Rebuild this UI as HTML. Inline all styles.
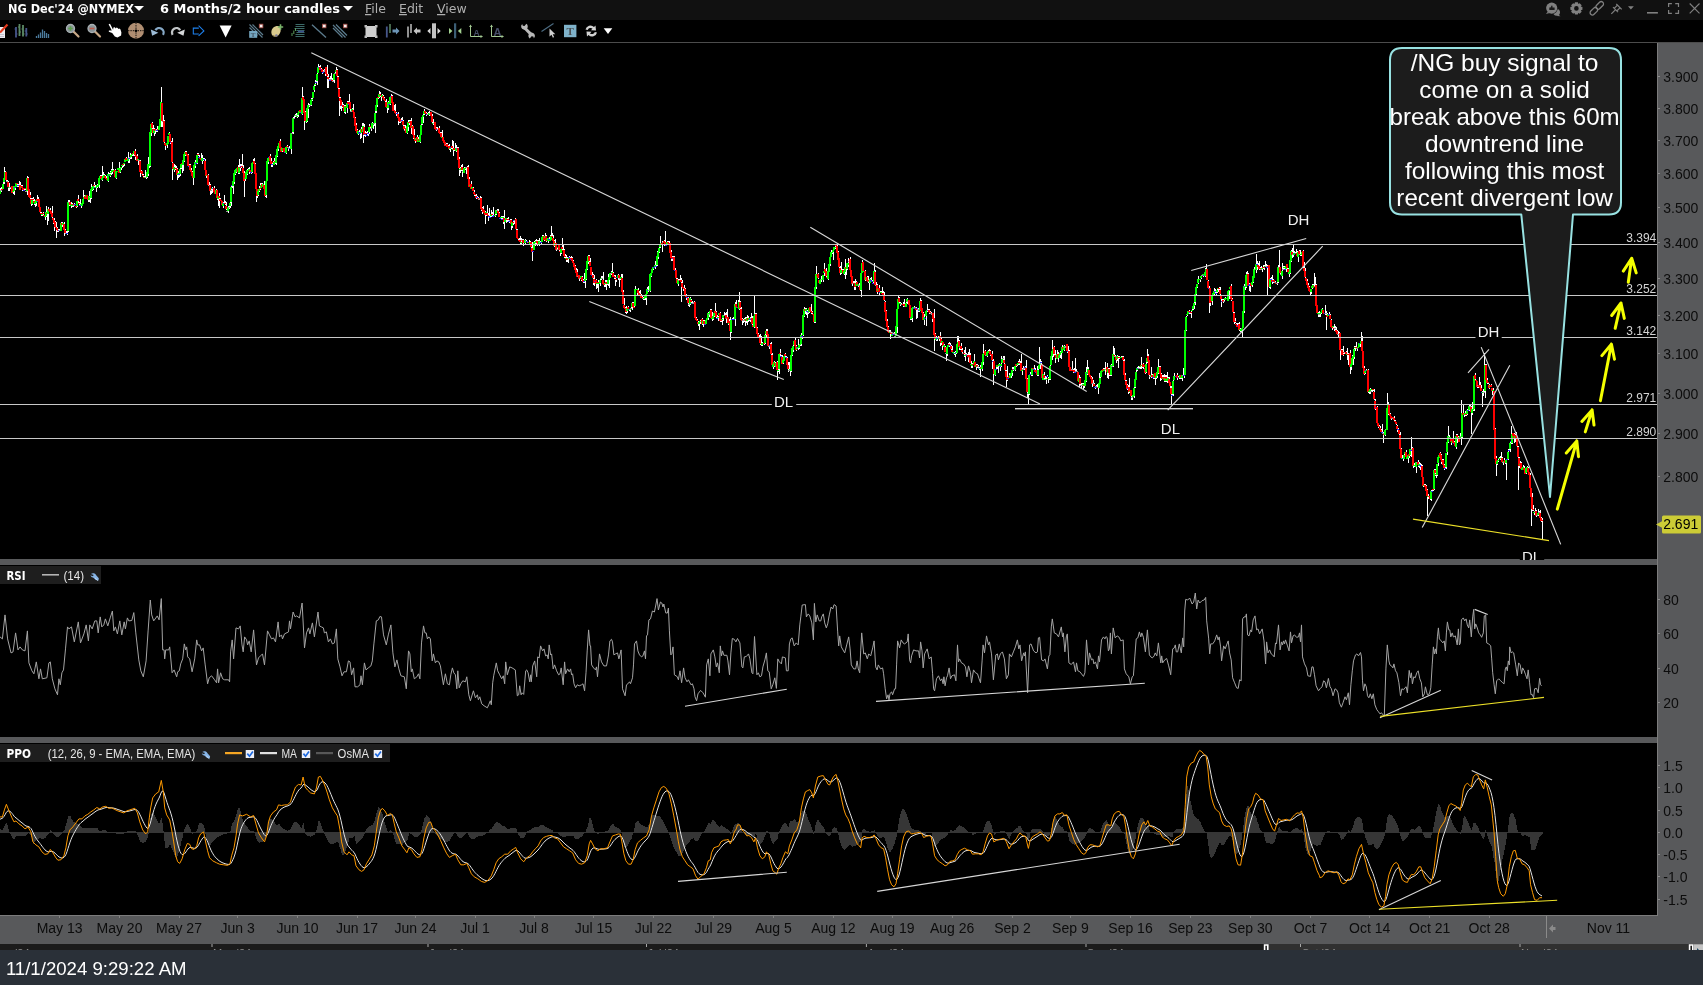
<!DOCTYPE html>
<html lang="en"><head><meta charset="utf-8"><title>NG Dec'24 @NYMEX - 6 Months/2 hour candles</title>
<style>
html,body{margin:0;padding:0;background:#000;overflow:hidden}
body{width:1703px;height:985px;position:relative;font-family:"Liberation Sans",sans-serif}
svg{position:absolute;left:0;top:0;display:block;will-change:transform}
text{font-family:"Liberation Sans",sans-serif}
.t{font-family:"DejaVu Sans","Liberation Sans",sans-serif;font-weight:bold;font-size:12px;fill:#fff}
.m{font-family:"DejaVu Sans","Liberation Sans",sans-serif;font-size:12.5px;fill:#b0b0b0}
.ax{font-size:14px;fill:#0c0c0c}
.lv{font-size:12px;fill:#d4d4d4}
.lb{font-size:15px;fill:#f0f0f0}
.co{font-size:24px;fill:#ffffff;text-anchor:middle}
.hd{font-size:12px;fill:#e6e6e6}
.hb{font-family:"DejaVu Sans","Liberation Sans",sans-serif;font-weight:bold;font-size:12px;fill:#fff}
</style></head><body>
<svg width="1703" height="985" viewBox="0 0 1703 985">
<rect width="1703" height="985" fill="#000"/>
<rect x="0" y="0" width="1703" height="20" fill="#111111"/>
<rect x="0" y="42" width="1703" height="1" fill="#4c4c4c"/>
<rect x="1657" y="43" width="46" height="901" fill="#58595b"/>
<rect x="1657" y="43" width="1" height="873" fill="#7c7c7c"/>
<rect x="0" y="559" width="1657" height="6" fill="#58595b"/>
<rect x="0" y="737" width="1657" height="6" fill="#58595b"/>
<rect x="0" y="915" width="1703" height="29" fill="#58595b"/>
<rect x="0" y="915" width="1658" height="1" fill="#7c7c7c"/>
<rect x="0" y="944" width="1703" height="6" fill="#1b1b1b"/>
<rect x="1266" y="944" width="424" height="6" fill="#303030"/>
<clipPath id="cs"><rect x="0" y="944" width="1703" height="6"/></clipPath><g clip-path="url(#cs)">
<rect x="-6.5" y="944" width="1" height="3" fill="#a8a8a8"/>
<text x="-5" y="956.6" style="font-size:11px;fill:#8c8c8c">Apr '24</text>
<rect x="211.5" y="944" width="1" height="3" fill="#a8a8a8"/>
<text x="213" y="956.6" style="font-size:11px;fill:#8c8c8c">May '24</text>
<rect x="427.5" y="944" width="1" height="3" fill="#a8a8a8"/>
<text x="429" y="956.6" style="font-size:11px;fill:#8c8c8c">Jun '24</text>
<rect x="646" y="944" width="1" height="3" fill="#a8a8a8"/>
<text x="647.5" y="956.6" style="font-size:11px;fill:#8c8c8c">Jul '24</text>
<rect x="865.9" y="944" width="1" height="3" fill="#a8a8a8"/>
<text x="867.4" y="956.6" style="font-size:11px;fill:#8c8c8c">Aug '24</text>
<rect x="1085.5" y="944" width="1" height="3" fill="#a8a8a8"/>
<text x="1087" y="956.6" style="font-size:11px;fill:#8c8c8c">Sep '24</text>
<rect x="1300" y="944" width="1" height="3" fill="#a8a8a8"/>
<text x="1301.5" y="956.6" style="font-size:11px;fill:#8c8c8c">Oct '24</text>
<rect x="1519.5" y="944" width="1" height="3" fill="#a8a8a8"/>
<text x="1521" y="956.6" style="font-size:11px;fill:#8c8c8c">Nov '24</text>
</g>
<path d="M1263.8 950v-5.800h4.800v5.800h-1.600v-4.200h-1.600v4.200z" fill="#fff"/>
<path d="M1688.8 950v-5.800h4.800v5.800h-1.600v-4.200h-1.600v4.200z" fill="#fff"/>
<rect x="1693.6" y="944.2" width="9.400" height="5.800" fill="#c4c4c4"/><path d="M1697 948l2 2h-2z" fill="#1e4a66"/>
<rect x="0" y="950" width="1703" height="35" fill="#2a3038"/>
<text x="5.9" y="975" style="font-size:18px;fill:#fff" textLength="180.7" lengthAdjust="spacingAndGlyphs">11/1/2024 9:29:22 AM</text>
<rect x="1658" y="76" width="2" height="1" fill="#8c8c8c"/>
<text class="ax" x="1663.3" y="82">3.900</text>
<rect x="1658" y="108" width="2" height="1" fill="#8c8c8c"/>
<text class="ax" x="1663.3" y="114">3.800</text>
<rect x="1658" y="140" width="2" height="1" fill="#8c8c8c"/>
<text class="ax" x="1663.3" y="146">3.700</text>
<rect x="1658" y="173" width="2" height="1" fill="#8c8c8c"/>
<text class="ax" x="1663.3" y="179">3.600</text>
<rect x="1658" y="207" width="2" height="1" fill="#8c8c8c"/>
<text class="ax" x="1663.3" y="213">3.500</text>
<rect x="1658" y="242" width="2" height="1" fill="#8c8c8c"/>
<text class="ax" x="1663.3" y="248">3.400</text>
<rect x="1658" y="278" width="2" height="1" fill="#8c8c8c"/>
<text class="ax" x="1663.3" y="284">3.300</text>
<rect x="1658" y="315" width="2" height="1" fill="#8c8c8c"/>
<text class="ax" x="1663.3" y="321">3.200</text>
<rect x="1658" y="353" width="2" height="1" fill="#8c8c8c"/>
<text class="ax" x="1663.3" y="359">3.100</text>
<rect x="1658" y="393" width="2" height="1" fill="#8c8c8c"/>
<text class="ax" x="1663.3" y="399">3.000</text>
<rect x="1658" y="433" width="2" height="1" fill="#8c8c8c"/>
<text class="ax" x="1663.3" y="439">2.900</text>
<rect x="1658" y="476" width="2" height="1" fill="#8c8c8c"/>
<text class="ax" x="1663.3" y="482">2.800</text>
<rect x="1658" y="599" width="2" height="1" fill="#8c8c8c"/>
<text class="ax" x="1663.3" y="605">80</text>
<rect x="1658" y="633" width="2" height="1" fill="#8c8c8c"/>
<text class="ax" x="1663.3" y="639">60</text>
<rect x="1658" y="668" width="2" height="1" fill="#8c8c8c"/>
<text class="ax" x="1663.3" y="674">40</text>
<rect x="1658" y="702" width="2" height="1" fill="#8c8c8c"/>
<text class="ax" x="1663.3" y="708">20</text>
<rect x="1658" y="765" width="2" height="1" fill="#8c8c8c"/>
<text class="ax" x="1663.3" y="771">1.5</text>
<rect x="1658" y="787" width="2" height="1" fill="#8c8c8c"/>
<text class="ax" x="1663.3" y="793">1.0</text>
<rect x="1658" y="810" width="2" height="1" fill="#8c8c8c"/>
<text class="ax" x="1663.3" y="816">0.5</text>
<rect x="1658" y="832" width="2" height="1" fill="#8c8c8c"/>
<text class="ax" x="1663.3" y="838">0.0</text>
<rect x="1658" y="854" width="2" height="1" fill="#8c8c8c"/>
<text class="ax" x="1663.3" y="860">-0.5</text>
<rect x="1658" y="876" width="2" height="1" fill="#8c8c8c"/>
<text class="ax" x="1663.3" y="882">-1.0</text>
<rect x="1658" y="899" width="2" height="1" fill="#8c8c8c"/>
<text class="ax" x="1663.3" y="905">-1.5</text>
<rect x="59" y="916" width="1" height="2" fill="#828282"/>
<text class="ax" x="59.6" y="933" text-anchor="middle">May 13</text>
<rect x="119" y="916" width="1" height="2" fill="#828282"/>
<text class="ax" x="119.5" y="933" text-anchor="middle">May 20</text>
<rect x="179" y="916" width="1" height="2" fill="#828282"/>
<text class="ax" x="179" y="933" text-anchor="middle">May 27</text>
<rect x="237" y="916" width="1" height="2" fill="#828282"/>
<text class="ax" x="237.6" y="933" text-anchor="middle">Jun 3</text>
<rect x="297" y="916" width="1" height="2" fill="#828282"/>
<text class="ax" x="297.5" y="933" text-anchor="middle">Jun 10</text>
<rect x="357" y="916" width="1" height="2" fill="#828282"/>
<text class="ax" x="357" y="933" text-anchor="middle">Jun 17</text>
<rect x="415" y="916" width="1" height="2" fill="#828282"/>
<text class="ax" x="415.6" y="933" text-anchor="middle">Jun 24</text>
<rect x="475" y="916" width="1" height="2" fill="#828282"/>
<text class="ax" x="475" y="933" text-anchor="middle">Jul 1</text>
<rect x="534" y="916" width="1" height="2" fill="#828282"/>
<text class="ax" x="534" y="933" text-anchor="middle">Jul 8</text>
<rect x="593" y="916" width="1" height="2" fill="#828282"/>
<text class="ax" x="593.5" y="933" text-anchor="middle">Jul 15</text>
<rect x="653" y="916" width="1" height="2" fill="#828282"/>
<text class="ax" x="653.4" y="933" text-anchor="middle">Jul 22</text>
<rect x="713" y="916" width="1" height="2" fill="#828282"/>
<text class="ax" x="713.3" y="933" text-anchor="middle">Jul 29</text>
<rect x="773" y="916" width="1" height="2" fill="#828282"/>
<text class="ax" x="773.5" y="933" text-anchor="middle">Aug 5</text>
<rect x="833" y="916" width="1" height="2" fill="#828282"/>
<text class="ax" x="833.4" y="933" text-anchor="middle">Aug 12</text>
<rect x="892" y="916" width="1" height="2" fill="#828282"/>
<text class="ax" x="892.3" y="933" text-anchor="middle">Aug 19</text>
<rect x="952" y="916" width="1" height="2" fill="#828282"/>
<text class="ax" x="952.2" y="933" text-anchor="middle">Aug 26</text>
<rect x="1012" y="916" width="1" height="2" fill="#828282"/>
<text class="ax" x="1012.5" y="933" text-anchor="middle">Sep 2</text>
<rect x="1070" y="916" width="1" height="2" fill="#828282"/>
<text class="ax" x="1070.4" y="933" text-anchor="middle">Sep 9</text>
<rect x="1130" y="916" width="1" height="2" fill="#828282"/>
<text class="ax" x="1130.5" y="933" text-anchor="middle">Sep 16</text>
<rect x="1190" y="916" width="1" height="2" fill="#828282"/>
<text class="ax" x="1190.4" y="933" text-anchor="middle">Sep 23</text>
<rect x="1250" y="916" width="1" height="2" fill="#828282"/>
<text class="ax" x="1250.3" y="933" text-anchor="middle">Sep 30</text>
<rect x="1310" y="916" width="1" height="2" fill="#828282"/>
<text class="ax" x="1310.5" y="933" text-anchor="middle">Oct 7</text>
<rect x="1369" y="916" width="1" height="2" fill="#828282"/>
<text class="ax" x="1369.7" y="933" text-anchor="middle">Oct 14</text>
<rect x="1429" y="916" width="1" height="2" fill="#828282"/>
<text class="ax" x="1429.7" y="933" text-anchor="middle">Oct 21</text>
<rect x="1489" y="916" width="1" height="2" fill="#828282"/>
<text class="ax" x="1489.2" y="933" text-anchor="middle">Oct 28</text>
<text class="ax" x="1608.5" y="933" text-anchor="middle">Nov 11</text>
<rect x="1546" y="916" width="1" height="22" fill="#8a8a8a"/>
<path d="M1549 928.500l4-4v2.400h2.500v3.200h-2.500v2.400z" fill="#8a8a8a"/>
<path d="M1656 524.500l6-3.200v-4.300q0-1.500 1.500-1.500h36q1.500 0 1.500 1.500v15q0 1.500-1.500 1.500h-36q-1.500 0-1.500-1.500v-4.300z" fill="#cccc36"/>
<text x="1663.2" y="528.700" style="font-size:14px;fill:#000">2.691</text>
<g shape-rendering="crispEdges" fill="none" stroke-width="1"><path stroke="#ffffff" d="M0.5 188V190M1.5 187V189M1.5 191V192M3.5 182V184M4.5 167V172M4.5 182V184M5.5 171V172M6.5 180V181M7.5 180V181M8.5 181V182M8.5 188V191M9.5 183V187M9.5 188V191M10.5 188V189M13.5 192V194M14.5 191V195M15.5 188V190M17.5 184V185M17.5 186V187M18.5 184V185M18.5 186V187M19.5 181V185M20.5 182V185M21.5 185V186M22.5 185V186M22.5 190V191M24.5 189V190M25.5 189V190M27.5 176V178M27.5 191V195M28.5 177V178M30.5 192V195M30.5 198V199M31.5 198V199M31.5 204V206M32.5 198V199M32.5 204V205M33.5 197V199M33.5 200V201M34.5 199V201M34.5 204V205M35.5 204V207M36.5 203V206M37.5 195V199M38.5 197V199M40.5 212V213M41.5 212V213M41.5 215V216M42.5 215V216M43.5 212V213M43.5 214V215M45.5 217V220M46.5 206V212M46.5 216V217M47.5 214V225M48.5 207V209M48.5 214V221M50.5 208V210M52.5 206V213M52.5 217V218M53.5 223V224M54.5 218V220M54.5 227V231M55.5 221V222M56.5 222V227M56.5 230V238M57.5 227V228M57.5 231V232M58.5 229V230M58.5 231V232M59.5 229V230M61.5 222V223M62.5 222V223M62.5 225V227M64.5 222V224M64.5 233V236M65.5 229V230M66.5 231V233M67.5 231V233M67.5 234V235M68.5 200V202M68.5 231V232M69.5 200V202M69.5 205V206M71.5 202V204M71.5 206V208M72.5 203V204M72.5 206V207M73.5 206V207M74.5 203V204M76.5 207V208M77.5 206V207M78.5 195V199M78.5 201V203M79.5 202V203M79.5 204V205M80.5 199V204M81.5 206V208M83.5 190V197M84.5 195V196M88.5 200V202M89.5 191V196M89.5 200V202M90.5 198V203M91.5 184V187M91.5 198V199M92.5 190V191M93.5 189V190M94.5 182V185M94.5 186V187M95.5 185V187M96.5 188V192M97.5 184V185M97.5 187V188M99.5 185V188M100.5 175V176M101.5 175V176M102.5 166V176M102.5 180V181M103.5 172V175M104.5 174V175M105.5 175V176M106.5 176V178M108.5 172V174M108.5 181V182M109.5 173V174M110.5 171V172M110.5 173V174M110.5 176V177M111.5 169V170M111.5 173V175M112.5 162V170M112.5 172V174M113.5 169V170M115.5 169V170M116.5 178V179M119.5 162V168M120.5 172V173M121.5 168V170M122.5 166V168M123.5 165V167M124.5 164V166M126.5 157V158M128.5 152V158M128.5 161V163M129.5 159V163M130.5 153V155M130.5 158V159M131.5 157V159M132.5 155V156M133.5 154V156M134.5 155V156M135.5 149V151M135.5 157V160M137.5 154V156M138.5 161V165M140.5 160V161M140.5 173V177M141.5 170V171M142.5 174V175M143.5 174V175M143.5 176V177M144.5 176V177M145.5 170V177M146.5 178V179M147.5 177V178M148.5 157V164M148.5 174V176M149.5 166V168M150.5 166V167M151.5 133V136M152.5 122V123M152.5 128V129M153.5 125V129M154.5 128V129M154.5 133V136M155.5 131V134M156.5 129V130M156.5 131V132M157.5 126V129M157.5 131V132M161.5 87V102M161.5 121V127M162.5 122V127M163.5 115V121M164.5 120V121M164.5 142V143M165.5 146V150M167.5 145V148M169.5 132V133M170.5 143V144M171.5 141V142M172.5 138V142M172.5 162V163M172.5 169V180M174.5 164V167M174.5 170V172M175.5 165V168M175.5 169V170M176.5 166V168M177.5 168V169M177.5 175V180M178.5 171V173M178.5 175V178M179.5 175V177M180.5 168V169M180.5 174V176M181.5 168V169M182.5 165V173M183.5 165V171M184.5 161V162M185.5 151V152M185.5 155V156M186.5 151V152M188.5 154V155M189.5 164V165M190.5 164V165M191.5 168V170M192.5 171V172M193.5 178V185M195.5 160V162M195.5 166V168M197.5 153V154M197.5 163V164M198.5 153V154M198.5 155V156M199.5 155V157M201.5 153V158M202.5 155V158M202.5 161V164M203.5 158V159M203.5 160V161M204.5 158V159M205.5 159V161M206.5 176V178M208.5 174V175M209.5 182V185M210.5 184V185M210.5 191V195M211.5 189V190M211.5 191V194M212.5 187V188M212.5 189V193M214.5 186V188M216.5 189V190M217.5 199V200M218.5 199V206M219.5 193V196M219.5 198V199M219.5 201V208M220.5 198V199M223.5 202V203M223.5 206V208M224.5 195V203M225.5 201V203M225.5 204V205M226.5 202V206M226.5 209V210M228.5 206V207M228.5 211V213M229.5 206V207M229.5 208V209M230.5 202V203M230.5 206V208M231.5 186V187M231.5 202V206M232.5 186V188M233.5 186V194M234.5 182V184M235.5 174V175M236.5 172V173M238.5 165V167M238.5 173V174M239.5 159V167M239.5 173V174M240.5 164V166M240.5 168V171M241.5 164V166M241.5 167V168M242.5 154V166M243.5 165V168M244.5 171V173M244.5 181V197M245.5 179V181M247.5 169V170M247.5 174V175M248.5 168V169M249.5 167V169M249.5 172V174M251.5 173V174M252.5 172V173M253.5 159V161M254.5 158V161M255.5 163V164M256.5 196V202M257.5 196V198M258.5 195V196M259.5 186V188M259.5 191V192M260.5 183V185M260.5 189V190M261.5 183V184M262.5 183V184M264.5 181V185M265.5 196V197M266.5 195V198M268.5 162V164M270.5 154V156M271.5 158V161M271.5 165V167M272.5 163V164M272.5 165V167M273.5 161V162M274.5 158V161M275.5 163V164M276.5 163V165M277.5 156V157M278.5 149V151M280.5 139V141M282.5 151V152M286.5 153V154M287.5 145V146M288.5 149V151M289.5 146V148M291.5 149V154M292.5 132V133M293.5 117V118M293.5 132V134M294.5 116V118M295.5 114V115M295.5 116V117M296.5 113V115M297.5 115V116M297.5 117V118M298.5 115V117M302.5 87V97M302.5 114V115M303.5 96V97M304.5 121V130M305.5 111V112M306.5 122V123M307.5 121V122M308.5 103V105M308.5 109V118M309.5 104V105M309.5 106V107M311.5 98V99M311.5 105V106M312.5 98V99M312.5 100V101M314.5 85V86M314.5 90V92M315.5 80V82M315.5 83V84M315.5 85V86M316.5 81V82M317.5 73V74M317.5 81V85M318.5 64V67M319.5 66V67M320.5 65V67M321.5 68V69M322.5 73V74M323.5 70V71M324.5 69V70M325.5 74V76M327.5 65V74M327.5 76V77M327.5 79V88M328.5 74V77M328.5 80V88M329.5 78V79M330.5 76V79M331.5 73V79M332.5 78V80M333.5 80V81M334.5 80V83M335.5 72V73M336.5 67V70M337.5 69V70M337.5 76V77M338.5 76V77M338.5 88V89M339.5 88V89M339.5 97V98M339.5 101V116M340.5 97V98M340.5 106V109M341.5 106V111M342.5 102V105M342.5 107V108M343.5 104V105M344.5 105V106M344.5 112V113M345.5 105V106M345.5 112V114M347.5 101V102M347.5 108V113M348.5 101V102M349.5 94V102M350.5 109V111M352.5 108V109M353.5 104V110M355.5 117V118M356.5 123V125M357.5 129V130M358.5 134V135M359.5 130V132M360.5 134V139M361.5 127V129M361.5 133V138M362.5 123V126M363.5 123V126M363.5 135V143M364.5 124V127M364.5 135V136M365.5 131V133M365.5 135V137M366.5 132V133M367.5 131V133M367.5 134V135M368.5 134V136M369.5 124V126M369.5 132V134M370.5 127V128M371.5 129V131M372.5 122V123M373.5 125V129M374.5 124V126M375.5 111V113M375.5 123V133M376.5 111V113M377.5 105V107M378.5 98V99M379.5 91V94M379.5 97V98M380.5 92V94M380.5 96V97M381.5 97V101M382.5 94V95M383.5 95V96M384.5 97V98M385.5 101V102M386.5 99V102M387.5 108V113M388.5 101V102M388.5 108V110M390.5 104V105M391.5 94V96M392.5 95V96M394.5 105V110M395.5 104V111M396.5 112V113M396.5 114V116M398.5 112V114M398.5 121V125M399.5 122V123M400.5 122V123M401.5 118V120M402.5 117V120M403.5 120V121M403.5 125V126M404.5 125V126M404.5 129V130M405.5 125V128M407.5 133V134M408.5 120V122M408.5 127V131M409.5 120V121M409.5 123V125M410.5 120V121M411.5 118V121M411.5 128V134M412.5 125V126M413.5 138V139M414.5 129V135M415.5 141V143M417.5 135V137M418.5 137V139M420.5 142V143M421.5 124V125M422.5 124V125M423.5 114V115M423.5 117V123M424.5 109V111M424.5 114V115M426.5 112V113M426.5 115V116M427.5 113V114M428.5 112V113M429.5 111V113M429.5 115V116M432.5 114V116M432.5 122V123M433.5 119V123M433.5 124V125M436.5 127V128M436.5 130V131M437.5 127V129M439.5 126V128M440.5 132V133M441.5 132V133M442.5 130V137M446.5 143V144M447.5 143V144M448.5 145V146M449.5 144V146M449.5 149V150M450.5 149V152M451.5 148V149M452.5 140V146M452.5 148V149M453.5 141V148M453.5 150V156M454.5 150V151M455.5 143V148M456.5 145V148M456.5 151V152M457.5 147V148M458.5 147V148M459.5 157V159M459.5 168V169M459.5 170V176M460.5 167V168M460.5 170V173M461.5 165V167M461.5 170V171M462.5 164V167M462.5 170V171M462.5 172V177M464.5 167V168M465.5 169V170M466.5 168V174M467.5 166V167M468.5 165V167M469.5 177V179M471.5 181V184M473.5 187V188M474.5 190V192M474.5 195V196M475.5 195V196M476.5 194V196M476.5 198V199M477.5 196V197M478.5 197V198M480.5 196V198M481.5 197V198M481.5 210V211M482.5 207V208M482.5 212V214M483.5 206V209M485.5 211V212M485.5 215V224M486.5 215V216M487.5 205V213M488.5 213V215M488.5 217V221M489.5 208V216M490.5 216V217M491.5 210V214M491.5 216V217M492.5 212V214M492.5 215V216M493.5 207V215M495.5 214V215M495.5 216V217M496.5 214V215M497.5 209V210M498.5 209V211M499.5 212V213M501.5 216V217M501.5 218V219M502.5 216V217M502.5 218V219M503.5 216V217M503.5 222V224M504.5 210V218M504.5 222V229M506.5 220V223M507.5 218V219M507.5 220V222M508.5 217V219M508.5 220V221M509.5 222V223M510.5 219V220M511.5 219V220M511.5 226V230M512.5 226V228M513.5 221V222M513.5 223V225M514.5 221V224M515.5 218V219M516.5 229V230M517.5 229V230M518.5 239V240M519.5 238V240M520.5 236V240M520.5 243V244M521.5 238V240M521.5 241V242M521.5 243V244M522.5 239V240M523.5 239V240M523.5 243V246M525.5 239V240M525.5 243V244M526.5 240V241M529.5 240V242M530.5 241V242M531.5 247V248M532.5 242V248M532.5 252V261M534.5 241V242M535.5 240V241M535.5 243V246M536.5 239V241M536.5 243V244M537.5 240V241M537.5 244V246M538.5 240V241M538.5 244V245M539.5 238V241M539.5 244V246M540.5 241V242M541.5 243V244M542.5 235V236M543.5 235V236M544.5 240V241M545.5 233V236M546.5 235V236M546.5 241V242M548.5 241V243M549.5 237V239M550.5 235V236M551.5 226V236M552.5 233V236M553.5 235V238M554.5 240V241M554.5 246V247M555.5 239V243M556.5 250V251M557.5 248V249M558.5 244V245M559.5 244V245M559.5 250V251M560.5 253V256M561.5 253V254M562.5 238V247M562.5 249V250M563.5 245V250M564.5 249V250M564.5 257V258M565.5 254V256M565.5 257V258M566.5 255V258M566.5 260V262M567.5 257V258M567.5 260V262M568.5 259V263M569.5 256V257M570.5 257V258M571.5 256V258M572.5 257V258M573.5 260V261M575.5 265V266M576.5 268V270M577.5 269V272M579.5 279V281M581.5 280V281M582.5 276V277M583.5 279V280M583.5 282V283M584.5 273V279M584.5 282V283M585.5 281V288M586.5 279V280M587.5 269V270M588.5 255V256M588.5 262V264M589.5 255V256M589.5 261V262M590.5 258V262M592.5 272V275M593.5 274V275M593.5 278V279M593.5 283V285M594.5 275V279M594.5 283V286M596.5 279V280M596.5 284V289M597.5 284V288M598.5 280V282M598.5 284V292M600.5 279V280M600.5 283V286M601.5 276V278M601.5 279V280M602.5 276V278M603.5 272V280M604.5 285V287M605.5 280V282M605.5 284V287M606.5 280V282M606.5 284V290M607.5 284V285M608.5 274V277M608.5 284V286M609.5 280V288M611.5 271V272M611.5 274V275M612.5 263V272M613.5 272V273M614.5 275V276M614.5 278V279M615.5 275V277M615.5 278V279M615.5 280V286M616.5 280V282M618.5 274V275M618.5 278V280M619.5 279V287M620.5 279V280M621.5 274V277M622.5 274V278M623.5 290V292M624.5 298V305M625.5 307V308M625.5 312V313M626.5 306V308M626.5 312V314M627.5 311V313M628.5 306V307M629.5 310V311M630.5 310V312M631.5 307V308M632.5 302V303M632.5 307V310M633.5 302V303M634.5 306V307M635.5 286V289M637.5 293V296M638.5 288V290M638.5 295V296M639.5 291V293M639.5 295V296M640.5 290V294M641.5 294V296M642.5 296V297M643.5 297V298M643.5 299V300M644.5 299V300M645.5 298V300M646.5 298V305M647.5 287V289M648.5 286V290M648.5 291V292M650.5 291V292M651.5 276V277M653.5 269V270M655.5 261V265M655.5 267V269M656.5 265V266M657.5 251V252M657.5 265V266M658.5 257V259M659.5 247V248M659.5 252V253M660.5 236V243M660.5 247V248M662.5 241V242M662.5 244V252M664.5 240V241M664.5 245V246M665.5 231V242M667.5 241V242M668.5 241V242M669.5 241V243M671.5 250V252M671.5 259V261M672.5 256V257M672.5 259V261M673.5 256V257M674.5 256V257M675.5 268V270M676.5 278V279M677.5 278V279M678.5 279V280M678.5 284V286M679.5 279V280M680.5 275V280M681.5 278V280M681.5 282V283M681.5 287V302M682.5 280V283M683.5 289V291M684.5 285V288M685.5 288V289M686.5 294V295M686.5 298V300M688.5 297V298M688.5 303V304M688.5 305V306M689.5 305V307M690.5 297V298M690.5 304V305M691.5 299V300M691.5 302V303M692.5 301V303M694.5 301V302M696.5 317V318M697.5 319V320M698.5 321V322M698.5 324V326M699.5 324V330M700.5 320V321M700.5 322V324M702.5 318V319M702.5 324V325M703.5 320V321M703.5 324V327M704.5 320V321M708.5 312V313M708.5 318V320M709.5 315V317M710.5 309V310M711.5 309V310M712.5 312V316M712.5 319V321M713.5 319V320M714.5 316V317M715.5 303V311M716.5 311V312M716.5 317V318M717.5 315V317M718.5 316V317M718.5 318V321M720.5 312V313M720.5 321V322M721.5 321V322M722.5 318V319M722.5 320V325M723.5 318V321M724.5 312V315M725.5 313V315M726.5 312V315M726.5 319V323M727.5 309V317M728.5 324V325M729.5 319V321M730.5 317V320M730.5 332V340M731.5 332V333M732.5 318V319M733.5 317V319M735.5 302V304M735.5 319V326M736.5 300V304M738.5 300V302M739.5 292V302M739.5 309V310M740.5 301V302M740.5 308V309M741.5 307V309M742.5 318V319M742.5 321V325M743.5 319V320M743.5 321V323M744.5 318V319M744.5 321V322M745.5 317V319M745.5 321V326M746.5 317V318M746.5 321V323M747.5 315V318M747.5 321V325M748.5 316V318M748.5 320V322M749.5 320V321M750.5 317V318M750.5 320V322M751.5 313V318M752.5 316V318M752.5 324V325M754.5 296V314M754.5 327V328M755.5 313V314M756.5 313V314M757.5 327V328M758.5 333V334M759.5 335V337M760.5 334V337M760.5 344V345M761.5 336V343M761.5 345V346M762.5 342V343M762.5 345V346M764.5 344V345M765.5 334V335M765.5 343V344M766.5 329V331M766.5 335V337M767.5 329V331M769.5 347V349M770.5 343V344M771.5 342V344M771.5 354V355M772.5 353V355M773.5 367V369M774.5 361V362M774.5 366V367M775.5 362V363M777.5 361V362M777.5 371V380M778.5 369V370M778.5 371V372M779.5 369V374M780.5 349V353M780.5 354V356M781.5 355V356M782.5 355V357M783.5 363V364M785.5 353V354M785.5 356V357M786.5 356V357M787.5 357V358M788.5 362V365M788.5 369V370M788.5 371V372M789.5 362V369M790.5 371V376M791.5 371V372M792.5 355V356M793.5 345V346M793.5 350V352M795.5 338V340M796.5 345V346M796.5 350V351M798.5 339V345M798.5 348V350M799.5 348V349M800.5 345V346M801.5 333V335M801.5 344V346M802.5 337V339M803.5 335V336M804.5 307V309M804.5 316V317M805.5 308V309M805.5 311V314M806.5 308V309M806.5 312V315M807.5 310V311M807.5 313V318M808.5 313V314M809.5 312V313M811.5 304V311M811.5 313V314M812.5 311V312M812.5 313V314M814.5 322V323M815.5 322V323M816.5 266V274M816.5 287V289M818.5 273V274M818.5 278V279M821.5 276V279M821.5 280V282M823.5 280V282M824.5 263V269M824.5 273V276M826.5 268V271M826.5 276V277M828.5 279V280M830.5 264V266M831.5 250V252M832.5 253V254M833.5 252V260M835.5 246V247M835.5 248V249M837.5 244V246M838.5 251V252M839.5 267V268M840.5 266V268M840.5 273V275M841.5 262V270M841.5 273V274M842.5 269V270M843.5 269V270M844.5 274V275M845.5 259V267M845.5 272V279M846.5 269V275M847.5 269V270M848.5 258V261M848.5 262V263M848.5 265V267M850.5 257V259M852.5 284V286M853.5 281V283M854.5 281V283M854.5 287V290M855.5 279V283M855.5 287V290M856.5 281V282M858.5 286V287M859.5 283V285M860.5 290V291M861.5 290V297M862.5 260V262M865.5 270V271M865.5 280V281M867.5 276V277M868.5 276V280M868.5 282V283M869.5 283V290M870.5 278V279M871.5 277V280M872.5 280V281M873.5 282V283M874.5 263V271M875.5 270V272M876.5 282V285M877.5 284V285M877.5 292V294M879.5 285V288M879.5 293V295M880.5 291V292M881.5 291V292M882.5 287V293M883.5 291V293M884.5 292V296M884.5 300V301M885.5 301V302M886.5 310V311M887.5 319V321M888.5 326V327M889.5 330V331M890.5 330V332M890.5 334V339M894.5 332V333M897.5 327V333M898.5 296V298M899.5 297V298M899.5 302V303M900.5 302V303M900.5 305V306M901.5 303V304M903.5 302V304M903.5 306V307M904.5 299V304M906.5 302V303M907.5 298V299M907.5 302V304M910.5 319V320M911.5 319V320M912.5 318V322M914.5 306V307M916.5 307V308M916.5 310V319M917.5 310V318M918.5 308V309M918.5 311V312M919.5 311V312M920.5 298V301M921.5 300V301M923.5 312V313M924.5 314V317M924.5 320V325M926.5 316V326M927.5 304V310M927.5 311V312M928.5 309V310M929.5 309V310M929.5 313V314M930.5 311V312M931.5 312V313M932.5 319V322M934.5 309V318M934.5 339V351M935.5 333V334M936.5 336V338M936.5 340V341M937.5 339V341M938.5 336V337M939.5 339V341M940.5 332V336M940.5 343V346M941.5 338V339M941.5 343V345M942.5 346V350M944.5 344V345M945.5 346V347M946.5 354V361M947.5 354V356M948.5 343V344M949.5 342V344M949.5 346V347M950.5 343V345M951.5 345V346M951.5 349V350M952.5 346V350M954.5 352V353M954.5 354V355M955.5 351V352M955.5 354V357M956.5 353V354M957.5 336V342M958.5 336V341M959.5 340V341M959.5 348V350M960.5 349V350M961.5 343V346M961.5 349V350M962.5 348V350M962.5 352V353M964.5 350V353M964.5 354V355M964.5 356V357M965.5 347V354M965.5 356V361M966.5 353V354M967.5 354V355M968.5 352V355M968.5 358V362M969.5 349V355M970.5 353V355M971.5 361V364M971.5 366V368M972.5 363V364M972.5 366V368M974.5 354V361M976.5 364V365M976.5 367V370M977.5 364V365M977.5 367V368M978.5 365V366M978.5 367V368M979.5 367V368M979.5 369V370M980.5 365V367M980.5 369V377M982.5 369V371M983.5 344V353M983.5 362V365M985.5 350V351M987.5 356V357M988.5 350V351M989.5 349V351M990.5 350V351M990.5 355V356M992.5 351V354M992.5 360V361M992.5 362V369M993.5 359V361M993.5 374V385M995.5 375V376M996.5 367V369M997.5 367V369M998.5 366V373M999.5 363V364M1000.5 367V371M1001.5 356V359M1001.5 363V364M1001.5 366V367M1003.5 356V358M1003.5 359V360M1004.5 356V360M1004.5 363V364M1005.5 370V371M1006.5 370V371M1006.5 380V387M1007.5 366V377M1007.5 380V381M1009.5 373V375M1011.5 376V378M1012.5 367V369M1012.5 373V376M1013.5 367V369M1013.5 370V371M1015.5 370V371M1016.5 366V367M1017.5 365V366M1018.5 361V362M1018.5 364V365M1019.5 359V362M1019.5 364V365M1020.5 361V363M1021.5 354V363M1022.5 368V369M1022.5 371V375M1023.5 366V368M1024.5 369V370M1025.5 366V367M1026.5 360V368M1027.5 378V379M1027.5 392V393M1027.5 394V398M1028.5 394V404M1029.5 394V395M1030.5 372V374M1031.5 375V376M1032.5 375V376M1034.5 365V369M1035.5 368V370M1037.5 366V370M1037.5 375V376M1038.5 369V370M1038.5 375V376M1039.5 347V363M1040.5 359V362M1040.5 365V369M1041.5 361V362M1041.5 363V364M1044.5 372V375M1044.5 378V379M1045.5 376V379M1046.5 377V379M1046.5 380V384M1047.5 375V376M1048.5 377V378M1048.5 379V383M1049.5 379V380M1050.5 365V366M1050.5 379V380M1052.5 340V349M1052.5 356V360M1053.5 354V357M1054.5 346V347M1054.5 354V355M1055.5 350V355M1055.5 358V363M1057.5 350V354M1058.5 352V354M1058.5 358V362M1060.5 351V352M1060.5 355V358M1061.5 353V359M1062.5 345V347M1064.5 345V346M1064.5 350V351M1067.5 352V353M1068.5 346V351M1069.5 350V351M1072.5 361V369M1073.5 369V370M1073.5 372V373M1074.5 368V370M1075.5 358V371M1076.5 369V371M1079.5 375V378M1079.5 384V387M1080.5 377V378M1080.5 384V385M1081.5 383V385M1081.5 386V388M1082.5 383V384M1083.5 383V384M1083.5 386V389M1084.5 386V388M1086.5 367V372M1086.5 381V382M1087.5 360V369M1087.5 374V375M1088.5 367V369M1091.5 376V377M1092.5 377V379M1092.5 384V387M1093.5 380V383M1094.5 383V384M1095.5 388V389M1096.5 385V386M1097.5 384V387M1098.5 388V394M1099.5 373V378M1100.5 377V378M1103.5 368V369M1104.5 368V369M1105.5 362V369M1105.5 370V375M1107.5 363V367M1107.5 373V378M1108.5 368V369M1108.5 373V379M1109.5 368V369M1109.5 375V376M1110.5 375V376M1111.5 364V365M1111.5 375V376M1113.5 346V354M1113.5 366V367M1114.5 348V355M1115.5 355V356M1116.5 360V363M1117.5 355V356M1117.5 359V361M1118.5 356V357M1118.5 358V368M1119.5 356V357M1119.5 358V359M1121.5 356V357M1122.5 356V357M1123.5 356V357M1123.5 360V361M1124.5 359V361M1125.5 373V375M1125.5 380V381M1126.5 380V381M1127.5 384V385M1127.5 389V390M1128.5 385V387M1128.5 392V394M1129.5 378V387M1129.5 392V393M1131.5 396V397M1131.5 398V400M1132.5 398V400M1134.5 387V388M1134.5 396V398M1135.5 387V388M1136.5 370V372M1137.5 367V368M1137.5 370V371M1138.5 366V368M1139.5 367V368M1140.5 367V369M1141.5 357V365M1141.5 366V369M1142.5 367V368M1143.5 363V364M1143.5 367V369M1145.5 373V374M1146.5 362V364M1146.5 372V373M1147.5 349V356M1147.5 362V363M1148.5 354V356M1149.5 375V376M1149.5 377V379M1151.5 367V375M1151.5 377V378M1152.5 374V375M1153.5 378V379M1154.5 378V379M1155.5 378V385M1156.5 378V379M1157.5 376V378M1158.5 359V367M1158.5 373V374M1159.5 366V367M1160.5 366V367M1160.5 378V381M1161.5 373V374M1161.5 379V380M1162.5 375V377M1163.5 375V377M1164.5 374V377M1164.5 381V382M1165.5 375V377M1165.5 381V382M1166.5 375V377M1166.5 381V382M1167.5 372V378M1167.5 381V383M1168.5 377V378M1169.5 377V379M1170.5 386V388M1171.5 386V388M1171.5 394V395M1171.5 396V404M1172.5 394V395M1173.5 380V381M1173.5 394V396M1174.5 373V376M1177.5 373V375M1177.5 378V380M1178.5 376V377M1179.5 378V379M1180.5 378V379M1181.5 378V379M1182.5 378V381M1183.5 368V375M1184.5 376V378M1186.5 316V317M1186.5 330V331M1187.5 315V316M1189.5 310V311M1189.5 313V314M1190.5 313V314M1191.5 311V312M1191.5 313V318M1192.5 309V310M1193.5 309V310M1194.5 302V303M1194.5 306V309M1195.5 302V305M1196.5 294V296M1197.5 287V288M1198.5 276V279M1198.5 283V284M1200.5 280V282M1201.5 278V279M1203.5 276V277M1205.5 268V269M1205.5 276V277M1206.5 264V269M1208.5 280V281M1209.5 286V288M1209.5 303V313M1210.5 303V306M1212.5 295V296M1212.5 301V305M1213.5 295V296M1214.5 288V291M1214.5 294V296M1215.5 289V291M1215.5 292V293M1216.5 292V293M1216.5 294V295M1217.5 289V290M1217.5 292V293M1218.5 289V292M1219.5 287V288M1219.5 289V290M1220.5 287V290M1220.5 294V295M1221.5 299V301M1221.5 302V307M1222.5 299V300M1223.5 299V300M1223.5 302V303M1224.5 300V301M1225.5 297V298M1229.5 291V299M1231.5 284V286M1231.5 300V301M1232.5 298V299M1233.5 312V313M1234.5 312V313M1234.5 322V324M1235.5 318V321M1235.5 322V323M1236.5 323V324M1237.5 323V325M1238.5 323V324M1239.5 322V324M1239.5 330V331M1240.5 328V329M1240.5 331V332M1241.5 331V332M1242.5 330V338M1244.5 284V286M1244.5 311V313M1245.5 287V290M1246.5 272V274M1246.5 287V288M1247.5 271V274M1248.5 273V274M1249.5 283V284M1249.5 286V291M1250.5 286V292M1252.5 285V287M1253.5 282V283M1254.5 267V269M1256.5 254V264M1256.5 270V273M1257.5 261V264M1257.5 267V270M1258.5 263V265M1259.5 261V266M1259.5 269V270M1260.5 267V268M1261.5 266V268M1262.5 269V272M1263.5 265V267M1263.5 268V269M1264.5 265V266M1264.5 268V270M1265.5 261V266M1266.5 264V266M1267.5 265V266M1267.5 268V296M1269.5 287V288M1270.5 278V279M1270.5 287V289M1271.5 277V279M1272.5 275V280M1272.5 282V284M1273.5 279V280M1273.5 282V283M1275.5 281V282M1277.5 282V283M1277.5 284V285M1278.5 265V267M1278.5 282V283M1279.5 250V267M1280.5 273V274M1282.5 263V269M1282.5 270V271M1282.5 276V279M1283.5 266V267M1283.5 268V269M1284.5 266V267M1284.5 268V269M1286.5 269V272M1287.5 268V269M1288.5 268V269M1289.5 274V277M1290.5 273V274M1291.5 250V251M1291.5 261V262M1292.5 248V252M1292.5 255V258M1293.5 245V253M1293.5 255V257M1294.5 251V253M1295.5 252V253M1296.5 249V253M1297.5 251V252M1298.5 257V262M1299.5 250V251M1300.5 250V254M1300.5 255V256M1301.5 255V256M1303.5 250V251M1303.5 267V268M1304.5 262V268M1305.5 268V271M1305.5 277V278M1307.5 279V281M1308.5 283V285M1309.5 286V287M1310.5 292V295M1311.5 292V294M1312.5 284V285M1312.5 288V289M1313.5 284V285M1314.5 273V286M1315.5 277V285M1316.5 284V285M1318.5 312V313M1318.5 315V317M1319.5 311V313M1319.5 315V317M1320.5 314V317M1321.5 313V314M1322.5 308V309M1325.5 305V313M1325.5 314V315M1326.5 311V313M1326.5 314V315M1326.5 317V330M1327.5 313V314M1329.5 312V314M1330.5 314V315M1331.5 319V320M1332.5 328V330M1333.5 327V328M1334.5 324V328M1334.5 329V331M1335.5 326V328M1335.5 329V330M1336.5 327V330M1337.5 330V331M1338.5 331V334M1338.5 335V337M1339.5 332V333M1340.5 351V360M1341.5 349V350M1342.5 349V350M1343.5 346V352M1343.5 353V354M1343.5 355V356M1344.5 353V354M1346.5 351V352M1347.5 348V354M1347.5 355V360M1348.5 353V354M1348.5 355V365M1350.5 350V353M1350.5 367V374M1351.5 367V370M1352.5 355V356M1353.5 359V365M1354.5 346V347M1354.5 348V349M1354.5 357V359M1355.5 346V347M1355.5 348V351M1356.5 342V347M1357.5 349V351M1360.5 344V347M1361.5 332V341M1362.5 336V341M1364.5 366V368M1364.5 374V375M1365.5 373V374M1366.5 369V370M1368.5 369V370M1368.5 392V393M1369.5 392V394M1370.5 388V389M1370.5 392V394M1371.5 390V391M1372.5 390V392M1373.5 390V391M1374.5 389V392M1374.5 399V400M1375.5 399V401M1375.5 409V410M1377.5 406V407M1378.5 427V428M1379.5 425V426M1380.5 426V428M1381.5 429V430M1382.5 424V432M1383.5 432V433M1383.5 435V443M1385.5 435V436M1387.5 393V405M1388.5 402V404M1388.5 414V415M1390.5 413V414M1391.5 419V420M1394.5 416V418M1394.5 420V421M1395.5 420V421M1396.5 424V425M1397.5 425V426M1397.5 430V432M1398.5 428V429M1399.5 434V435M1400.5 432V435M1401.5 448V449M1402.5 455V458M1403.5 459V461M1404.5 454V455M1406.5 450V452M1408.5 458V463M1409.5 456V458M1410.5 455V456M1411.5 437V449M1411.5 451V457M1412.5 447V448M1413.5 466V468M1414.5 463V465M1414.5 466V467M1416.5 467V473M1418.5 460V462M1418.5 466V467M1419.5 462V464M1419.5 466V468M1420.5 463V465M1420.5 467V470M1421.5 464V466M1422.5 465V466M1423.5 486V487M1424.5 484V485M1425.5 484V485M1426.5 485V486M1427.5 489V490M1427.5 497V516M1428.5 494V496M1428.5 497V499M1430.5 499V500M1431.5 490V491M1431.5 499V501M1432.5 490V491M1433.5 490V491M1434.5 469V470M1434.5 489V490M1435.5 469V470M1435.5 473V474M1435.5 475V476M1436.5 475V478M1437.5 475V476M1438.5 463V466M1440.5 452V453M1441.5 454V455M1441.5 462V464M1442.5 459V460M1443.5 459V460M1444.5 464V465M1444.5 469V470M1445.5 467V468M1446.5 467V469M1447.5 452V455M1448.5 426V436M1448.5 442V443M1449.5 435V437M1451.5 443V445M1452.5 438V439M1453.5 431V439M1454.5 441V442M1456.5 434V435M1456.5 447V449M1457.5 434V435M1457.5 438V443M1458.5 436V437M1460.5 433V436M1461.5 400V413M1461.5 437V445M1462.5 437V438M1463.5 405V413M1464.5 415V417M1465.5 411V413M1465.5 415V416M1466.5 415V416M1467.5 409V410M1467.5 414V415M1469.5 405V406M1469.5 410V411M1470.5 405V406M1471.5 406V407M1471.5 413V434M1472.5 402V409M1472.5 413V415M1473.5 410V411M1474.5 409V411M1475.5 373V375M1475.5 379V380M1477.5 387V388M1478.5 387V388M1479.5 377V385M1480.5 382V385M1481.5 385V388M1482.5 391V392M1482.5 393V407M1483.5 389V392M1483.5 393V396M1484.5 353V365M1484.5 391V392M1485.5 364V365M1485.5 391V398M1486.5 364V365M1487.5 378V380M1487.5 383V384M1488.5 383V384M1489.5 384V385M1489.5 388V389M1491.5 384V385M1492.5 391V395M1493.5 388V390M1495.5 428V429M1496.5 456V458M1496.5 464V476M1497.5 464V465M1498.5 459V460M1498.5 461V462M1499.5 457V458M1500.5 456V458M1500.5 459V460M1501.5 452V458M1502.5 457V458M1503.5 463V465M1504.5 458V460M1505.5 463V464M1506.5 463V480M1508.5 449V450M1508.5 451V452M1508.5 459V460M1509.5 449V450M1510.5 442V443M1510.5 449V452M1511.5 426V434M1511.5 443V444M1512.5 443V444M1514.5 433V434M1514.5 439V443M1515.5 434V435M1515.5 438V442M1516.5 432V435M1517.5 446V447M1518.5 446V447M1518.5 457V458M1518.5 466V490M1519.5 457V458M1519.5 466V468M1520.5 461V463M1521.5 462V463M1523.5 465V467M1524.5 466V468M1526.5 473V474M1527.5 466V467M1528.5 467V468M1530.5 473V475M1531.5 509V526M1532.5 493V497M1532.5 510V511M1533.5 505V509M1533.5 510V511M1534.5 513V515M1535.5 508V511M1536.5 510V511M1536.5 516V517M1538.5 509V512M1538.5 515V516M1539.5 511V512M1540.5 510V513M1541.5 517V518M1541.5 521V522M1542.5 518V520M1542.5 521V539"/><path stroke="#00ff00" d="M0.5 191V194M2.5 184V189M3.5 178V182M3.5 184V189M4.5 172V182M8.5 187V188M12.5 191V192M13.5 186V192M14.5 186V187M14.5 188V191M15.5 183V187M16.5 184V187M20.5 187V188M26.5 178V191M27.5 190V191M31.5 200V204M32.5 200V204M34.5 202V204M35.5 200V204M36.5 201V203M41.5 214V215M42.5 214V215M44.5 216V217M45.5 212V217M46.5 212V213M46.5 214V216M47.5 209V214M48.5 211V214M60.5 223V231M61.5 225V231M62.5 223V225M63.5 223V224M67.5 202V231M68.5 203V231M70.5 205V206M71.5 204V206M72.5 205V206M76.5 201V206M77.5 201V206M80.5 204V205M81.5 203V206M82.5 199V206M83.5 197V204M85.5 195V197M88.5 196V200M89.5 196V197M89.5 198V200M90.5 189V198M91.5 187V198M92.5 186V190M93.5 186V189M95.5 187V188M96.5 185V188M97.5 185V187M98.5 178V187M99.5 176V185M101.5 178V180M102.5 176V180M103.5 175V178M104.5 175V176M107.5 174V181M108.5 174V175M108.5 176V181M109.5 174V176M110.5 172V173M110.5 174V176M111.5 170V173M112.5 170V172M113.5 170V171M115.5 171V178M116.5 171V178M117.5 168V170M117.5 171V172M118.5 168V170M119.5 168V172M120.5 167V172M121.5 165V166M121.5 167V168M122.5 165V166M123.5 163V164M124.5 159V162M124.5 163V164M125.5 160V162M126.5 160V161M127.5 158V161M128.5 159V161M130.5 155V157M131.5 154V157M132.5 154V155M133.5 151V154M137.5 159V160M138.5 159V160M144.5 177V178M146.5 172V177M147.5 164V177M148.5 164V174M149.5 132V166M150.5 124V166M151.5 128V133M153.5 130V133M154.5 131V133M158.5 126V130M159.5 119V130M160.5 102V127M161.5 102V103M166.5 143V145M167.5 136V145M168.5 133V135M168.5 136V144M169.5 133V134M173.5 167V170M174.5 167V168M174.5 169V170M177.5 173V175M178.5 173V174M179.5 169V174M180.5 164V168M180.5 169V174M181.5 164V168M182.5 160V165M183.5 154V165M184.5 152V161M185.5 154V155M193.5 165V178M194.5 162V178M195.5 162V163M195.5 164V166M196.5 155V163M197.5 155V163M201.5 158V161M202.5 158V161M206.5 175V176M211.5 188V189M215.5 190V194M217.5 196V199M218.5 198V199M222.5 203V206M223.5 204V206M227.5 207V211M228.5 208V211M229.5 203V206M230.5 187V202M230.5 203V206M231.5 187V202M232.5 181V186M233.5 173V186M234.5 170V182M235.5 169V174M236.5 168V172M238.5 167V173M239.5 168V173M244.5 178V179M245.5 172V179M246.5 170V179M247.5 170V174M248.5 169V171M249.5 169V170M251.5 163V172M252.5 162V172M257.5 191V195M258.5 189V195M259.5 189V191M260.5 185V188M261.5 187V188M262.5 184V187M263.5 184V185M265.5 181V195M266.5 161V195M267.5 158V181M268.5 158V162M273.5 162V165M274.5 162V165M275.5 155V163M276.5 149V163M277.5 146V156M278.5 143V149M281.5 148V151M282.5 148V149M282.5 150V151M285.5 147V153M286.5 147V153M290.5 133V149M291.5 134V149M292.5 118V132M293.5 119V132M294.5 115V116M296.5 116V117M297.5 113V115M297.5 116V117M298.5 111V115M299.5 112V113M301.5 98V114M302.5 100V114M305.5 121V122M306.5 108V122M307.5 105V121M308.5 105V109M310.5 100V105M311.5 99V105M312.5 92V98M312.5 99V100M313.5 86V90M313.5 92V98M314.5 84V85M314.5 86V90M315.5 84V85M316.5 74V81M317.5 67V73M317.5 74V81M318.5 68V73M333.5 74V80M334.5 74V80M335.5 70V72M344.5 106V112M345.5 107V112M346.5 103V108M347.5 104V108M351.5 109V111M352.5 109V110M357.5 131V134M358.5 131V132M358.5 133V134M360.5 129V133M361.5 132V133M362.5 126V132M363.5 126V127M368.5 127V132M369.5 127V132M371.5 123V128M372.5 123V128M373.5 124V125M374.5 113V123M375.5 105V111M375.5 113V123M376.5 98V111M377.5 98V105M378.5 94V97M379.5 95V97M381.5 95V97M382.5 95V96M386.5 107V108M387.5 102V108M388.5 102V104M388.5 105V108M389.5 97V104M390.5 97V104M406.5 126V133M407.5 122V133M408.5 123V127M409.5 121V122M411.5 126V127M415.5 138V140M417.5 139V142M418.5 141V142M419.5 135V142M420.5 125V142M421.5 117V124M421.5 125V135M422.5 115V124M423.5 111V114M423.5 115V117M424.5 113V114M428.5 113V115M429.5 114V115M432.5 123V124M441.5 137V138M449.5 148V149M450.5 148V149M452.5 149V150M455.5 148V151M456.5 149V151M459.5 169V170M460.5 168V170M463.5 168V173M464.5 168V173M465.5 168V169M469.5 185V186M471.5 187V189M472.5 187V188M485.5 212V213M486.5 212V213M490.5 214V216M491.5 215V216M494.5 215V216M495.5 210V214M495.5 215V216M496.5 211V214M500.5 217V218M501.5 217V218M502.5 217V218M503.5 217V218M504.5 220V222M505.5 218V222M506.5 218V219M511.5 222V226M512.5 223V226M520.5 242V243M521.5 242V243M524.5 240V243M525.5 240V241M525.5 242V243M529.5 242V245M533.5 242V250M534.5 242V250M535.5 241V243M538.5 241V244M539.5 241V242M539.5 243V244M541.5 237V242M542.5 236V242M544.5 236V238M546.5 239V240M547.5 238V241M548.5 238V239M548.5 240V241M549.5 240V241M550.5 236V241M551.5 237V240M554.5 243V246M557.5 247V248M560.5 249V253M561.5 249V253M565.5 258V259M567.5 258V259M568.5 258V259M580.5 276V278M581.5 276V277M584.5 279V281M585.5 269V281M586.5 261V279M587.5 256V269M588.5 261V262M596.5 283V284M597.5 283V284M598.5 283V284M599.5 280V284M600.5 278V279M600.5 280V283M604.5 283V284M605.5 283V284M607.5 280V284M608.5 277V284M609.5 273V280M610.5 274V278M611.5 272V273M612.5 272V273M617.5 275V278M620.5 277V279M621.5 277V278M626.5 308V311M627.5 309V311M629.5 309V310M630.5 309V310M631.5 303V307M634.5 289V306M635.5 289V306M636.5 289V290M637.5 289V290M643.5 298V299M644.5 296V299M645.5 294V298M646.5 289V298M647.5 289V290M647.5 291V294M649.5 274V291M650.5 273V291M651.5 269V276M652.5 267V273M653.5 268V269M654.5 265V267M655.5 265V266M656.5 256V265M657.5 252V265M658.5 248V257M659.5 245V247M659.5 248V252M660.5 243V247M661.5 244V245M666.5 242V245M667.5 243V245M677.5 280V284M678.5 281V284M689.5 298V304M690.5 298V300M690.5 302V304M698.5 322V324M699.5 321V324M700.5 321V322M702.5 321V324M705.5 320V324M706.5 318V324M707.5 313V320M708.5 313V314M708.5 315V318M709.5 311V314M711.5 318V319M712.5 316V319M713.5 313V319M714.5 313V316M717.5 317V318M718.5 313V315M718.5 317V318M721.5 319V320M722.5 315V318M722.5 319V320M723.5 316V318M728.5 323V324M730.5 320V332M731.5 320V332M734.5 304V319M735.5 307V319M738.5 302V309M739.5 308V309M744.5 319V320M746.5 318V321M747.5 320V321M748.5 318V320M749.5 318V319M753.5 316V327M754.5 314V327M761.5 343V345M762.5 343V345M764.5 335V343M765.5 331V334M765.5 335V343M772.5 364V367M773.5 362V367M774.5 362V363M775.5 363V367M777.5 370V371M778.5 354V369M778.5 370V371M779.5 354V369M782.5 360V363M783.5 356V363M784.5 356V361M789.5 369V370M790.5 355V371M791.5 348V371M792.5 346V355M793.5 341V345M793.5 346V350M796.5 347V349M797.5 348V349M798.5 345V348M799.5 344V348M800.5 335V345M801.5 335V336M801.5 337V344M802.5 315V335M803.5 309V335M804.5 311V316M805.5 309V311M806.5 309V311M808.5 308V312M809.5 311V312M814.5 287V322M815.5 274V322M816.5 274V275M816.5 276V287M819.5 280V284M820.5 279V284M822.5 275V280M823.5 271V273M823.5 275V280M824.5 272V273M827.5 271V279M828.5 264V279M829.5 257V272M830.5 252V264M831.5 252V257M832.5 250V253M833.5 247V252M834.5 247V250M835.5 247V248M840.5 270V273M841.5 270V273M843.5 271V274M844.5 267V274M845.5 269V272M846.5 263V269M847.5 263V269M848.5 263V265M855.5 283V286M856.5 285V286M857.5 284V286M858.5 284V285M860.5 273V290M861.5 263V290M862.5 271V273M863.5 271V272M865.5 277V280M869.5 279V283M870.5 279V280M870.5 281V283M873.5 271V282M874.5 271V272M877.5 289V291M880.5 292V293M881.5 292V293M889.5 332V333M891.5 334V336M892.5 335V336M895.5 326V336M896.5 309V336M897.5 299V327M898.5 302V309M899.5 303V304M900.5 303V304M905.5 303V307M906.5 299V302M906.5 303V307M907.5 299V301M910.5 317V319M911.5 308V319M912.5 307V318M913.5 307V308M919.5 301V311M920.5 310V311M923.5 317V320M924.5 317V318M924.5 319V320M925.5 311V316M926.5 310V316M935.5 338V340M936.5 339V340M938.5 337V339M941.5 341V343M942.5 341V342M943.5 345V347M944.5 345V347M946.5 347V354M947.5 345V354M948.5 345V347M952.5 352V353M953.5 352V353M954.5 353V354M955.5 353V354M956.5 344V353M957.5 342V353M959.5 346V348M964.5 355V356M965.5 355V356M970.5 364V365M971.5 364V366M972.5 365V366M973.5 361V364M974.5 361V362M975.5 365V367M979.5 368V369M980.5 368V369M981.5 362V369M982.5 354V369M983.5 353V362M986.5 352V356M987.5 351V356M988.5 351V353M994.5 369V375M995.5 370V375M996.5 365V367M997.5 366V367M998.5 364V366M999.5 364V366M1000.5 364V366M1001.5 359V363M1001.5 364V366M1002.5 359V363M1009.5 375V378M1010.5 373V378M1011.5 370V376M1012.5 370V373M1014.5 366V370M1015.5 366V370M1016.5 364V365M1017.5 363V365M1018.5 363V364M1021.5 370V371M1022.5 370V371M1028.5 375V394M1029.5 375V394M1031.5 368V375M1032.5 369V375M1037.5 370V375M1038.5 365V369M1038.5 370V375M1039.5 363V369M1040.5 363V365M1042.5 374V380M1043.5 374V375M1043.5 378V380M1045.5 379V380M1046.5 379V380M1048.5 378V379M1049.5 366V379M1050.5 356V365M1050.5 366V379M1051.5 351V365M1052.5 349V356M1056.5 354V359M1057.5 358V359M1058.5 355V358M1059.5 353V358M1060.5 352V355M1061.5 347V353M1062.5 349V353M1063.5 346V350M1064.5 346V347M1064.5 348V350M1078.5 378V382M1082.5 384V385M1083.5 384V385M1084.5 380V386M1085.5 372V386M1086.5 372V373M1086.5 374V381M1087.5 369V374M1088.5 369V370M1098.5 383V388M1099.5 378V388M1100.5 371V377M1100.5 378V384M1101.5 370V377M1102.5 371V372M1103.5 370V371M1104.5 369V371M1107.5 369V373M1110.5 365V375M1111.5 365V366M1111.5 367V375M1112.5 354V366M1113.5 354V355M1113.5 356V366M1116.5 356V359M1117.5 356V357M1117.5 358V359M1120.5 357V358M1121.5 357V358M1129.5 391V392M1132.5 395V397M1133.5 388V397M1134.5 379V387M1134.5 388V396M1135.5 372V387M1136.5 368V370M1136.5 372V380M1137.5 369V370M1139.5 366V367M1140.5 366V367M1141.5 365V366M1145.5 364V372M1146.5 358V362M1146.5 364V372M1147.5 361V362M1150.5 375V376M1153.5 374V377M1155.5 376V378M1156.5 372V378M1157.5 367V376M1158.5 367V373M1162.5 378V379M1164.5 378V381M1165.5 379V381M1166.5 379V381M1167.5 378V381M1168.5 378V379M1172.5 381V394M1173.5 376V380M1173.5 381V394M1174.5 376V380M1179.5 375V378M1180.5 377V378M1181.5 375V378M1182.5 376V378M1184.5 330V375M1185.5 317V375M1186.5 314V315M1186.5 317V330M1187.5 311V315M1188.5 312V314M1191.5 310V311M1192.5 306V309M1192.5 310V311M1193.5 303V309M1194.5 294V302M1194.5 303V306M1195.5 287V302M1196.5 284V294M1197.5 279V283M1197.5 284V287M1198.5 279V283M1199.5 279V280M1200.5 276V278M1200.5 279V280M1201.5 276V278M1202.5 274V275M1203.5 274V275M1204.5 272V276M1205.5 269V276M1211.5 296V301M1212.5 293V295M1212.5 296V301M1213.5 291V295M1214.5 292V294M1216.5 290V292M1217.5 288V289M1217.5 290V292M1224.5 298V300M1225.5 298V300M1226.5 298V299M1227.5 291V301M1228.5 290V301M1229.5 287V289M1229.5 290V291M1239.5 329V330M1240.5 329V331M1241.5 328V331M1242.5 311V330M1243.5 286V328M1244.5 287V311M1245.5 275V287M1246.5 274V287M1251.5 282V285M1252.5 276V285M1253.5 269V282M1254.5 270V278M1255.5 264V270M1256.5 265V270M1261.5 268V269M1262.5 268V269M1264.5 266V267M1269.5 279V287M1270.5 280V287M1277.5 267V282M1278.5 268V282M1281.5 271V276M1282.5 271V276M1283.5 267V268M1284.5 267V268M1285.5 266V269M1286.5 268V269M1288.5 272V274M1289.5 260V274M1290.5 251V273M1291.5 251V252M1291.5 255V261M1293.5 253V255M1294.5 254V255M1295.5 253V254M1297.5 252V257M1298.5 254V257M1300.5 254V255M1301.5 252V255M1310.5 289V292M1311.5 286V288M1311.5 289V292M1312.5 285V288M1313.5 285V286M1313.5 287V288M1317.5 313V314M1318.5 313V314M1319.5 313V314M1320.5 312V314M1321.5 309V313M1322.5 309V310M1327.5 314V316M1328.5 315V316M1332.5 326V327M1333.5 326V327M1346.5 354V355M1350.5 364V367M1351.5 358V367M1352.5 356V365M1353.5 349V359M1354.5 347V348M1354.5 349V357M1357.5 347V348M1358.5 343V348M1359.5 344V347M1360.5 341V344M1364.5 371V373M1365.5 371V373M1366.5 370V371M1368.5 391V392M1369.5 389V392M1370.5 389V391M1371.5 389V390M1384.5 430V435M1385.5 430V435M1386.5 408V430M1387.5 405V430M1401.5 458V459M1403.5 455V459M1404.5 452V454M1404.5 455V459M1406.5 457V459M1407.5 455V459M1408.5 456V458M1409.5 449V455M1410.5 449V450M1410.5 451V455M1413.5 465V466M1414.5 465V466M1415.5 462V467M1416.5 463V467M1418.5 464V466M1419.5 464V465M1423.5 485V486M1427.5 496V497M1430.5 491V499M1431.5 492V499M1433.5 470V489M1434.5 473V489M1436.5 464V475M1437.5 457V463M1437.5 464V475M1438.5 455V463M1439.5 457V458M1445.5 453V467M1446.5 442V452M1446.5 453V467M1447.5 436V452M1448.5 436V437M1448.5 438V442M1449.5 437V438M1450.5 437V438M1451.5 441V443M1455.5 436V447M1456.5 437V447M1459.5 436V439M1460.5 437V439M1461.5 413V437M1462.5 415V437M1463.5 414V415M1464.5 413V415M1465.5 413V414M1466.5 410V414M1467.5 411V414M1468.5 406V410M1469.5 407V410M1471.5 409V413M1472.5 409V413M1473.5 376V410M1474.5 379V409M1482.5 392V393M1484.5 365V391M1485.5 380V391M1489.5 386V387M1492.5 390V391M1493.5 390V391M1496.5 461V464M1497.5 460V464M1498.5 458V459M1498.5 460V461M1499.5 458V459M1500.5 458V459M1503.5 461V462M1505.5 460V463M1506.5 460V463M1507.5 452V459M1508.5 452V459M1509.5 443V449M1510.5 443V449M1511.5 434V443M1512.5 436V443M1514.5 436V438M1519.5 464V465M1521.5 468V470M1522.5 467V470M1523.5 467V468M1525.5 468V473M1526.5 467V473M1527.5 467V468M1533.5 512V513M1534.5 512V513M1537.5 513V515M1538.5 513V515"/><path stroke="#ff0000" d="M1.5 189V190M2.5 189V190M5.5 172V180M6.5 172V180M7.5 182V187M8.5 182V187M11.5 186V193M12.5 186V191M12.5 192V193M16.5 183V184M17.5 183V184M19.5 185V190M20.5 185V187M20.5 188V190M21.5 186V188M22.5 186V190M23.5 188V190M24.5 188V189M25.5 188V189M27.5 178V190M28.5 178V197M29.5 189V198M30.5 195V198M30.5 199V204M31.5 199V200M32.5 199V200M33.5 199V200M33.5 201V203M34.5 201V202M36.5 199V201M37.5 199V201M38.5 199V207M39.5 199V212M40.5 207V212M40.5 213V214M41.5 213V214M42.5 213V214M43.5 213V214M43.5 215V216M44.5 215V216M46.5 213V214M48.5 209V211M49.5 209V212M50.5 210V214M51.5 211V217M52.5 213V217M52.5 218V220M53.5 218V223M54.5 220V227M55.5 222V228M56.5 227V230M57.5 228V231M61.5 223V225M63.5 224V230M64.5 224V233M65.5 230V233M69.5 202V205M70.5 202V205M72.5 204V205M73.5 204V205M75.5 206V207M76.5 206V207M77.5 199V201M78.5 199V201M78.5 203V204M79.5 203V204M84.5 196V199M85.5 197V199M86.5 195V199M87.5 195V200M93.5 185V186M94.5 185V186M100.5 176V179M101.5 176V178M104.5 176V178M105.5 176V179M106.5 178V180M113.5 171V172M114.5 170V177M115.5 170V171M118.5 170V173M119.5 172V173M122.5 164V165M123.5 164V165M125.5 158V160M126.5 158V160M132.5 153V154M134.5 151V155M135.5 151V157M136.5 155V161M137.5 156V159M137.5 160V161M139.5 161V172M140.5 161V173M141.5 171V174M142.5 171V174M142.5 175V176M143.5 175V176M143.5 177V178M151.5 123V128M152.5 123V128M152.5 129V133M153.5 129V130M154.5 129V131M155.5 129V130M157.5 129V130M161.5 103V121M162.5 103V121M163.5 121V142M164.5 121V142M164.5 143V145M165.5 143V146M166.5 145V146M169.5 134V142M170.5 134V142M171.5 142V162M172.5 142V162M172.5 163V169M173.5 163V167M174.5 168V169M175.5 168V169M176.5 168V175M177.5 169V173M181.5 163V164M185.5 152V154M186.5 152V156M187.5 154V166M188.5 155V166M189.5 165V170M190.5 165V172M191.5 170V176M192.5 172V178M197.5 154V155M198.5 154V155M199.5 158V159M200.5 158V160M204.5 161V170M205.5 161V176M206.5 170V175M207.5 175V185M208.5 175V185M209.5 185V191M210.5 185V190M213.5 188V192M214.5 188V194M216.5 190V198M217.5 190V196M218.5 196V198M219.5 196V198M219.5 199V201M220.5 199V201M221.5 200V205M222.5 201V203M224.5 203V204M225.5 203V204M225.5 206V209M226.5 206V209M237.5 167V172M239.5 167V168M240.5 167V168M241.5 166V167M242.5 166V167M242.5 168V173M243.5 168V181M244.5 173V178M244.5 179V181M249.5 170V172M250.5 170V172M253.5 161V164M254.5 161V174M255.5 164V189M256.5 173V196M257.5 189V191M257.5 195V196M259.5 188V189M260.5 188V189M261.5 184V187M263.5 185V189M264.5 185V196M265.5 195V196M269.5 156V161M270.5 156V164M271.5 161V164M272.5 162V163M274.5 161V162M279.5 141V148M280.5 141V152M281.5 147V148M281.5 151V152M282.5 149V150M283.5 148V152M284.5 148V152M286.5 146V147M287.5 146V147M299.5 110V112M300.5 110V112M302.5 97V100M303.5 97V113M304.5 99V121M305.5 112V121M319.5 67V70M320.5 67V69M321.5 69V72M322.5 69V72M325.5 67V74M326.5 67V76M327.5 74V76M327.5 77V79M328.5 77V79M331.5 80V81M332.5 80V81M336.5 70V76M337.5 70V76M337.5 77V88M338.5 77V88M338.5 89V97M339.5 89V97M339.5 98V101M340.5 98V106M341.5 100V105M342.5 105V107M343.5 105V111M345.5 106V107M347.5 102V104M348.5 102V104M349.5 102V109M350.5 102V109M352.5 110V112M353.5 110V118M354.5 112V126M355.5 118V131M356.5 125V133M357.5 130V131M361.5 129V132M363.5 127V135M364.5 127V134M365.5 133V134M366.5 133V134M369.5 126V127M370.5 126V127M377.5 97V98M378.5 97V98M379.5 94V95M380.5 94V96M382.5 96V98M383.5 96V100M384.5 98V101M385.5 100V101M385.5 102V107M386.5 102V107M391.5 96V103M392.5 96V111M393.5 102V111M394.5 110V113M395.5 111V114M397.5 114V118M398.5 114V121M399.5 117V122M400.5 119V121M402.5 121V125M403.5 121V125M403.5 126V129M404.5 126V129M405.5 128V133M408.5 122V123M409.5 122V123M410.5 121V128M411.5 121V126M411.5 127V128M412.5 126V135M413.5 126V138M414.5 135V141M415.5 140V141M416.5 137V142M417.5 137V139M418.5 139V141M424.5 111V113M425.5 111V114M426.5 113V114M430.5 112V116M431.5 112V122M432.5 116V122M434.5 122V129M435.5 122V130M436.5 128V129M438.5 128V133M439.5 128V134M440.5 133V137M441.5 133V137M442.5 137V141M443.5 137V143M444.5 140V146M445.5 142V144M445.5 145V146M446.5 144V147M447.5 144V147M448.5 146V149M449.5 146V148M451.5 146V148M452.5 146V148M453.5 148V150M454.5 148V150M457.5 148V160M458.5 148V168M459.5 159V168M461.5 167V170M462.5 167V170M467.5 167V179M468.5 167V187M469.5 179V185M469.5 186V187M470.5 184V189M471.5 184V187M472.5 188V191M473.5 188V191M473.5 192V194M474.5 192V195M475.5 194V195M475.5 196V198M476.5 196V197M477.5 198V199M478.5 198V199M480.5 198V209M481.5 198V210M482.5 208V212M483.5 209V213M484.5 210V215M485.5 213V215M486.5 213V215M487.5 213V216M488.5 215V216M491.5 214V215M492.5 214V215M497.5 211V213M498.5 211V217M499.5 213V217M503.5 218V222M504.5 218V220M506.5 219V220M507.5 219V220M508.5 219V220M510.5 220V224M511.5 220V222M512.5 222V223M513.5 222V223M515.5 219V229M516.5 219V229M516.5 230V238M517.5 230V239M518.5 238V239M518.5 240V241M519.5 240V242M520.5 240V242M522.5 240V243M523.5 240V243M528.5 242V243M530.5 242V247M531.5 242V247M531.5 248V252M532.5 248V251M536.5 241V243M537.5 241V244M543.5 236V240M544.5 238V240M545.5 236V241M546.5 236V239M546.5 240V241M551.5 236V237M552.5 236V237M552.5 238V241M553.5 238V246M554.5 241V243M555.5 243V250M556.5 243V249M558.5 245V250M559.5 245V250M559.5 251V252M561.5 247V249M562.5 247V249M562.5 250V251M563.5 250V256M564.5 250V257M565.5 256V257M566.5 258V260M567.5 259V260M569.5 258V259M570.5 258V259M571.5 258V261M572.5 258V263M573.5 261V267M574.5 263V270M575.5 266V273M576.5 270V277M577.5 272V276M578.5 275V279M579.5 275V278M581.5 277V280M582.5 277V282M583.5 280V281M588.5 256V261M589.5 256V261M589.5 262V266M590.5 262V266M590.5 267V275M591.5 267V275M592.5 275V278M593.5 275V278M593.5 279V283M594.5 279V281M594.5 282V283M595.5 280V284M596.5 280V283M597.5 282V283M598.5 282V283M602.5 280V284M603.5 280V285M604.5 284V285M605.5 282V283M606.5 282V284M612.5 273V277M613.5 273V277M614.5 276V278M615.5 277V278M615.5 279V280M616.5 279V280M618.5 275V278M619.5 275V278M621.5 278V292M622.5 278V304M623.5 292V304M623.5 305V308M624.5 305V309M625.5 308V312M626.5 311V312M627.5 307V309M628.5 307V309M632.5 303V307M633.5 303V308M634.5 307V308M637.5 290V293M638.5 290V295M639.5 293V295M640.5 294V295M640.5 296V298M641.5 296V298M642.5 297V298M661.5 243V244M662.5 243V244M663.5 241V243M664.5 241V245M665.5 242V245M667.5 242V243M668.5 242V244M669.5 243V253M670.5 243V258M671.5 252V259M672.5 257V258M673.5 257V270M674.5 257V270M675.5 270V278M676.5 270V278M676.5 279V283M677.5 279V280M679.5 280V281M680.5 280V282M681.5 280V282M681.5 283V287M682.5 283V288M683.5 287V289M684.5 288V295M685.5 289V297M686.5 295V297M687.5 298V303M688.5 298V303M690.5 300V302M691.5 300V302M694.5 302V318M695.5 302V320M696.5 318V321M697.5 320V321M697.5 322V324M701.5 319V324M702.5 319V321M703.5 321V324M704.5 321V324M710.5 310V318M711.5 310V318M714.5 311V313M715.5 311V317M716.5 312V317M719.5 313V321M720.5 313V321M721.5 320V321M725.5 315V319M726.5 315V318M727.5 317V323M728.5 317V323M729.5 321V331M735.5 304V307M736.5 304V307M737.5 307V308M739.5 302V308M740.5 302V308M740.5 309V320M741.5 309V321M742.5 319V320M745.5 319V321M747.5 318V320M751.5 318V324M752.5 318V324M752.5 325V327M755.5 314V328M756.5 314V334M757.5 328V337M758.5 334V338M759.5 337V343M760.5 337V344M763.5 343V344M764.5 343V344M766.5 331V335M767.5 331V346M768.5 334V346M770.5 344V354M771.5 344V354M771.5 355V365M772.5 355V364M774.5 363V366M776.5 362V370M777.5 362V370M779.5 353V354M780.5 353V354M781.5 357V364M782.5 357V360M782.5 363V364M784.5 354V356M785.5 354V356M786.5 358V365M787.5 358V369M788.5 365V369M794.5 340V346M795.5 340V350M796.5 346V347M796.5 349V350M804.5 309V311M809.5 307V311M810.5 307V312M811.5 311V313M812.5 312V313M812.5 314V315M813.5 314V322M816.5 275V276M817.5 274V278M818.5 274V278M818.5 280V283M824.5 269V272M825.5 269V276M826.5 271V276M826.5 277V278M835.5 245V246M836.5 245V253M837.5 246V260M838.5 252V267M839.5 258V267M839.5 268V273M840.5 268V270M842.5 270V273M843.5 270V271M845.5 267V269M849.5 259V270M850.5 259V277M851.5 270V284M852.5 276V283M853.5 283V284M854.5 283V287M855.5 286V287M856.5 282V285M857.5 282V284M859.5 286V290M862.5 262V271M863.5 262V271M864.5 271V280M865.5 271V277M866.5 277V281M867.5 277V282M868.5 280V281M874.5 272V285M875.5 272V285M876.5 285V292M877.5 285V289M877.5 291V292M878.5 288V292M879.5 288V292M881.5 293V294M882.5 293V296M883.5 293V300M884.5 296V300M884.5 302V312M885.5 302V321M886.5 311V327M887.5 321V332M888.5 327V333M889.5 331V332M890.5 332V334M891.5 332V334M893.5 333V334M894.5 333V334M898.5 298V302M899.5 298V302M902.5 304V305M903.5 304V306M904.5 304V306M908.5 300V305M909.5 300V318M910.5 305V317M915.5 308V310M916.5 309V310M920.5 301V310M921.5 301V313M922.5 308V320M923.5 313V317M928.5 310V312M929.5 310V313M930.5 312V313M932.5 313V319M933.5 313V335M934.5 318V339M935.5 334V338M939.5 336V339M940.5 336V343M941.5 339V341M942.5 342V346M943.5 342V345M944.5 347V352M945.5 347V352M948.5 344V345M949.5 344V345M950.5 346V349M951.5 346V349M951.5 350V352M952.5 350V352M958.5 341V347M959.5 341V346M960.5 346V349M961.5 346V349M961.5 350V352M962.5 350V352M963.5 353V354M964.5 353V354M967.5 355V357M968.5 355V357M969.5 355V363M970.5 355V363M972.5 364V365M973.5 364V365M974.5 362V367M975.5 362V365M976.5 365V367M977.5 365V366M980.5 367V368M984.5 351V355M985.5 351V355M989.5 351V354M990.5 351V355M991.5 354V360M992.5 354V360M993.5 361V374M994.5 361V369M997.5 365V366M1003.5 360V363M1004.5 360V363M1004.5 364V370M1005.5 364V370M1005.5 371V377M1006.5 371V380M1007.5 377V378M1007.5 379V380M1008.5 376V378M1012.5 369V370M1015.5 364V366M1016.5 365V366M1018.5 362V363M1019.5 362V363M1020.5 363V371M1021.5 363V370M1025.5 368V379M1026.5 368V392M1027.5 379V392M1032.5 368V369M1033.5 368V369M1034.5 370V372M1035.5 370V372M1036.5 370V375M1041.5 364V378M1042.5 364V374M1043.5 375V378M1044.5 375V378M1047.5 378V379M1053.5 347V354M1054.5 347V354M1054.5 355V356M1055.5 355V358M1057.5 354V358M1058.5 354V355M1062.5 347V349M1066.5 344V351M1067.5 344V351M1068.5 351V367M1069.5 351V371M1070.5 367V371M1071.5 370V371M1072.5 370V371M1073.5 370V372M1074.5 370V372M1077.5 372V381M1078.5 372V378M1079.5 378V384M1080.5 378V384M1083.5 385V386M1088.5 370V375M1089.5 370V377M1090.5 375V379M1091.5 377V384M1092.5 379V383M1093.5 384V386M1094.5 384V386M1097.5 387V388M1102.5 369V371M1103.5 369V370M1106.5 367V372M1107.5 367V369M1108.5 369V373M1109.5 369V375M1113.5 355V356M1114.5 355V356M1115.5 357V360M1116.5 359V360M1117.5 357V358M1118.5 357V358M1119.5 357V358M1122.5 357V360M1123.5 357V360M1123.5 361V375M1124.5 361V380M1125.5 375V380M1125.5 381V385M1126.5 381V389M1127.5 385V388M1128.5 387V392M1129.5 387V391M1130.5 390V396M1131.5 390V396M1140.5 365V366M1142.5 364V367M1143.5 364V367M1144.5 365V367M1144.5 368V373M1145.5 372V373M1147.5 356V361M1148.5 356V375M1149.5 360V375M1151.5 375V377M1152.5 375V377M1154.5 373V378M1155.5 373V376M1159.5 367V374M1160.5 367V378M1161.5 374V379M1162.5 377V378M1163.5 377V380M1164.5 377V378M1165.5 377V379M1166.5 377V379M1168.5 379V383M1169.5 379V386M1170.5 382V386M1170.5 388V394M1171.5 388V394M1176.5 375V378M1177.5 375V377M1178.5 377V378M1180.5 375V377M1188.5 311V312M1189.5 311V312M1190.5 312V313M1191.5 312V313M1206.5 269V280M1207.5 269V280M1207.5 281V288M1208.5 281V288M1209.5 288V303M1210.5 288V303M1211.5 301V302M1218.5 288V289M1219.5 288V289M1219.5 290V294M1220.5 290V294M1220.5 295V299M1221.5 295V299M1222.5 300V302M1223.5 300V301M1230.5 286V299M1231.5 286V300M1232.5 299V300M1232.5 301V312M1233.5 301V312M1233.5 313V322M1234.5 313V322M1235.5 321V322M1235.5 324V325M1236.5 324V327M1237.5 326V327M1238.5 324V330M1239.5 324V329M1247.5 274V286M1248.5 274V285M1250.5 283V286M1251.5 285V286M1257.5 265V267M1258.5 265V269M1259.5 266V269M1260.5 268V269M1262.5 267V268M1263.5 267V268M1264.5 267V268M1267.5 266V267M1268.5 265V287M1269.5 265V279M1271.5 280V282M1272.5 280V281M1273.5 280V282M1274.5 280V282M1275.5 283V284M1279.5 267V273M1280.5 267V273M1286.5 264V268M1287.5 264V268M1287.5 269V272M1288.5 269V272M1291.5 252V255M1292.5 252V254M1296.5 253V256M1298.5 251V254M1299.5 251V254M1302.5 251V267M1303.5 251V267M1303.5 268V271M1304.5 268V277M1305.5 271V277M1305.5 278V281M1306.5 278V285M1307.5 281V288M1308.5 285V291M1309.5 287V292M1313.5 286V287M1315.5 285V306M1316.5 285V313M1317.5 305V313M1322.5 310V313M1323.5 310V314M1326.5 315V317M1327.5 316V317M1329.5 315V319M1330.5 315V319M1330.5 320V327M1331.5 320V328M1332.5 327V328M1333.5 328V329M1335.5 330V332M1336.5 330V334M1337.5 331V334M1339.5 333V350M1340.5 333V350M1341.5 350V355M1342.5 350V355M1343.5 352V353M1343.5 354V355M1345.5 352V354M1346.5 352V354M1347.5 354V355M1348.5 354V355M1349.5 353V367M1350.5 353V364M1355.5 347V348M1356.5 347V348M1361.5 341V351M1362.5 341V368M1363.5 351V374M1364.5 368V371M1364.5 373V374M1367.5 370V392M1368.5 370V391M1372.5 389V390M1373.5 389V390M1373.5 392V399M1374.5 392V399M1374.5 401V409M1375.5 401V407M1375.5 408V409M1376.5 407V423M1377.5 407V426M1378.5 423V427M1379.5 426V427M1379.5 428V430M1380.5 428V432M1381.5 430V432M1383.5 434V435M1388.5 404V414M1389.5 404V416M1390.5 414V419M1391.5 416V418M1392.5 417V418M1393.5 417V420M1394.5 418V420M1394.5 421V422M1395.5 421V424M1396.5 422V424M1396.5 426V429M1397.5 426V429M1398.5 430V434M1399.5 430V434M1399.5 435V449M1400.5 435V458M1401.5 449V458M1405.5 452V457M1406.5 452V457M1408.5 454V456M1409.5 455V456M1412.5 448V466M1413.5 448V465M1417.5 462V465M1418.5 462V464M1421.5 466V477M1422.5 466V486M1423.5 477V485M1424.5 485V487M1425.5 485V491M1426.5 486V496M1427.5 490V496M1428.5 496V497M1429.5 496V499M1432.5 489V490M1433.5 489V490M1434.5 470V473M1435.5 470V473M1435.5 474V475M1439.5 453V457M1440.5 453V460M1441.5 455V462M1442.5 460V465M1443.5 460V468M1444.5 465V468M1450.5 438V442M1451.5 438V441M1452.5 439V443M1453.5 439V443M1454.5 442V446M1456.5 435V437M1457.5 435V437M1458.5 437V442M1459.5 439V442M1462.5 413V415M1463.5 413V414M1465.5 414V415M1466.5 414V415M1470.5 407V412M1471.5 407V409M1474.5 375V379M1475.5 375V379M1475.5 380V381M1476.5 380V387M1477.5 381V385M1477.5 386V387M1478.5 385V387M1479.5 385V388M1480.5 385V391M1481.5 388V391M1485.5 365V380M1486.5 365V383M1487.5 380V383M1488.5 382V383M1488.5 385V388M1489.5 385V386M1489.5 387V388M1490.5 385V387M1491.5 385V387M1491.5 388V391M1492.5 388V390M1493.5 391V430M1494.5 391V459M1495.5 429V464M1496.5 458V461M1501.5 458V462M1502.5 458V462M1504.5 460V463M1512.5 433V436M1513.5 433V439M1514.5 434V436M1514.5 438V439M1515.5 435V438M1516.5 435V446M1517.5 438V446M1517.5 447V457M1518.5 447V457M1518.5 458V466M1519.5 458V464M1519.5 465V466M1520.5 463V469M1521.5 463V468M1523.5 468V470M1524.5 468V474M1525.5 473V474M1527.5 468V472M1528.5 468V475M1529.5 472V488M1530.5 475V497M1531.5 488V509M1532.5 497V510M1533.5 509V510M1535.5 511V516M1536.5 511V515M1539.5 513V518M1540.5 513V521M1541.5 518V521M1542.5 520V521"/><path stroke="#2a2aff" d="M14.5 187V188M15.5 187V188M17.5 185V186M18.5 185V186M23.5 190V191M24.5 190V191M37.5 201V202M58.5 230V231M66.5 233V234M67.5 233V234M74.5 204V205M75.5 204V205M79.5 205V206M80.5 205V206M94.5 187V188M108.5 175V176M128.5 158V159M129.5 158V159M156.5 130V131M157.5 130V131M170.5 142V143M178.5 174V175M179.5 174V175M188.5 166V167M195.5 163V164M196.5 163V164M198.5 157V158M199.5 157V158M203.5 159V160M204.5 159V160M212.5 188V189M223.5 203V204M231.5 185V186M240.5 166V167M250.5 172V173M251.5 172V173M268.5 157V158M271.5 164V165M272.5 164V165M284.5 152V153M289.5 148V149M300.5 112V113M315.5 82V83M316.5 82V83M318.5 67V68M320.5 69V70M322.5 72V73M323.5 72V73M329.5 80V81M330.5 80V81M341.5 105V106M348.5 104V105M358.5 132V133M359.5 132V134M360.5 133V134M364.5 134V135M365.5 134V135M366.5 135V136M367.5 133V134M367.5 135V136M368.5 133V134M388.5 104V105M389.5 104V105M390.5 96V97M396.5 113V114M397.5 113V114M401.5 120V121M402.5 120V121M426.5 114V115M436.5 129V130M450.5 147V148M456.5 148V149M476.5 197V198M477.5 197V198M488.5 216V217M489.5 216V218M490.5 217V218M492.5 216V217M493.5 215V217M499.5 218V219M500.5 218V219M501.5 219V220M502.5 219V220M508.5 221V222M509.5 221V222M513.5 220V221M526.5 241V242M527.5 241V242M532.5 251V252M533.5 251V252M540.5 242V243M541.5 242V243M548.5 239V240M549.5 239V240M568.5 257V258M569.5 257V258M570.5 259V260M583.5 281V282M584.5 281V282M591.5 275V276M594.5 281V282M616.5 277V278M628.5 309V310M647.5 290V291M653.5 267V268M654.5 267V268M655.5 266V267M656.5 266V267M665.5 245V246M666.5 245V246M672.5 258V259M674.5 270V271M686.5 297V298M687.5 297V298M691.5 303V304M704.5 324V325M705.5 324V325M716.5 318V319M717.5 318V319M731.5 319V320M732.5 319V320M733.5 319V320M734.5 319V320M736.5 307V308M749.5 319V320M750.5 319V320M769.5 345V346M780.5 356V357M781.5 356V357M785.5 357V358M786.5 357V358M797.5 347V348M801.5 336V337M802.5 336V337M806.5 311V312M807.5 311V312M870.5 280V281M871.5 280V282M872.5 281V282M872.5 283V284M873.5 283V284M879.5 292V293M892.5 334V335M893.5 334V335M913.5 308V309M914.5 308V309M916.5 308V309M917.5 308V309M918.5 310V311M924.5 318V319M925.5 318V319M927.5 310V311M936.5 338V339M937.5 338V339M949.5 345V346M950.5 345V346M953.5 353V354M955.5 352V353M966.5 355V356M978.5 368V369M992.5 361V362M995.5 369V370M996.5 369V370M999.5 366V367M1000.5 366V367M1007.5 378V379M1008.5 378V379M1013.5 369V370M1024.5 367V368M1025.5 367V368M1029.5 374V375M1030.5 374V375M1033.5 369V370M1034.5 369V370M1035.5 372V373M1040.5 362V363M1041.5 362V363M1046.5 376V377M1047.5 376V377M1067.5 351V352M1074.5 372V373M1075.5 372V373M1086.5 373V374M1094.5 387V388M1095.5 387V388M1096.5 387V388M1127.5 388V389M1137.5 368V369M1152.5 377V378M1153.5 377V378M1171.5 395V396M1172.5 395V396M1175.5 376V377M1177.5 377V378M1183.5 375V376M1184.5 375V376M1189.5 312V313M1203.5 275V276M1208.5 288V289M1214.5 291V292M1215.5 291V292M1215.5 293V294M1216.5 293V294M1221.5 301V302M1237.5 325V326M1244.5 286V287M1248.5 285V286M1249.5 284V286M1256.5 264V265M1257.5 264V265M1266.5 267V268M1267.5 267V268M1270.5 279V280M1271.5 279V280M1272.5 281V282M1284.5 269V270M1285.5 269V270M1294.5 253V254M1324.5 313V314M1328.5 314V315M1329.5 314V315M1359.5 343V344M1365.5 370V371M1375.5 407V408M1381.5 432V433M1382.5 432V433M1397.5 429V430M1398.5 429V430M1402.5 458V459M1410.5 450V451M1411.5 450V451M1419.5 465V466M1420.5 465V467M1431.5 491V492M1432.5 491V492M1444.5 468V469M1445.5 468V469M1453.5 443V444M1467.5 410V411M1468.5 410V411M1481.5 392V393M1506.5 459V460M1507.5 459V460M1508.5 450V451M1509.5 450V451M1510.5 441V442"/><path stroke="#9a9a9a" d="M0.5 190V191M1.5 190V191M6.5 181V182M7.5 181V182M9.5 187V188M10.5 187V188M25.5 191V192M26.5 191V192M59.5 230V231M65.5 233V234M68.5 202V203M73.5 205V206M74.5 205V206M89.5 197V198M129.5 157V158M130.5 157V158M138.5 160V161M139.5 160V161M145.5 177V178M146.5 177V178M155.5 130V131M162.5 121V122M208.5 185V186M210.5 190V191M211.5 190V191M226.5 211V212M227.5 211V212M228.5 207V208M229.5 207V208M287.5 147V148M288.5 147V149M291.5 133V134M292.5 133V134M293.5 118V119M294.5 118V119M295.5 115V116M296.5 115V116M309.5 105V106M310.5 105V106M323.5 71V72M324.5 70V72M328.5 79V80M329.5 79V80M330.5 79V80M331.5 79V80M332.5 81V82M333.5 81V82M334.5 73V74M335.5 73V74M350.5 111V112M351.5 111V112M370.5 128V129M371.5 128V129M373.5 123V124M374.5 123V124M400.5 121V122M401.5 121V122M404.5 130V131M427.5 114V115M429.5 113V114M433.5 123V124M437.5 129V130M445.5 144V145M462.5 171V172M465.5 167V168M466.5 167V168M478.5 199V200M479.5 198V200M496.5 210V211M497.5 210V211M509.5 220V221M514.5 220V221M521.5 240V241M525.5 241V242M527.5 242V243M539.5 242V243M556.5 249V250M557.5 249V250M577.5 276V277M579.5 278V279M580.5 278V279M601.5 278V279M602.5 278V279M610.5 273V274M611.5 273V274M619.5 278V279M630.5 308V309M631.5 308V309M642.5 298V299M648.5 290V291M662.5 242V243M678.5 280V281M688.5 304V305M689.5 304V305M692.5 303V304M693.5 302V304M708.5 314V315M709.5 314V315M723.5 315V316M724.5 315V316M726.5 318V319M742.5 320V321M743.5 320V321M744.5 320V321M750.5 318V319M768.5 346V347M769.5 346V347M788.5 370V371M789.5 370V371M807.5 312V313M808.5 312V313M821.5 279V280M848.5 261V262M852.5 283V284M858.5 285V286M859.5 285V286M868.5 281V282M875.5 285V286M894.5 336V337M895.5 336V337M900.5 304V305M901.5 304V305M904.5 306V307M907.5 301V302M914.5 307V308M915.5 307V308M917.5 309V310M918.5 309V310M930.5 313V314M931.5 313V315M937.5 337V338M945.5 353V354M962.5 353V354M965.5 354V355M966.5 354V355M968.5 357V358M977.5 366V367M978.5 366V367M985.5 355V356M1002.5 358V359M1003.5 358V359M1019.5 363V364M1022.5 369V370M1023.5 368V370M1024.5 368V369M1027.5 393V394M1044.5 379V380M1064.5 347V348M1065.5 346V348M1071.5 369V370M1072.5 369V370M1075.5 371V372M1076.5 371V372M1077.5 371V372M1080.5 385V386M1081.5 385V386M1082.5 385V386M1092.5 383V384M1093.5 383V384M1095.5 386V387M1096.5 386V387M1105.5 369V370M1111.5 366V367M1112.5 366V367M1114.5 356V357M1115.5 356V357M1131.5 397V398M1132.5 397V398M1138.5 368V369M1139.5 368V369M1149.5 376V377M1150.5 376V377M1182.5 375V376M1201.5 275V276M1202.5 275V276M1223.5 301V302M1224.5 301V302M1254.5 269V270M1260.5 269V270M1261.5 269V270M1265.5 266V267M1266.5 266V267M1274.5 282V283M1275.5 282V283M1276.5 283V284M1277.5 283V284M1278.5 267V268M1280.5 274V275M1282.5 269V270M1283.5 269V270M1292.5 254V255M1299.5 254V255M1314.5 286V287M1318.5 314V315M1319.5 314V315M1325.5 313V314M1326.5 313V314M1334.5 328V329M1335.5 328V329M1337.5 334V335M1338.5 334V335M1340.5 350V351M1344.5 352V353M1356.5 348V349M1357.5 348V349M1370.5 391V392M1371.5 391V392M1382.5 433V434M1383.5 433V434M1385.5 429V430M1391.5 418V419M1392.5 418V419M1411.5 449V450M1416.5 462V463M1448.5 437V438M1457.5 437V438M1460.5 436V437M1469.5 406V407M1470.5 406V407M1477.5 385V386M1483.5 392V393M1484.5 392V393M1502.5 462V463M1503.5 462V463M1534.5 511V512M1536.5 515V516M1537.5 515V516M1538.5 512V513M1539.5 512V513"/></g>
<rect x="0" y="244" width="1657" height="1" fill="#c8c8c8"/>
<rect x="0" y="295" width="1657" height="1" fill="#c8c8c8"/>
<rect x="0" y="337" width="1657" height="1" fill="#c8c8c8"/>
<rect x="0" y="404" width="1657" height="1" fill="#c8c8c8"/>
<rect x="0" y="438" width="1657" height="1" fill="#c8c8c8"/>
<path d="M311.3 52.8L1040 404M589.3 301.5L783.8 379.5M810.3 227.3L1086.7 391.4M1167.7 410.2L1322.7 246.2M1191.2 270.5L1306.2 238.5M1422.2 527.6L1509.8 365.2M1468 372.8L1489 349.4M1481.2 347.1L1560.7 544.4" stroke="#d6d6d6" stroke-width="1.15" fill="none"/>
<rect x="1015" y="408" width="178" height="1.4" fill="#d6d6d6"/>
<path d="M1413 519.1L1549 540.6" stroke="#ece028" stroke-width="1.15" fill="none"/>
<path d="M0 636.9L2.4 638.9L5 614.9L7.6 638.9L11 652.9L13 651.9L15.6 632.9L18 649.9L20 646.9L22.4 649.9L25 650.9L27.4 630.9L28.9 662.9L31.9 670.8L33.9 673.8L36.3 661.9L38.9 678.8L40.5 668.9L42.3 678.8L46.9 677.8L48.9 662.9L50.3 661.9L52.3 678.8L54.9 688.8L57.5 694.8L58.9 678.8L60.3 684.8L61.9 672.8L63.5 669.9L65.5 648.9L67.5 626.9L68.9 628.9L71.5 626.9L74.3 641.9L78.3 621.9L80.5 642.9L83.9 633.9L86.2 624.9L88.4 640.9L89.8 624.9L92.2 628.9L94.8 620.9L96.8 620.9L98.2 632.9L100.2 616.9L101.8 626.9L103.8 624.9L105.4 618.9L107.8 625.9L110.2 617.9L112.4 611L113.8 630.9L115.4 626.9L117.4 633.9L119.8 620.9L121.8 634.9L124.2 621.9L125.4 628.9L127.4 617.9L128.8 620.9L131.8 620.5L133.8 612.6L135.8 632.9L138.8 659.9L140.8 670.8L143.3 676.8L146.1 660.9L148.1 630.9L150.3 600L151.7 614.9L153.7 620.9L157.3 615.9L159.1 619.9L161.3 598.6L162.7 649.9L164.1 649.9L164.7 658.9L165.7 649.9L168.7 649.9L169.7 646.9L172.1 672.8L174.1 669.9L176.7 676.8L177.7 671.8L179.3 670.8L180.7 663.9L182.7 658.9L184.3 643.9L185.7 649.9L186.7 646.9L187.7 656.9L189.7 658.9L192.1 671.8L194.7 658.9L196.7 639.9L197.7 644.9L199.6 644.9L201.6 650.9L203.2 647.9L205.2 664.9L207.6 683.8L209.2 677.8L211.6 675.8L214.6 679.8L216.6 682.8L217.6 668.9L218.6 682.8L220.6 672.8L222.6 678.8L224.6 679.8L228.6 679.8L229.6 681.8L230.6 651.9L232.2 639.9L233.6 658.9L236 627.9L238.6 628.9L240.2 625.9L242 644.9L243.2 651.9L244.6 636.9L246.6 639.9L247.6 644.9L249.2 640.9L251.2 651.9L253.6 629.9L255.1 648.9L256.5 664.9L258.5 657.9L260.5 655.9L262.5 653.9L264.5 664.9L267.5 630.9L269.5 634.9L271.5 638.9L273.5 637.9L275.5 641.9L278.1 621.9L279.5 636.9L281.5 634.9L282.5 638.9L284.5 633.9L288.5 631.9L289.5 620.9L290.5 628.9L293.1 612L295.1 616.9L296.5 615.9L299.5 617.9L302.1 603L304.5 647.9L306.5 632.9L308.5 627.9L309.9 633.9L312.4 622.9L314.4 636.9L318 612L319.4 625.9L321.4 626.9L323.4 627.9L324.4 632.9L326.4 631.9L328.4 641.9L330.4 638.9L332.4 643.9L334.4 642.9L336.4 628.9L337.8 658.9L340 666.9L342 675.8L344 671.8L346.4 671.8L348.4 660.9L350 661.9L351.6 674.8L353.6 667.9L355 686.8L357.6 686.8L360 684.8L361 675.8L362.4 684.8L364.4 662.9L366 669.9L368.3 667.9L370.9 665.9L372.3 660.9L373.9 643.9L376.3 620.9L378.3 619.9L379.9 616.5L381.5 616.9L383.5 634.9L386.3 644.9L388.3 634.9L390.9 624.9L392.9 652.9L394.9 666.9L396.9 659.9L398.9 668.9L400.9 675.8L404.3 676.8L406.3 688.8L408.5 650.9L409.9 653.9L411.3 671.8L412.3 668.9L414.3 678.8L416.9 676.8L418.5 673.8L419.9 678.8L421.5 642.9L423.5 625.9L424.9 632.9L426.2 632.9L427.4 638.9L428.8 636.9L430.4 638.9L432.2 660.9L433.4 653.9L435.4 662.9L436.8 660.9L438.8 661.9L440.4 665.9L443.4 684.8L445.4 673.8L447.4 683.8L449.4 684.8L450.8 674.8L452.4 667.9L453.8 672.8L455.4 674.8L456.8 688.8L457.8 670.8L459.2 687.8L460.8 683.8L462.8 680.8L465.4 681.8L466.8 676.8L468.8 694.8L470.4 700.8L473.4 690.8L475.4 697.8L477.4 694.8L478.4 699.8L479.8 696.8L481.7 703.8L484.1 705.8L487.3 707.8L488.7 704.8L490.3 700.8L491.3 704.8L492.7 682.8L493.7 675.8L496.3 662.9L497.7 670.8L499.7 674.8L501.7 678.8L503.3 675.8L504.7 683.8L505.7 661.9L507.3 674.8L509.7 666.9L512.1 667.9L515.3 669.9L517.3 695.8L518.7 694.8L519.7 685.8L521.1 694.8L522.1 692.8L523.7 694.4L525.7 670.8L526.7 669.9L528.1 672.8L529.7 681.8L530.7 674.8L531.3 681.8L532.7 665.9L534.7 660.9L536.7 676.8L537.7 656.9L539.2 657.9L540.6 645.9L542.6 650.9L544 648.9L545.6 655.9L547.2 654.9L548.2 658.9L549.2 644.9L550.6 654.9L551.6 653.9L553.2 668.9L554.6 664.9L556.6 670.8L558.6 674.8L560 673.8L561.2 667.9L563.2 684.8L564.6 661.9L565.6 673.8L567.6 668.9L569.2 671.8L570.6 668.9L571.6 674.8L572.6 673.8L574 683.8L575.6 687.8L577.2 684.8L579.2 685.8L581.6 684.8L583 683.8L584.6 690.8L586 672.8L587.2 650.9L588.6 629.9L590 645.9L590.6 645.9L591.6 664.9L593.6 667.9L595.5 669.9L596.5 666.9L597.5 676.8L599.5 653.9L601.5 661.9L603.9 665.9L606.5 665.9L608.5 654.9L609.9 640.9L611.5 639.3L612.5 641.9L613.9 654.9L615.5 653.9L617.5 652.9L618.9 658.9L621.1 649.9L622.5 688.8L625.1 695.8L626.5 684.8L627.9 683.8L629.5 681.8L630.5 683.8L632.5 677.8L633.5 664.9L634.5 643.9L636.5 640.9L637.9 650.9L639.5 654.9L641.5 656.9L642.9 655.9L644.5 650.9L645.5 658.9L646.5 635.9L647.5 634.9L648.9 619.9L650.5 618.9L652.4 611L654.4 612L655.8 605L657 598.6L658.4 610L660.4 602L661.8 603L663 607L663.8 604L665.8 613L667.4 613L668.4 608L669.4 630.9L670.8 654.9L671.8 653.9L673 646.9L674.4 674.8L677.4 676.8L678.4 679.8L680 670.8L681.6 682.8L683.6 667.9L685 677.8L687 681.8L688.4 679.8L691 684.8L692.4 683.8L694 688.8L695 696.8L696.6 700.8L698 693.8L700.6 690.4L703 692.8L705.4 697.2L706.6 664.9L708.3 658.9L709.9 675.8L710.9 653.9L713.3 649.9L714.9 656.9L716.3 666.9L717.5 662.9L719.3 672.8L720.3 645.9L721.5 655.9L722.5 650.9L723.9 655.3L726.9 655.3L727.9 660.9L729.5 674.8L730.9 652.9L732.3 638.5L734.3 639.3L735.9 641.9L737.5 638.5L739.9 642.9L741.9 666.9L742.9 667.9L744.3 656.9L746.3 656.5L748.5 653.9L749.9 658.9L751.9 672.8L752.9 673.8L754.5 636.5L756.9 674.8L758.3 672.8L759.9 676.8L761.5 675.8L762.9 666.9L764.9 659.9L766.4 652.9L767.8 670.8L769.2 671.8L771.2 688.8L772.8 684.8L774.8 677.8L776.4 688.4L777.8 658.9L779.4 661.9L781.4 663.9L782.4 656.9L785.4 657.9L786.4 670.8L788.2 670.8L789.4 643.9L790.8 638.9L792.2 637.9L794.2 645.9L796.2 642.9L798.2 644.9L799.8 624.9L800.8 616.9L802.2 605L805.4 604.6L806.4 616.9L808.2 613.9L809.8 615.9L811.8 622.9L813.4 639.9L814.4 603.4L815.8 621.9L817.2 614.9L819.2 620.9L820.8 620.9L821.7 616.9L823.3 613.9L824.7 622.9L826.3 627.9L827.7 623.9L829.3 614.9L831.1 607L832.7 609L834.1 604.6L836.1 606L837.7 631.9L838.7 645.9L839.7 635.9L841.3 646.9L844.7 652.9L846.7 644.9L848.7 636.9L850.1 648.9L851.3 664.9L853.7 668.9L855.7 668.9L857.1 660.9L858.3 668.9L859.7 672.8L860.7 650.9L861.7 632.9L863.7 653.9L865.3 652.9L867.3 658.9L868.7 653.9L870.7 655.9L872.7 647.9L874.1 640.9L875.7 666.9L877.1 669.9L878.3 664.9L880.6 668.9L882.6 667.9L883.6 673.8L885.2 688.8L886.6 698.8L888 694.8L889 699.8L890 693.8L891.6 691.8L892.6 694.8L894.6 688.8L895.6 688.8L896.6 664.9L897.6 640.9L899.6 647.9L901.2 639.9L903 642.9L904.6 643.9L907.2 641.9L908.2 633.9L909.6 659.9L910.6 662.9L911.6 655.9L913.6 649.9L916 650.9L918.6 650.9L919.6 657.9L920.6 641.9L922 650.9L923.2 667.9L924.6 653.9L927.2 648.9L929.2 658.9L931.2 656.9L932.6 673.8L933.6 688.8L934.6 690.8L936.5 678.8L938.5 675.8L940.5 680.8L941.9 678.8L943.1 683.8L943.9 676.8L945.1 685.8L946.5 677.8L947.5 675.8L949.1 667.9L950.5 678.8L951.9 675.8L954.5 674.8L955.9 680.8L957.5 644.9L958.5 661.9L959.5 658.9L961.5 662.9L963.5 663.9L965.5 666.9L966.9 676.8L968.5 665.9L970.5 672.8L971.5 682.8L973.5 669.9L975.5 672.8L977.5 673.8L979.1 678.8L980.5 682.8L982.1 660.9L983.1 644.9L984.5 652.9L986.5 635.9L988.5 644.9L989.5 641.9L991.5 653.9L993.4 679.8L995.8 654.9L997.4 653.9L998.4 659.9L1000.4 653.9L1002.4 651.9L1004.4 658.9L1006.4 678.8L1008.4 674.8L1009.4 653.9L1011.4 656.9L1013.4 651.9L1015.4 646.9L1017.4 639.9L1018.8 648.9L1020 644.9L1021.6 660.9L1023.6 652.9L1024.4 655.9L1025.4 651.9L1027.6 692.8L1029.6 644.9L1031 643.9L1033.6 650.9L1036 652.9L1037.4 651.9L1038.4 637.9L1039.6 637.3L1041.6 659.9L1043.6 660.9L1045 658.9L1047.4 668.9L1048.9 655.9L1049.9 654.9L1051.3 626.9L1052.3 618.9L1054.3 632.9L1056.5 633.9L1058.5 636.9L1061.3 626.9L1062.5 636.9L1063.3 632.9L1064.9 651.9L1066.3 636.9L1067.3 633.9L1068.9 662.9L1071.3 664.5L1073.5 661.9L1075.5 671.8L1076.5 662.9L1077.9 670.8L1079.9 671.8L1083.5 676.4L1084.9 672.8L1086.5 639.9L1088.5 664.9L1089.5 652.9L1091.5 659.9L1092.9 658.9L1093.9 663.9L1095.5 661.9L1097.5 668.9L1098.5 655.9L1099.5 661.9L1101.5 639.9L1103.5 636.9L1104.9 638.9L1106.2 636.5L1107.2 637.9L1108.4 650.9L1109.4 648.9L1110.4 632.9L1111.4 653.9L1113.2 627.9L1115.2 637.9L1117.2 635.9L1119.2 637.3L1120.8 640.9L1123.2 639.9L1124.4 668.9L1126.2 673.8L1128.8 676.8L1130.4 683.8L1132.2 676.8L1133.4 675.8L1134.8 656.9L1136.2 638.9L1137.8 637.9L1139.4 631.9L1140.8 636.9L1141.8 632.9L1143.4 637.3L1145.4 651.9L1147.4 629.9L1149.4 654.9L1150.8 656.9L1152.4 657.9L1154.2 655.9L1155.2 652.9L1156.8 655.9L1158.4 642.9L1160.8 662.9L1161.7 655.9L1162.7 662.9L1164.7 659.9L1166.7 658.5L1168.7 665.9L1170.7 674.8L1172.7 648.9L1174.3 647.9L1175.3 644.9L1176.3 651.9L1177.7 651.9L1179.3 643.9L1181.3 652.9L1182.7 637.9L1183.7 646.9L1184.7 611L1185.7 599.4L1187.7 600L1189.7 598L1192.1 604L1193.7 602L1195.3 593L1196.7 609L1198.1 600L1199.7 603L1202.1 600.6L1204.1 600L1205.7 597.4L1206.7 620.9L1208.7 638.9L1209.7 653.9L1210.7 643.9L1212.7 643.9L1214.7 640.9L1216.7 634.9L1218.1 639.9L1219.2 636.9L1220.6 646.9L1221.6 660.9L1223.6 645.9L1225.2 648.9L1226.6 644.9L1228.2 640.9L1229.6 652.9L1231.2 659.9L1232.6 677.8L1234.6 682.8L1236.6 687.8L1238.2 688.4L1239.6 679.8L1241.2 680.8L1242.6 618.9L1244 616.9L1245.6 616.9L1246.4 613.9L1247.6 634.9L1249 635.9L1250.6 629.9L1251.6 631.9L1253.2 619.9L1255 615.9L1256.6 629.9L1258 628.9L1259.6 633.9L1262.2 628.9L1264 640.9L1265.6 663.9L1266.6 641.9L1268 652.9L1269.6 649.9L1271.2 653.9L1272.6 654.9L1274.2 656.9L1275.5 642.9L1276.5 643.9L1278.5 624.9L1280.1 649.9L1281.5 641.9L1282.5 644.9L1283.5 640.9L1284.5 643.9L1285.5 639.9L1287.5 645.9L1289.1 650.9L1290.5 631.9L1291.5 642.9L1293.1 635.9L1294.5 634.9L1296.5 637.3L1298.5 636.9L1299.5 632.9L1300.5 641.9L1301.5 624.9L1302.5 656.9L1304.5 663.9L1306.5 667.9L1307.9 675.8L1310.5 676.4L1311.9 666.9L1313.1 666.9L1314.5 674.8L1316.1 685.8L1318.5 690.8L1320 688.8L1322 686.8L1323.6 680.8L1325 681.8L1326.4 687.8L1328.4 678.4L1330 686.8L1331.4 688.8L1333 695.8L1335 688.8L1336.6 689.8L1338 692.8L1339.4 702.8L1341.4 707.2L1343 702.8L1345 696.8L1346.4 699.8L1348.3 692.8L1349.5 704.8L1350.9 684.8L1352.3 670.8L1353.5 660.9L1355.5 654.9L1356.9 653.9L1358.5 655.9L1360.5 652.5L1361.5 656.9L1362.5 680.8L1363.5 690.8L1364.9 683.8L1366.3 686.8L1367.5 695.8L1368.9 697.8L1370.3 693.8L1371.9 698.8L1373.3 693.8L1374.9 704.8L1376.9 709.8L1378.5 711.8L1379.9 713.8L1381.5 712.8L1382.9 714.8L1384.3 715.8L1385.9 668.9L1387.3 644.9L1388.9 660.9L1389.9 664.9L1391.5 665.9L1392.9 667.9L1393.9 663.9L1395.5 670.8L1396.9 672.8L1398.9 682.8L1400.5 695.8L1401.9 688.8L1403.5 689.8L1404.9 687.8L1406.2 686.8L1407.4 692.8L1409.2 670.4L1410.4 677.8L1411.4 672.8L1412.4 683.8L1413.8 676.8L1415.2 677.8L1416.8 672.8L1418.2 670.8L1419.8 678.8L1421.4 682.8L1422.8 696.8L1424.4 693.8L1425.4 686.8L1427.4 694.8L1429.4 693.8L1430.8 687.8L1432.2 664.9L1433.4 646.9L1434.4 653.9L1435.4 648.9L1436.4 653.9L1437.4 636.9L1438.4 627.9L1439.4 638.9L1441.2 640.9L1442.8 642.9L1444.2 640.9L1445.4 650.9L1446.4 632.9L1447.4 621.9L1448.8 629.9L1449.8 629.9L1450.8 636.9L1452.2 632.9L1453.4 636.9L1455.4 635.9L1457.2 644.9L1458.4 628.9L1459.4 644.9L1460.4 642.9L1461.4 619.9L1463.3 617.9L1464.7 620.9L1466.1 618.9L1467.3 624.9L1468.7 627.9L1469.7 619.9L1471.3 636.9L1472.7 616.9L1473.7 609.4L1474.7 628.9L1475.7 623.9L1477.3 627.9L1478.7 632.9L1480.3 634.9L1481.7 637.3L1483.3 632.9L1484.3 615.9L1485.7 614.9L1486.7 642.9L1488.7 643.9L1490.7 645.9L1491.7 658.9L1492.7 672.8L1494.1 684.8L1495.3 693.8L1496.7 680.8L1498.7 678.8L1500.7 680.8L1502.7 682.8L1504.1 683.8L1505.3 668.9L1506.3 666.9L1507.3 670.8L1508.3 660.9L1509.3 664.9L1509.7 646.9L1511.1 652.9L1512.3 651.9L1513.7 652.9L1515.7 664.9L1517.3 675.8L1518.6 662.9L1520.2 664.9L1521.6 673.8L1522.6 667.9L1524.2 670.8L1525.6 674.8L1527 678.8L1528.2 669.9L1529.6 682.8L1531 694.8L1532.2 694.4L1533.6 697.8L1534.6 688.8L1536.6 688.4L1538.2 692.8L1539.6 678.4L1540.6 684.8L1541.6 685.8" stroke="#a4a4a4" stroke-width="1" fill="none" stroke-linejoin="round"/>
<path d="M685 706.2L786.8 689.2M876 701.4L1144.8 683.2M1379.9 717.8L1440.8 690.2M1474.7 609.4L1487.7 614.5" stroke="#d6d6d6" stroke-width="1.15" fill="none"/>
<path d="M1380.3 716.4L1544 697.4" stroke="#ece028" stroke-width="1.15" fill="none"/>
<rect x="0" y="566" width="101" height="18" fill="#1e1e1e"/>
<text class="hb" x="6.5" y="580" textLength="19" lengthAdjust="spacingAndGlyphs">RSI</text>
<rect x="42" y="574" width="17" height="1.6" fill="#b4b4b4"/>
<text class="hd" x="63.4" y="580" textLength="20.6" lengthAdjust="spacingAndGlyphs">(14)</text>
<g transform="translate(90.4 572.3)"><path d="M.6 1.600a3.300 3.300 0 0 1 5.200 1.400l2.600 2.900-.300 2.200-2.700-.400-2.400-2.300a3.300 3.300 0 0 1-3-2.400l2.200 1 1.200-1.300z" fill="#86b4e6"/><path d="M4.500 5.500l3 2.800" stroke="#c4dcf4" stroke-width="1"/></g>
<path d="M0.5 829V833M1.5 830V833M2.5 830V833M3.5 828V833M4.5 826V833M5.5 824V833M6.5 823V833M7.5 825V833M8.5 829V833M9.5 832V833M10.5 832V834M11.5 832V836M12.5 832V838M13.5 832V839M14.5 832V839M15.5 832V837M16.5 832V836M17.5 832V836M18.5 832V836M19.5 832V836M20.5 832V836M21.5 832V836M22.5 832V836M23.5 832V836M24.5 832V836M25.5 832V836M26.5 832V835M27.5 832V834M28.5 832V833M29.5 832V834M30.5 832V835M31.5 832V837M32.5 832V841M33.5 832V844M34.5 832V842M35.5 832V841M36.5 832V840M37.5 832V839M38.5 832V839M39.5 832V838M40.5 832V838M41.5 832V839M42.5 832V839M43.5 832V839M44.5 832V838M45.5 832V838M46.5 832V836M47.5 832V835M48.5 832V834M49.5 832V833M50.5 830V833M51.5 831V833M52.5 832V833M53.5 832V834M54.5 832V835M55.5 832V836M56.5 832V837M57.5 832V837M58.5 832V837M59.5 832V836M60.5 832V835M61.5 832V834M62.5 832V833M63.5 831V833M64.5 830V833M65.5 826V833M66.5 823V833M67.5 819V833M68.5 816V833M69.5 816V833M70.5 816V833M71.5 819V833M72.5 820V833M73.5 822V833M74.5 822V833M75.5 823V833M76.5 823V833M77.5 824V833M78.5 824V833M79.5 825V833M80.5 826V833M81.5 827V833M82.5 828V833M83.5 828V833M84.5 828V833M85.5 828V833M86.5 828V833M87.5 828V833M88.5 828V833M89.5 828V833M90.5 828V833M91.5 828V833M92.5 828V833M93.5 828V833M94.5 828V833M95.5 828V833M96.5 828V833M97.5 828V833M98.5 830V833M99.5 831V833M100.5 831V833M101.5 831V833M102.5 830V833M103.5 830V833M104.5 830V833M105.5 830V833M106.5 831V833M107.5 832V833M108.5 832V833M109.5 832V833M110.5 832V833M111.5 832V833M112.5 832V833M113.5 832V833M114.5 832V833M115.5 832V833M116.5 832V834M117.5 832V834M118.5 832V834M119.5 832V834M120.5 832V834M121.5 832V834M122.5 832V834M123.5 832V834M124.5 832V833M125.5 832V833M126.5 832V833M127.5 831V833M128.5 831V833M129.5 831V833M130.5 831V833M131.5 831V833M132.5 831V833M133.5 831V833M134.5 831V833M135.5 831V833M136.5 832V833M137.5 832V835M138.5 832V837M139.5 832V840M140.5 832V842M141.5 832V842M142.5 832V843M143.5 832V843M144.5 832V842M145.5 832V842M146.5 832V840M147.5 832V838M148.5 832V834M149.5 824V833M150.5 818V833M151.5 814V833M152.5 813V833M153.5 813V833M154.5 815V833M155.5 817V833M156.5 819V833M157.5 821V833M158.5 823V833M159.5 823V833M160.5 820V833M161.5 818V833M162.5 823V833M163.5 831V833M164.5 832V841M165.5 832V848M166.5 832V848M167.5 832V848M168.5 832V847M169.5 832V845M170.5 832V845M171.5 832V848M172.5 832V850M173.5 832V852M174.5 832V855M175.5 832V857M176.5 832V858M177.5 832V856M178.5 832V853M179.5 832V850M180.5 832V846M181.5 832V841M182.5 832V838M183.5 832V833M184.5 829V833M185.5 827V833M186.5 825V833M187.5 824V833M188.5 825V833M189.5 827V833M190.5 829V833M191.5 832V833M192.5 832V834M193.5 832V833M194.5 832V833M195.5 832V833M196.5 831V833M197.5 829V833M198.5 825V833M199.5 823V833M200.5 823V833M201.5 823V833M202.5 824V833M203.5 825V833M204.5 828V833M205.5 832V834M206.5 832V838M207.5 832V841M208.5 832V844M209.5 832V845M210.5 832V845M211.5 832V843M212.5 832V842M213.5 832V841M214.5 832V840M215.5 832V839M216.5 832V838M217.5 832V837M218.5 832V837M219.5 832V836M220.5 832V836M221.5 832V835M222.5 832V835M223.5 832V834M224.5 832V834M225.5 832V834M226.5 832V834M227.5 832V833M228.5 832V833M229.5 832V833M230.5 831V833M231.5 826V833M232.5 823V833M233.5 822V833M234.5 820V833M235.5 817V833M236.5 814V833M237.5 810V833M238.5 808V833M239.5 808V833M240.5 811V833M241.5 815V833M242.5 819V833M243.5 822V833M244.5 823V833M245.5 825V833M246.5 826V833M247.5 827V833M248.5 829V833M249.5 830V833M250.5 831V833M251.5 831V833M252.5 831V833M253.5 831V833M254.5 832V833M255.5 832V836M256.5 832V839M257.5 832V841M258.5 832V842M259.5 832V843M260.5 832V842M261.5 832V842M262.5 832V842M263.5 832V841M264.5 832V840M265.5 832V838M266.5 832V834M267.5 829V833M268.5 822V833M269.5 819V833M270.5 819V833M271.5 819V833M272.5 820V833M273.5 821V833M274.5 822V833M275.5 824V833M276.5 825V833M277.5 825V833M278.5 824V833M279.5 824V833M280.5 826V833M281.5 827V833M282.5 828V833M283.5 829V833M284.5 829V833M285.5 830V833M286.5 830V833M287.5 831V833M288.5 830V833M289.5 830V833M290.5 829V833M291.5 827V833M292.5 825V833M293.5 823V833M294.5 822V833M295.5 822V833M296.5 822V833M297.5 823V833M298.5 824V833M299.5 825V833M300.5 827V833M301.5 828V833M302.5 825V833M303.5 823V833M304.5 829V833M305.5 832V834M306.5 832V835M307.5 832V836M308.5 832V836M309.5 832V836M310.5 832V837M311.5 832V836M312.5 832V836M313.5 832V835M314.5 832V835M315.5 832V833M316.5 830V833M317.5 826V833M318.5 821V833M319.5 821V833M320.5 823V833M321.5 826V833M322.5 829V833M323.5 831V833M324.5 832V834M325.5 832V836M326.5 832V838M327.5 832V840M328.5 832V842M329.5 832V843M330.5 832V844M331.5 832V844M332.5 832V844M333.5 832V844M334.5 832V843M335.5 832V843M336.5 832V842M337.5 832V842M338.5 832V843M339.5 832V847M340.5 832V849M341.5 832V853M342.5 832V855M343.5 832V855M344.5 832V854M345.5 832V851M346.5 832V848M347.5 832V846M348.5 832V842M349.5 832V838M350.5 832V838M351.5 832V838M352.5 832V838M353.5 832V837M354.5 832V836M355.5 832V841M356.5 832V844M357.5 832V843M358.5 832V842M359.5 832V841M360.5 832V840M361.5 832V839M362.5 832V838M363.5 832V836M364.5 832V834M365.5 831V833M366.5 829V833M367.5 828V833M368.5 827V833M369.5 826V833M370.5 826V833M371.5 825V833M372.5 825V833M373.5 823V833M374.5 821V833M375.5 817V833M376.5 813V833M377.5 810V833M378.5 807V833M379.5 808V833M380.5 809V833M381.5 812V833M382.5 814V833M383.5 818V833M384.5 822V833M385.5 825V833M386.5 828V833M387.5 831V833M388.5 832V833M389.5 831V833M390.5 830V833M391.5 831V833M392.5 832V833M393.5 832V835M394.5 832V839M395.5 832V842M396.5 832V844M397.5 832V844M398.5 832V844M399.5 832V844M400.5 832V844M401.5 832V845M402.5 832V845M403.5 832V843M404.5 832V842M405.5 832V842M406.5 832V841M407.5 832V840M408.5 832V836M409.5 832V833M410.5 832V834M411.5 832V834M412.5 832V835M413.5 832V836M414.5 832V837M415.5 832V837M416.5 832V837M417.5 832V837M418.5 832V836M419.5 832V835M420.5 832V834M421.5 830V833M422.5 826V833M423.5 822V833M424.5 818V833M425.5 817V833M426.5 815V833M427.5 816V833M428.5 817V833M429.5 818V833M430.5 821V833M431.5 824V833M432.5 828V833M433.5 831V833M434.5 832V833M435.5 832V834M436.5 832V835M437.5 832V836M438.5 832V837M439.5 832V838M440.5 832V839M441.5 832V839M442.5 832V840M443.5 832V841M444.5 832V841M445.5 832V842M446.5 832V842M447.5 832V842M448.5 832V841M449.5 832V841M450.5 832V839M451.5 832V837M452.5 832V836M453.5 832V834M454.5 832V833M455.5 832V833M456.5 832V834M457.5 832V836M458.5 832V837M459.5 832V838M460.5 832V838M461.5 832V838M462.5 832V837M463.5 832V836M464.5 832V835M465.5 832V834M466.5 832V833M467.5 832V833M468.5 832V835M469.5 832V837M470.5 832V838M471.5 832V839M472.5 832V839M473.5 832V839M474.5 832V839M475.5 832V838M476.5 832V837M477.5 832V837M478.5 832V836M479.5 832V836M480.5 832V836M481.5 832V836M482.5 832V836M483.5 832V835M484.5 832V835M485.5 832V834M486.5 832V833M487.5 832V833M488.5 832V833M489.5 830V833M490.5 829V833M491.5 829V833M492.5 827V833M493.5 826V833M494.5 824V833M495.5 823V833M496.5 822V833M497.5 822V833M498.5 823V833M499.5 823V833M500.5 824V833M501.5 825V833M502.5 826V833M503.5 826V833M504.5 826V833M505.5 827V833M506.5 828V833M507.5 829V833M508.5 829V833M509.5 829V833M510.5 828V833M511.5 828V833M512.5 828V833M513.5 828V833M514.5 828V833M515.5 828V833M516.5 829V833M517.5 832V833M518.5 832V835M519.5 832V836M520.5 832V838M521.5 832V838M522.5 832V838M523.5 832V838M524.5 832V837M525.5 832V835M526.5 832V833M527.5 831V833M528.5 831V833M529.5 830V833M530.5 830V833M531.5 829V833M532.5 828V833M533.5 828V833M534.5 827V833M535.5 827V833M536.5 827V833M537.5 827V833M538.5 827V833M539.5 826V833M540.5 825V833M541.5 825V833M542.5 825V833M543.5 825V833M544.5 826V833M545.5 827V833M546.5 827V833M547.5 828V833M548.5 828V833M549.5 829V833M550.5 829V833M551.5 830V833M552.5 830V833M553.5 832V833M554.5 832V833M555.5 832V833M556.5 832V833M557.5 832V833M558.5 832V834M559.5 832V835M560.5 832V836M561.5 832V836M562.5 832V837M563.5 832V837M564.5 832V837M565.5 832V837M566.5 832V836M567.5 832V836M568.5 832V836M569.5 832V836M570.5 832V836M571.5 832V836M572.5 832V836M573.5 832V836M574.5 832V838M575.5 832V839M576.5 832V839M577.5 832V839M578.5 832V839M579.5 832V838M580.5 832V837M581.5 832V837M582.5 832V836M583.5 832V834M584.5 832V833M585.5 832V833M586.5 829V833M587.5 827V833M588.5 823V833M589.5 818V833M590.5 818V833M591.5 820V833M592.5 824V833M593.5 828V833M594.5 831V833M595.5 832V833M596.5 832V833M597.5 832V834M598.5 832V834M599.5 832V833M600.5 832V833M601.5 832V833M602.5 832V833M603.5 832V833M604.5 832V833M605.5 831V833M606.5 831V833M607.5 831V833M608.5 830V833M609.5 828V833M610.5 826V833M611.5 825V833M612.5 824V833M613.5 824V833M614.5 826V833M615.5 827V833M616.5 827V833M617.5 828V833M618.5 828V833M619.5 829V833M620.5 830V833M621.5 832V833M622.5 832V838M623.5 832V843M624.5 832V847M625.5 832V847M626.5 832V847M627.5 832V846M628.5 832V844M629.5 832V842M630.5 832V840M631.5 832V839M632.5 832V835M633.5 832V833M634.5 828V833M635.5 823V833M636.5 822V833M637.5 821V833M638.5 821V833M639.5 823V833M640.5 824V833M641.5 825V833M642.5 825V833M643.5 826V833M644.5 826V833M645.5 827V833M646.5 827V833M647.5 827V833M648.5 825V833M649.5 824V833M650.5 820V833M651.5 817V833M652.5 815V833M653.5 815V833M654.5 815V833M655.5 816V833M656.5 816V833M657.5 816V833M658.5 816V833M659.5 816V833M660.5 817V833M661.5 819V833M662.5 820V833M663.5 822V833M664.5 824V833M665.5 826V833M666.5 828V833M667.5 830V833M668.5 832V833M669.5 832V835M670.5 832V838M671.5 832V841M672.5 832V844M673.5 832V847M674.5 832V849M675.5 832V851M676.5 832V852M677.5 832V854M678.5 832V856M679.5 832V856M680.5 832V856M681.5 832V855M682.5 832V853M683.5 832V851M684.5 832V849M685.5 832V847M686.5 832V845M687.5 832V844M688.5 832V843M689.5 832V842M690.5 832V840M691.5 832V839M692.5 832V839M693.5 832V838M694.5 832V840M695.5 832V841M696.5 832V841M697.5 832V841M698.5 832V840M699.5 832V838M700.5 832V836M701.5 832V834M702.5 832V833M703.5 832V833M704.5 831V833M705.5 829V833M706.5 827V833M707.5 825V833M708.5 823V833M709.5 823V833M710.5 824V833M711.5 822V833M712.5 820V833M713.5 820V833M714.5 821V833M715.5 822V833M716.5 824V833M717.5 825V833M718.5 826V833M719.5 827V833M720.5 826V833M721.5 825V833M722.5 826V833M723.5 827V833M724.5 827V833M725.5 828V833M726.5 829V833M727.5 829V833M728.5 830V833M729.5 831V833M730.5 832V834M731.5 832V833M732.5 830V833M733.5 827V833M734.5 825V833M735.5 824V833M736.5 824V833M737.5 823V833M738.5 823V833M739.5 825V833M740.5 827V833M741.5 830V833M742.5 832V833M743.5 832V833M744.5 832V834M745.5 832V835M746.5 832V836M747.5 832V836M748.5 832V835M749.5 832V835M750.5 832V835M751.5 832V835M752.5 832V836M753.5 832V837M754.5 832V837M755.5 832V834M756.5 832V835M757.5 832V839M758.5 832V842M759.5 832V843M760.5 832V844M761.5 832V843M762.5 832V842M763.5 832V840M764.5 832V837M765.5 832V835M766.5 831V833M767.5 831V833M768.5 832V833M769.5 832V834M770.5 832V838M771.5 832V841M772.5 832V843M773.5 832V844M774.5 832V842M775.5 832V841M776.5 832V840M777.5 832V839M778.5 832V834M779.5 831V833M780.5 829V833M781.5 827V833M782.5 825V833M783.5 824V833M784.5 823V833M785.5 823V833M786.5 824V833M787.5 826V833M788.5 827V833M789.5 823V833M790.5 821V833M791.5 821V833M792.5 821V833M793.5 820V833M794.5 819V833M795.5 820V833M796.5 822V833M797.5 822V833M798.5 821V833M799.5 820V833M800.5 817V833M801.5 813V833M802.5 811V833M803.5 811V833M804.5 811V833M805.5 812V833M806.5 814V833M807.5 817V833M808.5 820V833M809.5 822V833M810.5 824V833M811.5 827V833M812.5 830V833M813.5 832V834M814.5 831V833M815.5 825V833M816.5 822V833M817.5 820V833M818.5 820V833M819.5 822V833M820.5 823V833M821.5 825V833M822.5 826V833M823.5 827V833M824.5 829V833M825.5 832V833M826.5 832V834M827.5 832V835M828.5 832V836M829.5 832V836M830.5 832V835M831.5 832V833M832.5 829V833M833.5 828V833M834.5 827V833M835.5 828V833M836.5 828V833M837.5 831V833M838.5 832V835M839.5 832V840M840.5 832V843M841.5 832V846M842.5 832V848M843.5 832V849M844.5 832V850M845.5 832V849M846.5 832V848M847.5 832V847M848.5 832V846M849.5 832V845M850.5 832V845M851.5 832V846M852.5 832V847M853.5 832V846M854.5 832V846M855.5 832V846M856.5 832V845M857.5 832V845M858.5 832V844M859.5 832V842M860.5 832V842M861.5 832V838M862.5 830V833M863.5 829V833M864.5 829V833M865.5 830V833M866.5 831V833M867.5 831V833M868.5 831V833M869.5 832V833M870.5 832V833M871.5 831V833M872.5 831V833M873.5 831V833M874.5 830V833M875.5 832V833M876.5 832V834M877.5 832V836M878.5 832V837M879.5 832V838M880.5 832V838M881.5 832V838M882.5 832V837M883.5 832V837M884.5 832V838M885.5 832V841M886.5 832V844M887.5 832V848M888.5 832V850M889.5 832V852M890.5 832V852M891.5 832V850M892.5 832V849M893.5 832V846M894.5 832V844M895.5 832V840M896.5 832V837M897.5 830V833M898.5 824V833M899.5 818V833M900.5 814V833M901.5 811V833M902.5 809V833M903.5 809V833M904.5 810V833M905.5 812V833M906.5 814V833M907.5 817V833M908.5 820V833M909.5 823V833M910.5 826V833M911.5 828V833M912.5 829V833M913.5 829V833M914.5 830V833M915.5 830V833M916.5 830V833M917.5 830V833M918.5 830V833M919.5 831V833M920.5 831V833M921.5 832V833M922.5 832V833M923.5 832V835M924.5 832V835M925.5 832V834M926.5 832V833M927.5 832V833M928.5 832V833M929.5 832V833M930.5 832V833M931.5 832V833M932.5 832V837M933.5 832V842M934.5 832V846M935.5 832V847M936.5 832V845M937.5 832V844M938.5 832V843M939.5 832V841M940.5 832V840M941.5 832V839M942.5 832V839M943.5 832V838M944.5 832V838M945.5 832V837M946.5 832V836M947.5 832V835M948.5 832V833M949.5 832V833M950.5 830V833M951.5 830V833M952.5 831V833M953.5 831V833M954.5 830V833M955.5 830V833M956.5 828V833M957.5 827V833M958.5 826V833M959.5 825V833M960.5 826V833M961.5 826V833M962.5 827V833M963.5 827V833M964.5 828V833M965.5 829V833M966.5 830V833M967.5 831V833M968.5 832V833M969.5 832V833M970.5 832V833M971.5 832V833M972.5 832V835M973.5 832V835M974.5 832V834M975.5 832V834M976.5 832V833M977.5 832V833M978.5 832V833M979.5 832V833M980.5 832V833M981.5 832V833M982.5 832V833M983.5 830V833M984.5 827V833M985.5 824V833M986.5 822V833M987.5 821V833M988.5 821V833M989.5 821V833M990.5 823V833M991.5 825V833M992.5 829V833M993.5 832V833M994.5 832V835M995.5 832V834M996.5 832V833M997.5 832V833M998.5 832V833M999.5 832V833M1000.5 831V833M1001.5 831V833M1002.5 831V833M1003.5 831V833M1004.5 831V833M1005.5 832V833M1006.5 832V834M1007.5 832V836M1008.5 832V838M1009.5 832V839M1010.5 832V836M1011.5 832V834M1012.5 832V833M1013.5 831V833M1014.5 830V833M1015.5 829V833M1016.5 828V833M1017.5 828V833M1018.5 826V833M1019.5 826V833M1020.5 826V833M1021.5 828V833M1022.5 830V833M1023.5 831V833M1024.5 832V833M1025.5 832V833M1026.5 832V834M1027.5 832V838M1028.5 832V841M1029.5 832V838M1030.5 832V833M1031.5 830V833M1032.5 829V833M1033.5 829V833M1034.5 829V833M1035.5 829V833M1036.5 829V833M1037.5 829V833M1038.5 829V833M1039.5 829V833M1040.5 829V833M1041.5 830V833M1042.5 831V833M1043.5 832V833M1044.5 832V834M1045.5 832V835M1046.5 832V836M1047.5 832V836M1048.5 832V836M1049.5 832V835M1050.5 832V833M1051.5 828V833M1052.5 824V833M1053.5 819V833M1054.5 818V833M1055.5 817V833M1056.5 819V833M1057.5 821V833M1058.5 823V833M1059.5 825V833M1060.5 826V833M1061.5 827V833M1062.5 827V833M1063.5 829V833M1064.5 831V833M1065.5 831V833M1066.5 831V833M1067.5 832V833M1068.5 832V837M1069.5 832V841M1070.5 832V842M1071.5 832V843M1072.5 832V844M1073.5 832V844M1074.5 832V845M1075.5 832V844M1076.5 832V844M1077.5 832V843M1078.5 832V843M1079.5 832V842M1080.5 832V842M1081.5 832V841M1082.5 832V840M1083.5 832V839M1084.5 832V838M1085.5 832V836M1086.5 832V834M1087.5 831V833M1088.5 829V833M1089.5 828V833M1090.5 828V833M1091.5 829V833M1092.5 829V833M1093.5 830V833M1094.5 831V833M1095.5 832V833M1096.5 832V833M1097.5 832V833M1098.5 832V833M1099.5 832V833M1100.5 831V833M1101.5 828V833M1102.5 825V833M1103.5 823V833M1104.5 822V833M1105.5 821V833M1106.5 820V833M1107.5 822V833M1108.5 824V833M1109.5 825V833M1110.5 827V833M1111.5 828V833M1112.5 824V833M1113.5 822V833M1114.5 822V833M1115.5 823V833M1116.5 824V833M1117.5 825V833M1118.5 826V833M1119.5 827V833M1120.5 829V833M1121.5 831V833M1122.5 832V833M1123.5 832V833M1124.5 832V834M1125.5 832V839M1126.5 832V844M1127.5 832V849M1128.5 832V852M1129.5 832V854M1130.5 832V854M1131.5 832V852M1132.5 832V850M1133.5 832V847M1134.5 832V843M1135.5 832V839M1136.5 832V833M1137.5 827V833M1138.5 823V833M1139.5 820V833M1140.5 818V833M1141.5 818V833M1142.5 818V833M1143.5 819V833M1144.5 821V833M1145.5 824V833M1146.5 827V833M1147.5 826V833M1148.5 826V833M1149.5 830V833M1150.5 832V833M1151.5 832V833M1152.5 832V833M1153.5 832V833M1154.5 832V834M1155.5 832V834M1156.5 832V835M1157.5 832V835M1158.5 832V835M1159.5 832V835M1160.5 832V835M1161.5 832V836M1162.5 832V838M1163.5 832V837M1164.5 832V837M1165.5 832V837M1166.5 832V836M1167.5 832V836M1168.5 832V836M1169.5 832V836M1170.5 832V837M1171.5 832V837M1172.5 832V837M1173.5 832V833M1174.5 831V833M1175.5 830V833M1176.5 829V833M1177.5 829V833M1178.5 829V833M1179.5 829V833M1180.5 829V833M1181.5 829V833M1182.5 828V833M1183.5 827V833M1184.5 822V833M1185.5 808V833M1186.5 794V833M1187.5 786V833M1188.5 790V833M1189.5 795V833M1190.5 801V833M1191.5 805V833M1192.5 810V833M1193.5 814V833M1194.5 816V833M1195.5 817V833M1196.5 818V833M1197.5 819V833M1198.5 819V833M1199.5 821V833M1200.5 822V833M1201.5 825V833M1202.5 827V833M1203.5 829V833M1204.5 831V833M1205.5 832V833M1206.5 832V833M1207.5 832V839M1208.5 832V846M1209.5 832V854M1210.5 832V857M1211.5 832V858M1212.5 832V857M1213.5 832V856M1214.5 832V854M1215.5 832V852M1216.5 832V849M1217.5 832V847M1218.5 832V845M1219.5 832V843M1220.5 832V843M1221.5 832V845M1222.5 832V845M1223.5 832V845M1224.5 832V844M1225.5 832V842M1226.5 832V840M1227.5 832V839M1228.5 832V837M1229.5 832V836M1230.5 832V836M1231.5 832V837M1232.5 832V840M1233.5 832V844M1234.5 832V850M1235.5 832V853M1236.5 832V854M1237.5 832V853M1238.5 832V852M1239.5 832V848M1240.5 832V845M1241.5 832V840M1242.5 832V833M1243.5 825V833M1244.5 817V833M1245.5 812V833M1246.5 808V833M1247.5 806V833M1248.5 806V833M1249.5 808V833M1250.5 812V833M1251.5 814V833M1252.5 816V833M1253.5 816V833M1254.5 815V833M1255.5 816V833M1256.5 818V833M1257.5 822V833M1258.5 824V833M1259.5 828V833M1260.5 830V833M1261.5 831V833M1262.5 832V833M1263.5 832V833M1264.5 832V837M1265.5 832V841M1266.5 832V843M1267.5 832V843M1268.5 832V843M1269.5 832V843M1270.5 832V844M1271.5 832V844M1272.5 832V844M1273.5 832V843M1274.5 832V842M1275.5 832V839M1276.5 832V835M1277.5 831V833M1278.5 828V833M1279.5 827V833M1280.5 829V833M1281.5 830V833M1282.5 831V833M1283.5 831V833M1284.5 831V833M1285.5 831V833M1286.5 831V833M1287.5 831V833M1288.5 832V833M1289.5 832V833M1290.5 832V833M1291.5 831V833M1292.5 830V833M1293.5 829V833M1294.5 829V833M1295.5 828V833M1296.5 828V833M1297.5 828V833M1298.5 829V833M1299.5 830V833M1300.5 830V833M1301.5 829V833M1302.5 831V833M1303.5 832V835M1304.5 832V842M1305.5 832V848M1306.5 832V851M1307.5 832V854M1308.5 832V855M1309.5 832V853M1310.5 832V851M1311.5 832V848M1312.5 832V845M1313.5 832V844M1314.5 832V845M1315.5 832V845M1316.5 832V846M1317.5 832V846M1318.5 832V845M1319.5 832V845M1320.5 832V845M1321.5 832V842M1322.5 832V840M1323.5 832V837M1324.5 832V835M1325.5 832V833M1326.5 832V833M1327.5 831V833M1328.5 831V833M1329.5 831V833M1330.5 832V833M1331.5 832V833M1332.5 832V833M1333.5 832V833M1334.5 832V833M1335.5 832V833M1336.5 832V833M1337.5 832V833M1338.5 832V834M1339.5 832V835M1340.5 832V838M1341.5 832V840M1342.5 832V839M1343.5 832V839M1344.5 832V837M1345.5 832V836M1346.5 832V834M1347.5 832V833M1348.5 830V833M1349.5 831V833M1350.5 832V833M1351.5 830V833M1352.5 828V833M1353.5 825V833M1354.5 821V833M1355.5 819V833M1356.5 818V833M1357.5 817V833M1358.5 817V833M1359.5 817V833M1360.5 818V833M1361.5 819V833M1362.5 823V833M1363.5 830V833M1364.5 832V834M1365.5 832V838M1366.5 832V840M1367.5 832V843M1368.5 832V845M1369.5 832V845M1370.5 832V845M1371.5 832V845M1372.5 832V844M1373.5 832V844M1374.5 832V847M1375.5 832V848M1376.5 832V849M1377.5 832V849M1378.5 832V848M1379.5 832V847M1380.5 832V845M1381.5 832V843M1382.5 832V841M1383.5 832V839M1384.5 832V836M1385.5 830V833M1386.5 823V833M1387.5 817V833M1388.5 815V833M1389.5 814V833M1390.5 815V833M1391.5 815V833M1392.5 816V833M1393.5 818V833M1394.5 819V833M1395.5 821V833M1396.5 823V833M1397.5 825V833M1398.5 828V833M1399.5 832V833M1400.5 832V836M1401.5 832V839M1402.5 832V841M1403.5 832V841M1404.5 832V840M1405.5 832V839M1406.5 832V838M1407.5 832V837M1408.5 832V835M1409.5 832V833M1410.5 830V833M1411.5 829V833M1412.5 829V833M1413.5 829V833M1414.5 830V833M1415.5 829V833M1416.5 828V833M1417.5 827V833M1418.5 826V833M1419.5 826V833M1420.5 827V833M1421.5 829V833M1422.5 832V833M1423.5 832V835M1424.5 832V837M1425.5 832V838M1426.5 832V838M1427.5 832V838M1428.5 832V838M1429.5 832V838M1430.5 832V838M1431.5 832V835M1432.5 832V833M1433.5 827V833M1434.5 822V833M1435.5 816V833M1436.5 811V833M1437.5 807V833M1438.5 804V833M1439.5 805V833M1440.5 807V833M1441.5 811V833M1442.5 813V833M1443.5 815V833M1444.5 817V833M1445.5 818V833M1446.5 817V833M1447.5 816V833M1448.5 816V833M1449.5 816V833M1450.5 818V833M1451.5 820V833M1452.5 823V833M1453.5 825V833M1454.5 827V833M1455.5 828V833M1456.5 830V833M1457.5 831V833M1458.5 832V833M1459.5 832V833M1460.5 832V834M1461.5 830V833M1462.5 825V833M1463.5 818V833M1464.5 816V833M1465.5 817V833M1466.5 819V833M1467.5 821V833M1468.5 823V833M1469.5 826V833M1470.5 828V833M1471.5 830V833M1472.5 827V833M1473.5 823V833M1474.5 823V833M1475.5 823V833M1476.5 825V833M1477.5 826V833M1478.5 828V833M1479.5 831V833M1480.5 832V834M1481.5 832V836M1482.5 832V838M1483.5 832V839M1484.5 832V837M1485.5 830V833M1486.5 832V833M1487.5 832V836M1488.5 832V839M1489.5 832V842M1490.5 832V844M1491.5 832V846M1492.5 832V851M1493.5 832V858M1494.5 832V862M1495.5 832V871M1496.5 832V878M1497.5 832V884M1498.5 832V881M1499.5 832V876M1500.5 832V870M1501.5 832V865M1502.5 832V859M1503.5 832V855M1504.5 832V850M1505.5 832V845M1506.5 832V839M1507.5 832V833M1508.5 825V833M1509.5 817V833M1510.5 814V833M1511.5 813V833M1512.5 813V833M1513.5 814V833M1514.5 817V833M1515.5 819V833M1516.5 825V833M1517.5 830V833M1518.5 832V833M1519.5 832V833M1520.5 832V833M1521.5 832V835M1522.5 832V836M1523.5 832V836M1524.5 832V835M1525.5 832V835M1526.5 832V836M1527.5 832V836M1528.5 832V837M1529.5 832V837M1530.5 832V844M1531.5 832V850M1532.5 832V850M1533.5 832V850M1534.5 832V850M1535.5 832V849M1536.5 832V846M1537.5 832V843M1538.5 832V840M1539.5 832V837M1540.5 832V836M1541.5 832V835M1542.5 832V834" stroke="#363636" stroke-width="1" fill="none" shape-rendering="crispEdges"/>
<path d="M0 819.3L1 818.8L2 818.4L3 817.7L4 816.4L5 814.8L6 812.9L7 811.5L8 810.9L9 810.9L10 811.4L11 812.2L12 813.4L13 814.7L14 816.1L15 817.2L16 817.9L17 818.7L18 819.6L19 820.4L20 821.3L21 822.1L22 822.8L23 823.7L24 824.5L25 825.4L26 825.9L27 826.3L28 826.4L29 826.8L30 827.5L31 828.5L32 830.2L33 832.5L34 834.6L35 836.5L36 838.2L37 839.6L38 841L39 842.2L40 843.5L41 844.8L42 846.2L43 847.5L44 848.8L45 849.9L46 850.8L47 851.4L48 851.9L49 851.9L50 851.5L51 851.3L52 851.3L53 851.7L54 852.3L55 853.1L56 854.1L57 855.1L58 856.1L59 856.9L60 857.5L61 857.9L62 858L63 857.8L64 857.3L65 856.1L66 854.3L67 851.7L68 848.5L69 845.3L70 842.2L71 839.5L72 837.1L73 835.1L74 833.1L75 831.3L76 829.6L77 827.9L78 826.4L79 824.9L80 823.7L81 822.7L82 821.9L83 821.1L84 820.2L85 819.3L86 818.5L87 817.8L88 817.1L89 816.3L90 815.6L91 814.8L92 814.1L93 813.4L94 812.6L95 811.9L96 811.2L97 810.5L98 810L99 809.7L100 809.5L101 809.2L102 808.9L103 808.5L104 808.1L105 807.8L106 807.5L107 807.4L108 807.5L109 807.7L110 807.8L111 807.8L112 807.9L113 808L114 808.2L115 808.5L116 808.8L117 809.2L118 809.5L119 809.9L120 810.2L121 810.6L122 810.9L123 811.3L124 811.6L125 811.7L126 811.6L127 811.5L128 811.3L129 811.1L130 810.8L131 810.6L132 810.3L133 810L134 809.7L135 809.5L136 809.7L137 810.2L138 811.2L139 812.8L140 814.8L141 816.8L142 819.1L143 821.3L144 823.3L145 825.2L146 826.9L147 828.1L148 828.4L149 826.9L150 824.1L151 820.6L152 816.8L153 813L154 809.6L155 806.7L156 804.1L157 801.9L158 800L159 798.1L160 795.8L161 793L162 791.2L163 791L164 792.8L165 796L166 799.3L167 802.5L168 805.4L169 808.1L170 810.7L171 813.9L172 817.4L173 821.5L174 826L175 831L176 836.2L177 840.9L178 845.1L179 848.7L180 851.5L181 853.4L182 854.5L183 854.7L184 854.2L185 853.2L186 851.9L187 850.3L188 849L189 848L190 847.4L191 847.4L192 847.7L193 848L194 848.3L195 848.3L196 848L197 847.3L198 845.9L199 844.2L200 842.4L201 840.6L202 839.1L203 837.7L204 836.9L205 837.3L206 838.5L207 840.4L208 842.8L209 845.3L210 847.9L211 850.2L212 852.2L213 853.9L214 855.5L215 856.8L216 857.9L217 858.9L218 859.8L219 860.7L220 861.4L221 862L222 862.5L223 863L224 863.3L225 863.7L226 864L227 864.2L228 864.4L229 864.4L230 864.3L231 863.2L232 861.5L233 859.4L234 857.1L235 854L236 850.4L237 845.9L238 841.1L239 836.4L240 832.1L241 828.8L242 826.2L243 824.1L244 822.3L245 820.9L246 819.6L247 818.6L248 817.9L249 817.5L250 817.3L251 817.2L252 817L253 816.8L254 816.8L255 817.6L256 818.9L257 820.6L258 822.7L259 824.9L260 827L261 829L262 830.9L263 832.7L264 834.4L265 835.6L266 836L267 835.3L268 833.3L269 830.8L270 828.1L271 825.5L272 823.2L273 821.1L274 819.2L275 817.5L276 816.1L277 814.6L278 812.9L279 811.3L280 810.1L281 809.2L282 808.4L283 807.8L284 807.2L285 806.8L286 806.4L287 806.1L288 805.8L289 805.3L290 804.7L291 803.8L292 802.4L293 800.6L294 798.7L295 796.6L296 794.6L297 792.8L298 791.2L299 789.8L300 788.8L301 788L302 786.7L303 784.8L304 784.2L305 784.7L306 785.4L307 786.2L308 787L309 787.9L310 788.8L311 789.7L312 790.4L313 791L314 791.6L315 791.7L316 791.2L317 790L318 787.9L319 785.6L320 783.8L321 782.5L322 781.9L323 781.7L324 782.1L325 782.9L326 784.1L327 785.6L328 787.6L329 789.8L330 792.1L331 794.5L332 797L333 799.4L334 801.6L335 803.7L336 805.7L337 807.7L338 809.9L339 812.9L340 816.3L341 820.5L342 825.1L343 829.6L344 834.1L345 837.8L346 841L347 843.8L348 845.7L349 846.9L350 848.1L351 849.3L352 850.5L353 851.5L354 852.4L355 854.1L356 856.4L357 858.6L358 860.6L359 862.4L360 864L361 865.4L362 866.6L363 867.3L364 867.8L365 867.7L366 867.1L367 866.2L368 865.3L369 864.1L370 862.9L371 861.6L372 860.2L373 858.4L374 856.1L375 853.1L376 849.4L377 844.9L378 840L379 835.1L380 830.5L381 826.4L382 822.9L383 820.1L384 818.1L385 816.7L386 815.9L387 815.6L388 815.5L389 815.3L390 815L391 814.8L392 814.8L393 815.4L394 816.8L395 818.8L396 821.2L397 823.6L398 826.1L399 828.5L400 831L401 833.5L402 836L403 838.2L404 840.3L405 842.3L406 844.1L407 845.8L408 846.6L409 846.9L410 847.3L411 847.7L412 848.3L413 849.1L414 850.1L415 851.1L416 852.2L417 853.2L418 854L419 854.6L420 855L421 854.5L422 853.4L423 851.3L424 848.5L425 845.4L426 842.1L427 839L428 836L429 833.2L430 831.1L431 829.4L432 828.6L433 828.5L434 828.7L435 829L436 829.6L437 830.4L438 831.3L439 832.5L440 833.8L441 835.3L442 837L443 838.8L444 840.7L445 842.6L446 844.5L447 846.4L448 848.2L449 850L450 851.4L451 852.4L452 853.1L453 853.6L454 853.9L455 854L456 854.3L457 855L458 856.1L459 857.2L460 858.5L461 859.7L462 860.8L463 861.6L464 862.2L465 862.6L466 862.8L467 863.1L468 863.7L469 864.6L470 865.8L471 867.2L472 868.7L473 870.1L474 871.4L475 872.6L476 873.6L477 874.6L478 875.4L479 876.3L480 877.1L481 877.9L482 878.7L483 879.3L484 879.9L485 880.3L486 880.6L487 880.7L488 880.6L489 880.3L490 879.7L491 879L492 878.1L493 876.8L494 875.2L495 873.4L496 871.4L497 869.4L498 867.5L499 865.7L500 864.2L501 862.8L502 861.6L503 860.4L504 859.3L505 858.3L506 857.5L507 856.8L508 856.2L509 855.5L510 854.8L511 853.9L512 853.1L513 852.4L514 851.6L515 850.9L516 850.4L517 850.5L518 851.1L519 852L520 853.1L521 854.3L522 855.5L523 856.6L524 857.6L525 858.1L526 858.2L527 858.1L528 857.8L529 857.5L530 857.1L531 856.5L532 855.7L533 854.9L534 854L535 853L536 852L537 851L538 850L539 848.8L540 847.5L541 846.1L542 844.7L543 843.4L544 842.2L545 841.1L546 840.2L547 839.4L548 838.7L549 838.1L550 837.6L551 837.1L552 836.8L553 836.7L554 836.8L555 837.1L556 837.3L557 837.6L558 837.9L559 838.5L560 839.2L561 840L562 841L563 842L564 843L565 844L566 844.9L567 845.7L568 846.5L569 847.3L570 848.1L571 848.8L572 849.5L573 850.4L574 851.5L575 852.9L576 854.4L577 855.8L578 857.2L579 858.5L580 859.5L581 860.4L582 861.2L583 861.6L584 861.9L585 861.9L586 861.3L587 860.3L588 858.4L589 855.7L590 852.9L591 850.5L592 849L593 848.1L594 847.8L595 848L596 848.3L597 848.7L598 849.1L599 849.3L600 849.3L601 849.2L602 849.1L603 849.1L604 849L605 848.9L606 848.8L607 848.6L608 848.2L609 847.4L610 846.3L611 844.9L612 843.3L613 841.8L614 840.5L615 839.4L616 838.5L617 837.7L618 836.9L619 836.3L620 835.9L621 836.1L622 837.4L623 839.6L624 842.5L625 845.6L626 848.6L627 851.4L628 853.8L629 855.9L630 857.6L631 858.9L632 859.6L633 859.6L634 858.8L635 857.1L636 855.1L637 852.9L638 850.8L639 849L640 847.3L641 845.8L642 844.5L643 843.2L644 842.1L645 841L646 840.1L647 839L648 837.6L649 836.1L650 833.8L651 830.7L652 827.4L653 824.1L654 820.7L655 817.5L656 814.2L657 811L658 807.8L659 804.7L660 801.8L661 799.1L662 796.7L663 794.7L664 793.1L665 791.9L666 791.1L667 790.8L668 791L669 791.6L670 792.9L671 794.7L672 797.2L673 800.1L674 803.5L675 807.2L676 811.3L677 815.7L678 820.5L679 825.4L680 830.3L681 834.8L682 838.9L683 842.7L684 846L685 849L686 851.7L687 854.1L688 856.3L689 858.2L690 859.9L691 861.4L692 862.7L693 863.9L694 865.5L695 867.2L696 869.1L697 870.8L698 872.5L699 873.6L700 874.3L701 874.7L702 874.8L703 874.8L704 874.6L705 873.9L706 872.9L707 871.4L708 869.5L709 867.7L710 866.2L711 864.1L712 861.7L713 859.3L714 857L715 855.1L716 853.5L717 852.1L718 850.9L719 849.9L720 848.6L721 847.3L722 846.1L723 845L724 844L725 843.2L726 842.6L727 842L728 841.5L729 841.4L730 841.7L731 841.8L732 841.4L733 840.4L734 838.9L735 837.3L736 835.7L737 833.9L738 832.1L739 830.6L740 829.5L741 829.2L742 829.3L743 829.6L744 830L745 830.6L746 831.4L747 832.3L748 833L749 833.5L750 834L751 834.7L752 835.4L753 836.4L754 837.4L755 837.7L756 838.3L757 839.7L758 841.7L759 844L760 846.4L761 848.6L762 850.5L763 852.1L764 853.2L765 853.8L766 853.7L767 853.5L768 853.5L769 853.9L770 855.2L771 857L772 859.2L773 861.5L774 863.6L775 865.3L776 866.9L777 868.3L778 868.7L779 868.5L780 867.9L781 867L782 865.6L783 864L784 862.2L785 860.3L786 858.7L787 857.6L788 856.7L789 854.9L790 852.8L791 850.6L792 848.4L793 846L794 843.5L795 841.2L796 839.1L797 837.1L798 834.9L799 832.6L800 829.6L801 825.8L802 821.7L803 817.5L804 813.3L805 809.3L806 805.8L807 802.8L808 800.3L809 798.3L810 796.6L811 795.6L812 795.2L813 795.5L814 795.3L815 793.8L816 791.8L817 789.4L818 786.9L819 784.8L820 783.1L821 781.7L822 780.5L823 779.5L824 779L825 778.9L826 779.2L827 779.8L828 780.7L829 781.5L830 782L831 782L832 781.5L833 780.7L834 779.8L835 778.9L836 778L837 777.9L838 778.6L839 780.2L840 782.4L841 785.2L842 788.4L843 791.9L844 795.4L845 798.9L846 802.2L847 805.2L848 807.9L849 810.5L850 813.2L851 815.9L852 818.9L853 821.7L854 824.6L855 827.4L856 830.1L857 832.7L858 835.1L859 837.2L860 839.1L861 840.4L862 840L863 839.4L864 838.8L865 838.4L866 838.1L867 838L868 837.9L869 837.8L870 837.7L871 837.6L872 837.4L873 837.1L874 836.6L875 836.7L876 837.1L877 837.9L878 839L879 840.2L880 841.5L881 842.7L882 843.8L883 844.7L884 845.9L885 847.7L886 850.2L887 853.3L888 857L889 860.9L890 864.9L891 868.5L892 871.9L893 874.7L894 877.1L895 878.7L896 879.8L897 879.3L898 877.7L899 875L900 871.4L901 867.1L902 862.5L903 857.9L904 853.6L905 849.6L906 846.1L907 843.2L908 840.8L909 838.9L910 837.6L911 836.8L912 836.2L913 835.7L914 835.2L915 834.8L916 834.4L917 834.1L918 833.8L919 833.5L920 833.3L921 833.3L922 833.4L923 834L924 834.6L925 835.1L926 835.4L927 835.5L928 835.6L929 835.6L930 835.7L931 835.9L932 836.9L933 838.8L934 841.6L935 844.6L936 847.3L937 849.7L938 851.9L939 853.8L940 855.5L941 856.9L942 858.2L943 859.4L944 860.5L945 861.6L946 862.3L947 862.9L948 863.1L949 863.1L950 862.7L951 862.4L952 862.1L953 861.8L954 861.5L955 861.2L956 860.5L957 859.4L958 858.2L959 856.9L960 855.6L961 854.5L962 853.5L963 852.6L964 851.7L965 851.1L966 850.7L967 850.5L968 850.4L969 850.4L970 850.4L971 850.7L972 851.2L973 851.8L974 852.3L975 852.6L976 852.8L977 853L978 853.2L979 853.4L980 853.6L981 853.8L982 853.7L983 853.4L984 852.3L985 850.7L986 848.7L987 846.4L988 844.2L989 842L990 840.3L991 838.9L992 838.3L993 838.4L994 839.1L995 839.5L996 839.7L997 839.8L998 839.8L999 839.7L1000 839.6L1001 839.5L1002 839.3L1003 839.2L1004 839L1005 839.2L1006 839.6L1007 840.4L1008 841.5L1009 843L1010 843.8L1011 844.2L1012 844.2L1013 843.9L1014 843.4L1015 842.9L1016 842.2L1017 841.3L1018 840.1L1019 838.9L1020 837.7L1021 837L1022 836.5L1023 836.4L1024 836.3L1025 836.3L1026 836.7L1027 838L1028 839.7L1029 840.9L1030 840.9L1031 840.5L1032 839.9L1033 839.2L1034 838.5L1035 837.9L1036 837.2L1037 836.6L1038 836L1039 835.3L1040 834.6L1041 834.3L1042 834.1L1043 834.3L1044 834.7L1045 835.3L1046 836.1L1047 837L1048 837.8L1049 838.4L1050 838.4L1051 837.7L1052 836.1L1053 833.4L1054 830.6L1055 827.6L1056 825.1L1057 822.9L1058 821.1L1059 819.7L1060 818.5L1061 817.5L1062 816.5L1063 815.9L1064 815.7L1065 815.6L1066 815.5L1067 815.4L1068 816.4L1069 818.1L1070 820.2L1071 822.4L1072 824.8L1073 827.2L1074 829.8L1075 832.3L1076 834.7L1077 836.9L1078 839L1079 841L1080 842.9L1081 844.7L1082 846.4L1083 847.9L1084 849.2L1085 850L1086 850.5L1087 850.3L1088 849.7L1089 848.9L1090 848.1L1091 847.4L1092 846.9L1093 846.6L1094 846.3L1095 846.2L1096 846.2L1097 846.3L1098 846.4L1099 846.3L1100 846.1L1101 845.3L1102 843.9L1103 842.1L1104 840L1105 837.7L1106 835.3L1107 833.2L1108 831.6L1109 830.2L1110 829.3L1111 828.4L1112 826.8L1113 824.8L1114 822.7L1115 820.8L1116 819.2L1117 817.7L1118 816.5L1119 815.5L1120 814.8L1121 814.6L1122 814.7L1123 814.8L1124 815.3L1125 816.7L1126 819.2L1127 822.5L1128 826.5L1129 830.9L1130 835.2L1131 839.3L1132 842.9L1133 846L1134 848.3L1135 849.6L1136 849.8L1137 848.8L1138 847L1139 844.6L1140 841.8L1141 838.9L1142 836.1L1143 833.5L1144 831.2L1145 829.7L1146 828.6L1147 827.3L1148 826.1L1149 825.6L1150 825.7L1151 825.8L1152 826L1153 826.3L1154 826.7L1155 827.2L1156 827.7L1157 828.4L1158 829L1159 829.5L1160 830.1L1161 831L1162 832.1L1163 833.2L1164 834.2L1165 835.1L1166 836L1167 836.7L1168 837.5L1169 838.4L1170 839.4L1171 840.4L1172 841.4L1173 841.6L1174 841.4L1175 841L1176 840.4L1177 839.8L1178 839.2L1179 838.6L1180 838L1181 837.4L1182 836.7L1183 835.7L1184 833.8L1185 829L1186 821.4L1187 812.3L1188 803.9L1189 796.4L1190 790.1L1191 784.8L1192 780.4L1193 776.7L1194 773.6L1195 770.6L1196 767.8L1197 765.1L1198 762.6L1199 760.3L1200 758.4L1201 757L1202 756L1203 755.4L1204 755.2L1205 755.2L1206 755.4L1207 756.8L1208 759.5L1209 764L1210 769.1L1211 774.3L1212 779.4L1213 784.1L1214 788.4L1215 792.4L1216 795.8L1217 798.7L1218 801.2L1219 803.4L1220 805.6L1221 808.1L1222 810.8L1223 813.4L1224 815.7L1225 817.7L1226 819.4L1227 820.8L1228 821.8L1229 822.7L1230 823.5L1231 824.5L1232 826.1L1233 828.5L1234 832.1L1235 836.2L1236 840.7L1237 844.9L1238 848.9L1239 852.1L1240 854.7L1241 856.3L1242 856.4L1243 854.9L1244 852L1245 847.9L1246 843.1L1247 837.8L1248 832.6L1249 827.8L1250 823.7L1251 820.2L1252 817L1253 813.8L1254 810.4L1255 807.3L1256 804.5L1257 802.5L1258 801L1259 800.1L1260 799.7L1261 799.5L1262 799.5L1263 799.6L1264 800.6L1265 802.4L1266 804.5L1267 806.7L1268 809L1269 811.3L1270 813.6L1271 815.9L1272 818.3L1273 820.5L1274 822.5L1275 824L1276 824.5L1277 824.3L1278 823.5L1279 822.5L1280 821.9L1281 821.6L1282 821.4L1283 821.1L1284 820.8L1285 820.6L1286 820.3L1287 820.2L1288 820.1L1289 820.2L1290 820.2L1291 820L1292 819.6L1293 819L1294 818.3L1295 817.5L1296 816.8L1297 816L1298 815.4L1299 815L1300 814.5L1301 813.9L1302 813.7L1303 814.2L1304 816.2L1305 819.4L1306 823.3L1307 827.7L1308 832.2L1309 836.4L1310 840.3L1311 843.5L1312 846.1L1313 848.6L1314 851.1L1315 853.8L1316 856.5L1317 859.3L1318 862L1319 864.6L1320 867.2L1321 869.2L1322 870.8L1323 871.8L1324 872.3L1325 872.4L1326 872.3L1327 872.1L1328 871.9L1329 871.7L1330 871.7L1331 871.7L1332 871.8L1333 871.9L1334 872.1L1335 872.2L1336 872.1L1337 872.1L1338 872.4L1339 873.1L1340 874.3L1341 875.8L1342 877.2L1343 878.5L1344 879.5L1345 880.2L1346 880.5L1347 880.5L1348 880.2L1349 880L1350 879.9L1351 879.4L1352 878.7L1353 877.2L1354 875.1L1355 872.5L1356 869.6L1357 866.6L1358 863.7L1359 860.7L1360 857.9L1361 855.4L1362 853.7L1363 853.2L1364 853.7L1365 854.8L1366 856.5L1367 858.6L1368 861.2L1369 863.8L1370 866.4L1371 868.9L1372 871.3L1373 873.7L1374 876.6L1375 879.9L1376 883.2L1377 886.6L1378 889.8L1379 892.8L1380 895.4L1381 897.6L1382 899.5L1383 900.8L1384 901.7L1385 901.2L1386 899.4L1387 896.4L1388 892.9L1389 889.2L1390 885.7L1391 882.4L1392 879.3L1393 876.5L1394 873.9L1395 871.8L1396 869.9L1397 868.6L1398 867.8L1399 867.8L1400 868.6L1401 869.9L1402 871.7L1403 873.4L1404 875L1405 876.3L1406 877.5L1407 878.4L1408 879L1409 878.9L1410 878.5L1411 877.8L1412 877.2L1413 876.6L1414 876.2L1415 875.6L1416 874.9L1417 874L1418 872.9L1419 871.7L1420 870.7L1421 870L1422 870.1L1423 870.7L1424 871.7L1425 873L1426 874.2L1427 875.4L1428 876.6L1429 877.8L1430 878.9L1431 879.5L1432 879.5L1433 878.4L1434 876.3L1435 873.1L1436 869L1437 864L1438 858.5L1439 853.2L1440 848.2L1441 844L1442 840.2L1443 836.9L1444 833.9L1445 831.1L1446 828.1L1447 824.9L1448 821.6L1449 818.4L1450 815.6L1451 813.2L1452 811.4L1453 810.1L1454 809.1L1455 808.4L1456 807.9L1457 807.7L1458 807.7L1459 808L1460 808.4L1461 808L1462 806.6L1463 803.8L1464 800.7L1465 797.7L1466 795.1L1467 792.8L1468 791L1469 789.7L1470 788.9L1471 788.4L1472 787.5L1473 785.7L1474 783.8L1475 782.1L1476 780.6L1477 779.4L1478 778.7L1479 778.6L1480 779L1481 779.8L1482 781L1483 782.3L1484 783.3L1485 783L1486 782.9L1487 783.7L1488 785.1L1489 787.2L1490 789.7L1491 792.5L1492 796.4L1493 801.5L1494 807.6L1495 815.4L1496 824.6L1497 835L1498 844.8L1499 853.6L1500 861.2L1501 867.8L1502 873.2L1503 877.8L1504 881.3L1505 883.9L1506 885.2L1507 885.3L1508 883.9L1509 881L1510 877.4L1511 873.5L1512 869.8L1513 866.1L1514 863L1515 860.5L1516 859.1L1517 858.8L1518 858.7L1519 858.7L1520 858.9L1521 859.4L1522 860.3L1523 861.1L1524 861.7L1525 862.4L1526 863.2L1527 864.1L1528 865.1L1529 866.1L1530 868.6L1531 872.1L1532 875.7L1533 879.4L1534 883L1535 886.4L1536 889.1L1537 891.4L1538 893L1539 894.1L1540 894.8L1541 895.4L1542 895.9" stroke="#e4e4e4" stroke-width="1" fill="none" stroke-linejoin="round"/>
<path d="M0 816.9L2.4 816.9L4.4 809.9L6.4 804.3L9 810.9L12 817.9L14 821.9L16 820.9L19 823.9L22 825.9L25 828.9L28 826.9L30.9 831.9L32.9 841.9L35.9 844.9L38.9 846.9L41.9 851.8L44.9 854.4L47.9 853.8L50.3 849.4L52.9 852.8L55.9 857.8L57.9 860.2L60.9 859.8L63.9 855.8L65.9 847.8L67.9 835.9L69.9 829.9L72.9 826.9L75.9 822.9L78.9 818.9L81.9 818.9L84.9 815.9L87.8 814.3L90.8 811.9L93.8 809.9L96.8 807.5L99.8 808.9L102.8 806.9L105.8 806.3L108.8 808.3L111.8 807.9L114.8 809.5L117.8 810.9L120.8 811.9L123.8 812.9L126.8 810.9L129.8 809.9L132.8 808.9L134.8 808.3L137.4 812.9L139.8 821.9L142.7 829.9L145.7 833.9L147.7 831.9L149.3 817.9L150.7 807.9L152.7 797.9L155.7 793.9L158.7 791.9L161.3 780.4L163.3 791.9L164.7 807.9L166.7 814.9L169.7 819.9L171.7 829.9L173.7 841.9L175.7 855.8L177.7 861.8L179.7 863.4L182.1 858.8L184.7 849.8L187.3 843.5L189.7 844.3L191.7 848.8L194.1 849.4L196.7 845.9L198.6 837.9L200.6 833.9L203.6 831.9L205.6 841.9L207.6 850.8L209.6 857.8L212.6 860.8L216.6 862.8L219.6 864.2L223.6 864.8L227.6 865.4L230 863.8L231.6 855.8L234 847.8L236 835.9L237.6 823.9L239.6 814.9L242.6 815.9L246.6 814.3L250.6 816.9L253.6 815.5L255.9 823.9L258.5 832.9L261.5 837.9L264.5 841.9L266.5 835.9L268.5 821.9L270.5 815.9L273.5 811.9L276.5 809.9L278.5 804.9L281.5 805.5L284.5 804.9L287.5 804.9L290.5 801.9L292.5 794.9L295.5 787L298.5 784.4L301.1 785L303.1 777L305.1 787L307.5 790L310.5 792.9L314.4 793.9L316.4 788L318.4 777L320.4 776.4L323.4 782L326.4 790L329.4 799.9L332.4 807.9L335.4 812.9L337.4 815.9L340 829.9L341.6 841.9L344 851.8L347 854.8L349 851.8L351.6 854.8L354 855.8L356 865.8L359 869.8L361.6 871.4L364 869.8L366.4 863.8L368.9 859.8L371.9 854.8L374.3 845.9L376.3 831.9L378.3 817.9L380.3 810.9L382.3 808.3L384.9 810.9L387.5 815.5L390.3 813.5L392.3 814.9L394.3 823.9L396.3 831.9L398.9 837.9L401.9 845.9L404.9 849.8L406.9 852.8L408.9 847.8L411.5 849.8L413.9 853.8L416.9 857.4L419.9 856.8L421.9 849.8L423.9 837.9L426.2 827.9L428.8 822.3L430.8 822.3L432.8 827.9L435.4 830.9L437.8 834.9L440.8 840.9L443.8 847.8L446.8 853.8L449.4 857.4L452.2 855.8L455.4 854.2L457.8 859.8L460.8 864.8L463.8 864.8L466.8 863.4L468.8 867.8L471.4 873.8L474.2 876.8L477.8 878.8L481.4 881.4L484.7 882.4L488.1 880.2L491.3 875.8L493.7 869.8L496.1 862.8L498.7 858.8L501.7 856.8L504.7 854.2L507.7 854.2L510.7 850.8L513.7 848.8L515.7 847.4L517.7 852.8L520.7 858.8L523.7 861.8L526.7 857.8L529.7 855.8L532.7 851.8L535.3 848.8L538.1 845.9L540.6 840.9L543.6 837.5L546.6 836.3L549.6 835.5L552 835.5L554.6 837.9L557.6 838.9L560.6 842.9L563.6 846.9L566.6 848.8L569.6 850.8L572.6 852.8L575.6 859.8L578.6 863.4L581.6 864.2L584.6 862.8L587.2 855.8L589.2 843.9L590.6 840.3L592.6 843.9L595.1 848.8L597.9 850.8L600.5 848.8L603.5 848.8L607.5 847.8L609.9 841.9L612.5 835.9L615.5 834.9L618.5 833.9L620.5 834.3L621.9 841.9L623.9 853.8L625.9 860.8L628.5 864.2L631.1 864.2L633.1 859.8L635.1 849.8L637.5 842.9L640.5 840.3L643.5 837.9L646.5 835.9L649.1 829.9L651.5 815.9L653.8 807.9L656.4 799.9L659 791.9L661.4 787.6L663.8 786.4L666.4 788.4L669 793.9L671.4 803.9L673.8 815.9L676.4 829.9L678.4 841.9L680 849.8L682.4 856.8L685 860.8L687.6 864.8L690.4 866.8L693 868.8L695.6 875.8L698 879.2L701 876.2L704 873.8L706.4 867.8L708.3 860.8L710.3 859.8L711.5 852.8L713.9 847.8L716.3 846.9L718.9 845.9L720.9 841.9L723.5 840.3L726.3 839.9L728.3 839.5L730.3 843.9L732.3 838.9L734.3 831.9L736.3 828.9L737.5 824.9L739.9 824.9L741.9 829.9L744.3 831.9L746.9 835.9L748.9 835.5L751.5 837.5L753.9 841.9L755.5 837.9L757.5 847.8L759.9 855.8L762.3 858.8L764.9 856.8L766.4 851.8L768.8 854.8L770.8 863.8L772.8 870.8L775.4 872.8L776.8 874.2L778.8 867.8L780.8 863.8L782.8 857.8L785.4 851.8L787.8 853.8L789.4 845.9L791.8 839.9L794.2 832.9L796.8 829.9L799.4 821.9L801.4 807.9L803.4 798.9L805.4 791.9L807.8 790.5L809.8 789.6L811.8 792.9L813.4 797.9L815.4 786L817.8 777L820.8 776L823.3 775.6L825.7 780L828.1 784.4L829.7 785L831.7 780L833.7 776.4L836.1 774.4L837.7 780L839.7 790L841.7 799.9L843.7 808.9L845.7 814.9L848.1 818.9L850.1 823.9L852.1 830.9L854.7 837.9L857.3 843.9L859.3 845.9L860.7 847.8L862.1 837.9L864.1 836.3L866.7 837.5L869.7 837.5L872.7 836.3L874.1 834.9L876.1 838.9L878.6 844.9L881.2 847.8L883.6 848.8L885.6 857.8L887.6 869.8L889.6 879.8L891.6 884.8L894 886.8L896 883.8L897.6 873.8L899.6 859.8L901.6 845.9L903.6 836.9L906 831.9L908.6 830.9L911.2 833.9L913.6 833.5L916.6 832.9L919.6 832.3L922 833.9L923.6 837.5L926.6 836.3L929.2 835.5L931.2 836.9L932.6 843.9L934.6 855.8L937.1 859.8L939.5 861.8L942.5 863.8L945.1 865.8L947.5 864.8L949.9 861.4L952.5 860.8L955.1 859.8L957.1 854.8L959.5 850.8L961.9 849.4L964.5 848.2L967.5 849.8L970.5 850.8L972.5 854.2L975.5 853.8L978.5 853.8L981.1 854.8L983.1 851.8L985.1 843.9L987.5 835.9L989.5 832.9L991.5 833.9L993.8 841.9L996.4 840.3L999 839.5L1001.4 838.9L1003.8 838.3L1006.4 841.9L1009 848.8L1011.4 844.9L1013.8 841.9L1016.4 838.9L1018.4 834.9L1020 832.9L1023 835.8L1025.6 836.4L1027 842.8L1028.4 848.4L1030 840.8L1032.4 836.8L1035 835.2L1037.6 833.8L1040 831.8L1042.4 833.8L1045 837.8L1047.6 841.2L1049.5 840.4L1051.5 832.8L1052.9 822.9L1054.9 815.9L1057.5 813.9L1059.9 813.9L1062.3 812.5L1064.3 815.3L1066.9 814.9L1068.9 824.9L1071.5 832.8L1073.9 839.8L1076.3 844.8L1078.9 848.8L1081.5 852.8L1083.9 854.4L1085.9 852.8L1087.5 847.8L1089.9 844.8L1092.3 844.8L1094.9 845.8L1097.5 846.8L1099.9 845.8L1101.9 838.8L1104.3 830.8L1106.2 824.9L1108.8 824.9L1110.8 825.9L1112.2 818.9L1114.2 813.9L1116.8 811.9L1119.2 811.3L1121.8 814.9L1123.8 815.9L1125.4 824.9L1127.4 838.8L1129.4 850.8L1131.4 856.8L1133.4 858.8L1135.4 853.8L1137.4 842.8L1139.4 832.8L1141.8 824.9L1143.8 821.9L1145.8 824.9L1147.8 820.5L1149.8 825.9L1152.2 826.9L1154.8 828.9L1157.4 831.2L1159.8 831.8L1162.1 836.8L1164.7 838.8L1167.3 839.8L1169.7 842.8L1171.7 845.8L1173.7 840.8L1176.1 837.8L1178.7 836.4L1181.3 834.8L1183.7 830.8L1185.3 804.9L1186.7 776.9L1188.7 767L1191.3 763L1193.7 762L1195.7 757L1197.7 753L1199.7 750.4L1202.1 752L1204.1 754.6L1206.1 756L1207.7 767L1209.3 784.9L1211.3 796.9L1213.3 803.9L1215.3 808.9L1217.7 810.9L1219.6 812.9L1221.6 820.9L1223.6 824.9L1226.6 826.5L1229.2 825.9L1231.2 828.9L1232.6 834.8L1234 846.8L1236 858.8L1238 864.8L1240.6 865.2L1242.6 852.8L1244.6 834.8L1246.6 818.9L1248.6 808.9L1250.6 806.9L1252.6 802.9L1254 796.9L1255.6 793.3L1258 794.9L1260.6 798.9L1263.2 799.9L1265.2 810.9L1267.6 816.9L1270 822.9L1272.6 828.9L1274.6 831.2L1276.5 824.9L1278.5 818.5L1281.1 820.5L1283.5 819.9L1286.5 819.3L1289.5 820.9L1291.9 817.9L1294.5 814.9L1297.1 812.9L1299.5 813.3L1301.5 810.9L1303.1 816.9L1305.1 832.8L1307.5 848.8L1309.9 855.8L1312.5 856.8L1314.5 862.8L1317.1 870.8L1319.5 875.8L1320 877.8L1322.4 876.8L1325 872.8L1328 870.8L1331 871.8L1334 872.8L1337 871.8L1339 875.8L1341 881.8L1343 883.8L1345.6 882.8L1348 878.8L1349.9 879.8L1352.3 874.8L1354.3 864.8L1356.3 856.8L1358.9 848.8L1361.5 844.4L1363.5 853.8L1365.9 862.8L1368.3 872.8L1370.9 878.8L1372.9 882.8L1374.9 892.7L1376.9 899.7L1378.9 904.7L1381.5 907.1L1383.9 905.7L1385.5 896.7L1386.9 884.8L1388.9 874.8L1391.5 867.8L1393.9 863.8L1396.3 862.4L1398.3 864.8L1400.3 872.8L1402.3 879.8L1404.9 881.8L1407.4 882.4L1409.4 877.8L1411.4 874.4L1413.8 874.8L1416.2 871.8L1418.8 866.8L1420.8 866.8L1422.8 872.8L1424.8 877.8L1427.4 880.8L1430.2 883.8L1432.2 878.8L1434.2 866.8L1436.2 850.8L1438.2 834.8L1439.8 828.9L1442.2 824.9L1444.8 820.9L1446.8 812.9L1448.8 805.9L1450.8 803.5L1453.4 804.9L1455.8 805.9L1458.2 807.9L1460.2 810.5L1461.7 802.9L1463.3 789.9L1465.3 784.9L1467.3 783.3L1469.3 784.9L1471.3 786.9L1473.3 776.9L1475.7 774.5L1477.7 774.9L1479.7 779.9L1481.7 784.9L1483.7 788.9L1485.3 779.9L1487.3 787.9L1489.3 796.9L1491.3 804.9L1492.7 818.9L1494.1 832.8L1495.7 856.8L1497.3 880.8L1498.7 887.7L1500.7 893.7L1503.3 896.3L1505.3 893.7L1507.3 884.8L1509.3 866.8L1511.3 856.8L1513.3 850.8L1515.3 850.4L1517.3 858.4L1519.6 858.8L1522 863.8L1524.6 864.8L1527.2 867.8L1529.2 870.8L1530.6 884.8L1532.6 892.7L1534.6 899.7L1537.2 900.3L1539.6 897.7L1542 897.7" stroke="#ff9a00" stroke-width="1" fill="none" stroke-linejoin="round"/>
<path d="M678 881.4L786.8 872.2M877.2 891.4L1179.7 844.2M1378.9 909.7L1440.8 880.4M1471.7 770.4L1492.1 779.9" stroke="#d6d6d6" stroke-width="1.15" fill="none"/>
<path d="M1379.3 909.3L1557.2 900.3" stroke="#ece028" stroke-width="1.15" fill="none"/>
<rect x="0" y="744" width="390" height="18" fill="#1e1e1e"/>
<text class="hb" x="6.5" y="758" textLength="24.5" lengthAdjust="spacingAndGlyphs">PPO</text>
<text class="hd" x="47.7" y="758" textLength="147.7" lengthAdjust="spacingAndGlyphs">(12, 26, 9 - EMA, EMA, EMA)</text>
<g transform="translate(201.7 750.3)"><path d="M.6 1.600a3.300 3.300 0 0 1 5.200 1.400l2.600 2.900-.300 2.200-2.700-.400-2.400-2.300a3.300 3.300 0 0 1-3-2.400l2.200 1 1.200-1.300z" fill="#86b4e6"/><path d="M4.500 5.500l3 2.800" stroke="#c4dcf4" stroke-width="1"/></g>
<rect x="225" y="752" width="17" height="2.2" fill="#f5a623"/>
<rect x="260" y="752" width="17" height="2.2" fill="#e0e0e0"/>
<rect x="316" y="752" width="17" height="2.2" fill="#585858"/>
<text class="hd" x="281.5" y="758" textLength="15.5" lengthAdjust="spacingAndGlyphs">MA</text>
<text class="hd" x="337.6" y="758" textLength="31.4" lengthAdjust="spacingAndGlyphs">OsMA</text>
<rect x="245.7" y="750" width="8.4" height="8" fill="#eef0f8"/><path d="M247.29999999999998 753.6l2.2 2.6 3.4-4.6" stroke="#1e6ae0" stroke-width="1.7" fill="none"/>
<rect x="301.8" y="750" width="8.4" height="8" fill="#eef0f8"/><path d="M303.40000000000003 753.6l2.2 2.6 3.4-4.6" stroke="#1e6ae0" stroke-width="1.7" fill="none"/>
<rect x="373.7" y="750" width="8.4" height="8" fill="#eef0f8"/><path d="M375.3 753.6l2.2 2.6 3.4-4.6" stroke="#1e6ae0" stroke-width="1.7" fill="none"/>
<clipPath id="cp"><rect x="0" y="43" width="1657" height="517"/></clipPath>
<g clip-path="url(#cp)">
<rect x="1285.5" y="211.4" width="26.2" height="17" fill="#000"/>
<text class="lb" x="1287.7" y="224.9">DH</text>
<rect x="1475.5" y="323.7" width="26.2" height="17" fill="#000"/>
<text class="lb" x="1477.7" y="337.2">DH</text>
<rect x="771.8" y="393.5" width="24.4" height="17" fill="#000"/>
<text class="lb" x="774" y="407">DL</text>
<rect x="1158.6" y="420.6" width="24.4" height="17" fill="#000"/>
<text class="lb" x="1160.8" y="434.1">DL</text>
<rect x="1519.8" y="548.2" width="24.4" height="17" fill="#000"/>
<text class="lb" x="1522" y="561.7">DL</text>
</g>
<text class="lv" x="1656.3" y="241.6" text-anchor="end">3.394</text>
<text class="lv" x="1656.3" y="292.6" text-anchor="end">3.252</text>
<text class="lv" x="1656.3" y="334.6" text-anchor="end">3.142</text>
<text class="lv" x="1656.3" y="401.6" text-anchor="end">2.971</text>
<text class="lv" x="1656.3" y="435.6" text-anchor="end">2.890</text>
<path d="M1402 48h207q12 0 12 12v142.500q0 12-12 12h-36L1550 497L1521.300 214.500H1402q-12 0-12-12v-142.500q0-12 12-12z" fill="#1c1c1c" stroke="#98e2e2" stroke-width="2" stroke-linejoin="round"/>
<text class="co" x="1504.6" y="70.8" textLength="187.8" lengthAdjust="spacingAndGlyphs">/NG buy signal to</text>
<text class="co" x="1504.6" y="97.9" textLength="170.6" lengthAdjust="spacingAndGlyphs">come on a solid</text>
<text class="co" x="1504.6" y="124.9" textLength="230.1" lengthAdjust="spacingAndGlyphs">break above this 60m</text>
<text class="co" x="1504.6" y="152" textLength="159.2" lengthAdjust="spacingAndGlyphs">downtrend line</text>
<text class="co" x="1504.6" y="179" textLength="199.4" lengthAdjust="spacingAndGlyphs">following this most</text>
<text class="co" x="1504.6" y="206.1" textLength="216.5" lengthAdjust="spacingAndGlyphs">recent divergent low</text>
<path d="M1557.3 509.1L1576.8 440.9M1566.3 453L1576.8 440.9L1578.5 456.7M1585.3 431.9L1592.1 409.9M1581.9 421.4L1592.1 409.9L1594 425M1600.4 400.7L1611.4 344.1M1601.9 355.6L1611.4 344.1L1614.5 359.2M1615.2 328.3L1621 303M1611.7 315.5L1621 303L1624.3 318.4M1628.3 282.2L1631.7 258.3M1623.3 271.1L1631.7 258.3L1636.2 272.9" stroke="#f4ff00" stroke-width="3" fill="none" stroke-linecap="round" stroke-linejoin="round"/>
<text class="t" x="8" y="13" textLength="126" lengthAdjust="spacingAndGlyphs">NG Dec'24 @NYMEX</text>
<path d="M134 6h10l-5 5z" fill="#fff"/>
<text class="t" x="160" y="13" textLength="180" lengthAdjust="spacingAndGlyphs">6 Months/2 hour candles</text>
<path d="M343 6h10l-5 5z" fill="#fff"/>
<text class="m" x="365" y="13"><tspan text-decoration="underline">F</tspan>ile</text>
<text class="m" x="399" y="13"><tspan text-decoration="underline">E</tspan>dit</text>
<text class="m" x="437" y="13"><tspan text-decoration="underline">V</tspan>iew</text>
<rect x="0" y="27" width="5" height="11" fill="#ececf0"/><path d="M0 32.5L7.5 24.5" stroke="#e23a1e" stroke-width="2.2"/><path d="M0 34.5h4M0 36.5h4" stroke="#b8b8c8" stroke-width=".8"/>
<g stroke-width="1.8" fill="none"><path d="M16 27V37.5M26.3 28V36.5" stroke="#46568a"/><path d="M19.5 24V36M23 25V36.5" stroke="#5c8a66"/></g>
<g stroke-width="1" fill="none"><path d="M14.5 29h1.5M16 34h1.5M24.6 31h1.7M26.3 34h1.5" stroke="#46568a"/><path d="M18 27h1.5M19.5 32h1.5M21.5 29h1.5M23 34h1.5" stroke="#5c8a66"/></g>
<path d="M36.5 38V36M38.5 38V34.5M40.5 38V32.5M42.5 38V29.5M44.5 38V31M46.5 38V33M48.5 38V34" stroke="#4c7c9e" stroke-width="1.3" fill="none"/>
<path d="M73.5 31.5L78.5 36.5" stroke="#c9a987" stroke-width="2.2" stroke-linecap="round"/>
<circle cx="70.5" cy="28.5" r="4" fill="#8a9498" stroke="#a9b1b4" stroke-width="1.3"/>
<path d="M68.3 28.5h4.4M70.5 26.3v4.4" stroke="#5aa04a" stroke-width="1.5"/>
<path d="M95 31.5L100 36.5" stroke="#c9a987" stroke-width="2.2" stroke-linecap="round"/>
<circle cx="92" cy="28.5" r="4" fill="#8a9498" stroke="#a9b1b4" stroke-width="1.3"/>
<path d="M89.6 28.5h4.8" stroke="#c05a4a" stroke-width="1.6"/>
<path d="M108.600 24.200l1.400-.400 3.100 5.900.300-2.300 1.500-.200.700 1.300.900-.900 1.200.300.600 1.200.900-.500 1.200.700 1 3.300-.300 2.900-3.700 2-2.600-.900-2.600-3.600-3.400-1.200.100-1.300 2.900.100z" fill="#fff"/>
<circle cx="136" cy="30.7" r="8" fill="#b08e72"/><path d="M128 30.7h16M136 22.7v16" stroke="#000" stroke-width=".9" stroke-dasharray="1.4 1"/><circle cx="136" cy="30.7" r="1.3" fill="#000"/>
<path d="M163 34.800a4.300 4.300 0 0 0-7.600-4.600" fill="none" stroke="#86a8c6" stroke-width="2.300"/><path d="M150.800 29.400l7.600 3.400-6.300 3z" fill="#9dbcd6"/>
<path d="M172.600 34.800a4.300 4.300 0 0 1 7.600-4.600" fill="none" stroke="#c0c4c6" stroke-width="2.300"/><path d="M184.800 29.400l-7.600 3.400 6.300 3z" fill="#d4d6d8"/>
<path d="M198.800 28.100H193.300v5.800h5.500M198.600 25.700l5.300 5.200-5.300 5" fill="none" stroke="#1e82f0" stroke-width="1.050"/>
<path d="M219.6 25.4h12l-6 12.2z" fill="#fff"/>
<path d="M249.5 24.5l13 13M252.5 24.5l10.5 10.5M249.5 27.5l8 8" stroke="#5c7c8e" stroke-width="1.2"/><rect x="249.2" y="31" width="8" height="6.8" fill="#74a6c0"/><text x="253.2" y="37" text-anchor="middle" style="font-family:'Liberation Serif',serif;font-weight:bold;font-size:7px;fill:#456">T</text><rect x="259.3" y="24.2" width="3.6" height="3.6" fill="#f4ecec" stroke="#a04a44" stroke-width=".8"/>
<path d="M271.5 33.5c-.6-3.4 1.4-6.6 5-7.4 2.6-.6 4 1 4.2 3.4.2 2.6-1.2 5.4-3.4 6.6-2.4 1.2-5.2.4-5.8-2.6z" fill="#d9ca8e"/><path d="M273 35.5c1.6 1.2 4 1 5.2-.2" stroke="#8a7a4a" stroke-width="1" fill="none"/><circle cx="276.4" cy="35.4" r="1.2" fill="#7a7a9a"/><path d="M277.8 27h5.4M280.5 24.3v5.4" stroke="#7ab46a" stroke-width="1.6"/>
<path d="M295.5 24.5h9M295.5 26.5h9M294.5 28.5h10M296.5 30.500h8M296.5 32.5h8M295.5 34.5h9M295.5 36.5h9" stroke="#3c6a68" stroke-width="1.2"/><path d="M292 33v3M293.8 30.500v3.5M295.5 28v3" stroke="#5a9a5a" stroke-width="1"/><path d="M298 31.500h6" stroke="#3a4a8a" stroke-width="1.4"/>
<path d="M312 24.7l14 12.8" stroke="#5c7c8e" stroke-width="1.3"/><rect x="322.4" y="24.2" width="3.6" height="3.6" fill="#f4ecec" stroke="#a04a44" stroke-width=".8"/>
<path d="M333 25l12.5 12.5M336 24.5l11 11M333 28l9.500 9.500" stroke="#5c7c8e" stroke-width="1.2"/><rect x="343.4" y="24.2" width="3.6" height="3.6" fill="#f4ecec" stroke="#a04a44" stroke-width=".8"/>
<rect x="365.5" y="26" width="11" height="11" fill="#cfcfcf"/><path d="M364.5 25h2.500v2.500h-2.500zM375 25h2.500v2.500H375zM364.500 35.500h2.500V38h-2.500zM375 35.500h2.500V38H375z" fill="#bdbdbd"/>
<path d="M386.800 26.500V37.500" stroke="#46568a" stroke-width="1.8"/><path d="M390 24V33" stroke="#5c8a66" stroke-width="1.500"/><path d="M392.500 29.500h3.500v-2l3.500 3.500-3.500 3.500v-2h-3.500z" fill="#6c94b6"/>
<path d="M408 26.500V37.500M411 24V33" stroke="#b4b4b4" stroke-width="1.600"/><path d="M420.500 29.500H417v-2l-3.500 3.500 3.500 3.500v-2h3.500z" fill="#c4c4c4"/>
<rect x="432" y="23.300" width="4" height="15" fill="#c2c2c2"/><path d="M430.500 28v6l-3.200-3zM437.500 28v6l3.200-3z" fill="#d8d8d8"/>
<rect x="454" y="23.300" width="2.200" height="15" fill="#3c5e76"/><path d="M449 28v6l3.400-3zM461.300 28v6l-3.400-3z" fill="#a4d292"/>
<path d="M470.5 25.500V36.500H481.5" stroke="#a2c892" stroke-width="1" fill="none"/><path d="M469 27l1.500-2.500 1.500 2.500zM480.5 35l2.500 1.500-2.500 1.500z" fill="#a2c892"/>
<text x="476.5" y="35.500" text-anchor="middle" style="font-size:8.5px;font-weight:bold;fill:#464e68">A</text>
<path d="M491.5 25.500V36.500H502.5" stroke="#a2c892" stroke-width="1" fill="none"/><path d="M490 27l1.500-2.500 1.500 2.500zM501.5 35l2.500 1.500-2.500 1.500z" fill="#a2c892"/>
<text x="497.5" y="35.500" text-anchor="middle" style="font-size:11px;font-weight:bold;fill:#464e68">A</text>
<path d="M524.500 27.800l6.800 6.800" stroke="#b8b8b8" stroke-width="3" stroke-linecap="butt"/><path d="M521.200 27.300a3.400 3.400 0 0 0 5.600 1.500a3.400 3.400 0 0 0-.400-5.100l-1.900 2.300-1.700-.300-.600-1.700a3.400 3.400 0 0 0-1 3.300zM534.800 35a3.300 3.300 0 0 0-5.500-1.500a3.300 3.300 0 0 0 .400 5l1.900-2.300 1.700.300.600 1.700a3.300 3.300 0 0 0 .900-3.200z" fill="#b8b8b8"/>
<path d="M541.500 31.500l12-8" stroke="#4c6c82" stroke-width="1.200"/><path d="M549.500 28.500v8l2-1.800 1.400 3 1.200-.600-1.400-2.800h2.600z" fill="#d0d0d0"/>
<rect x="564" y="24.800" width="12.400" height="12.400" fill="#7fb2ca"/><text x="570.200" y="35" text-anchor="middle" style="font-family:'Liberation Serif',serif;font-weight:bold;font-size:11px;fill:#4a5054">T</text>
<path d="M585.500 29.500a5 5 0 0 1 8.500-2.500l1.500-1.500.500 5-5-.300 1.500-1.600a3 3 0 0 0-4.800 1.400zM597 32.500a5 5 0 0 1-8.500 2.500l-1.500 1.500-.500-5 5 .300-1.500 1.600a3 3 0 0 0 4.800-1.400z" fill="#d2d2d2"/>
<path d="M603.700 28.200h8.600l-4.300 5.800z" fill="#fff"/>
<circle cx="1556.600" cy="12.300" r="3.400" fill="#808080"/><path d="M1558.200 14.500l2.300 1.800-3.600-.400z" fill="#808080"/>
<circle cx="1551.700" cy="8.100" r="6.100" fill="#111"/><circle cx="1551.700" cy="8.100" r="5.600" fill="#808080"/><path d="M1547.800 11.800l-1.900 2.300 3.900-1z" fill="#808080"/>
<path d="M1549.300 7.500h1.300l1-2 .900.300v1.700h2.100v2.600h-5.300z" fill="#1a1a1a"/>
<path d="M1582.44 6.99L1582.44 9.81L1580.69 10.32L1580.79 10.08L1581.67 11.67L1579.67 13.67L1578.08 12.79L1578.32 12.69L1577.81 14.44L1574.99 14.44L1574.48 12.69L1574.72 12.79L1573.13 13.67L1571.13 11.67L1572.01 10.08L1572.11 10.32L1570.36 9.81L1570.36 6.99L1572.11 6.48L1572.01 6.72L1571.13 5.13L1573.13 3.13L1574.72 4.01L1574.48 4.11L1574.99 2.36L1577.81 2.36L1578.32 4.11L1578.08 4.01L1579.67 3.13L1581.67 5.13L1580.79 6.72L1580.69 6.48ZM1578.7 8.4a2.300 2.300 0 1 0 -4.600 0a2.300 2.300 0 1 0 4.600 0z" fill="#808080" fill-rule="evenodd"/>
<g fill="none" stroke="#808080" stroke-width="1.300"><rect x="-4.400" y="-2.300" width="8.800" height="4.600" rx="2.300" transform="translate(1599.700 5.400) rotate(-45)"/><rect x="-4.400" y="-2.300" width="8.800" height="4.600" rx="2.300" transform="translate(1593.900 11.200) rotate(-45)"/></g>
<g fill="none" stroke="#808080" stroke-width="1.200" stroke-linejoin="round"><path d="M1611.300 13.900l4.300-4.300"/><path d="M1613 7.200l5 5M1614.200 8.400l3.300-3.300M1616.800 11l3.300-3.300M1616.300 4l5.400 5.400"/></g>
<path d="M1628 6.200h5.800l-2.900 3.400z" fill="#808080"/>
<rect x="1647" y="12" width="10.900" height="1.600" fill="#808080"/>
<path d="M1668.600 7V3.700h3.300M1675.200 3.700h3.300V7M1678.500 10v3.300h-3.300M1671.900 13.300h-3.300V10" fill="none" stroke="#808080" stroke-width="1.200"/>
<path d="M1689.700 3.500l9.800 9.800M1699.500 3.500l-9.800 9.800" stroke="#808080" stroke-width="1.100"/>
</svg></body></html>
